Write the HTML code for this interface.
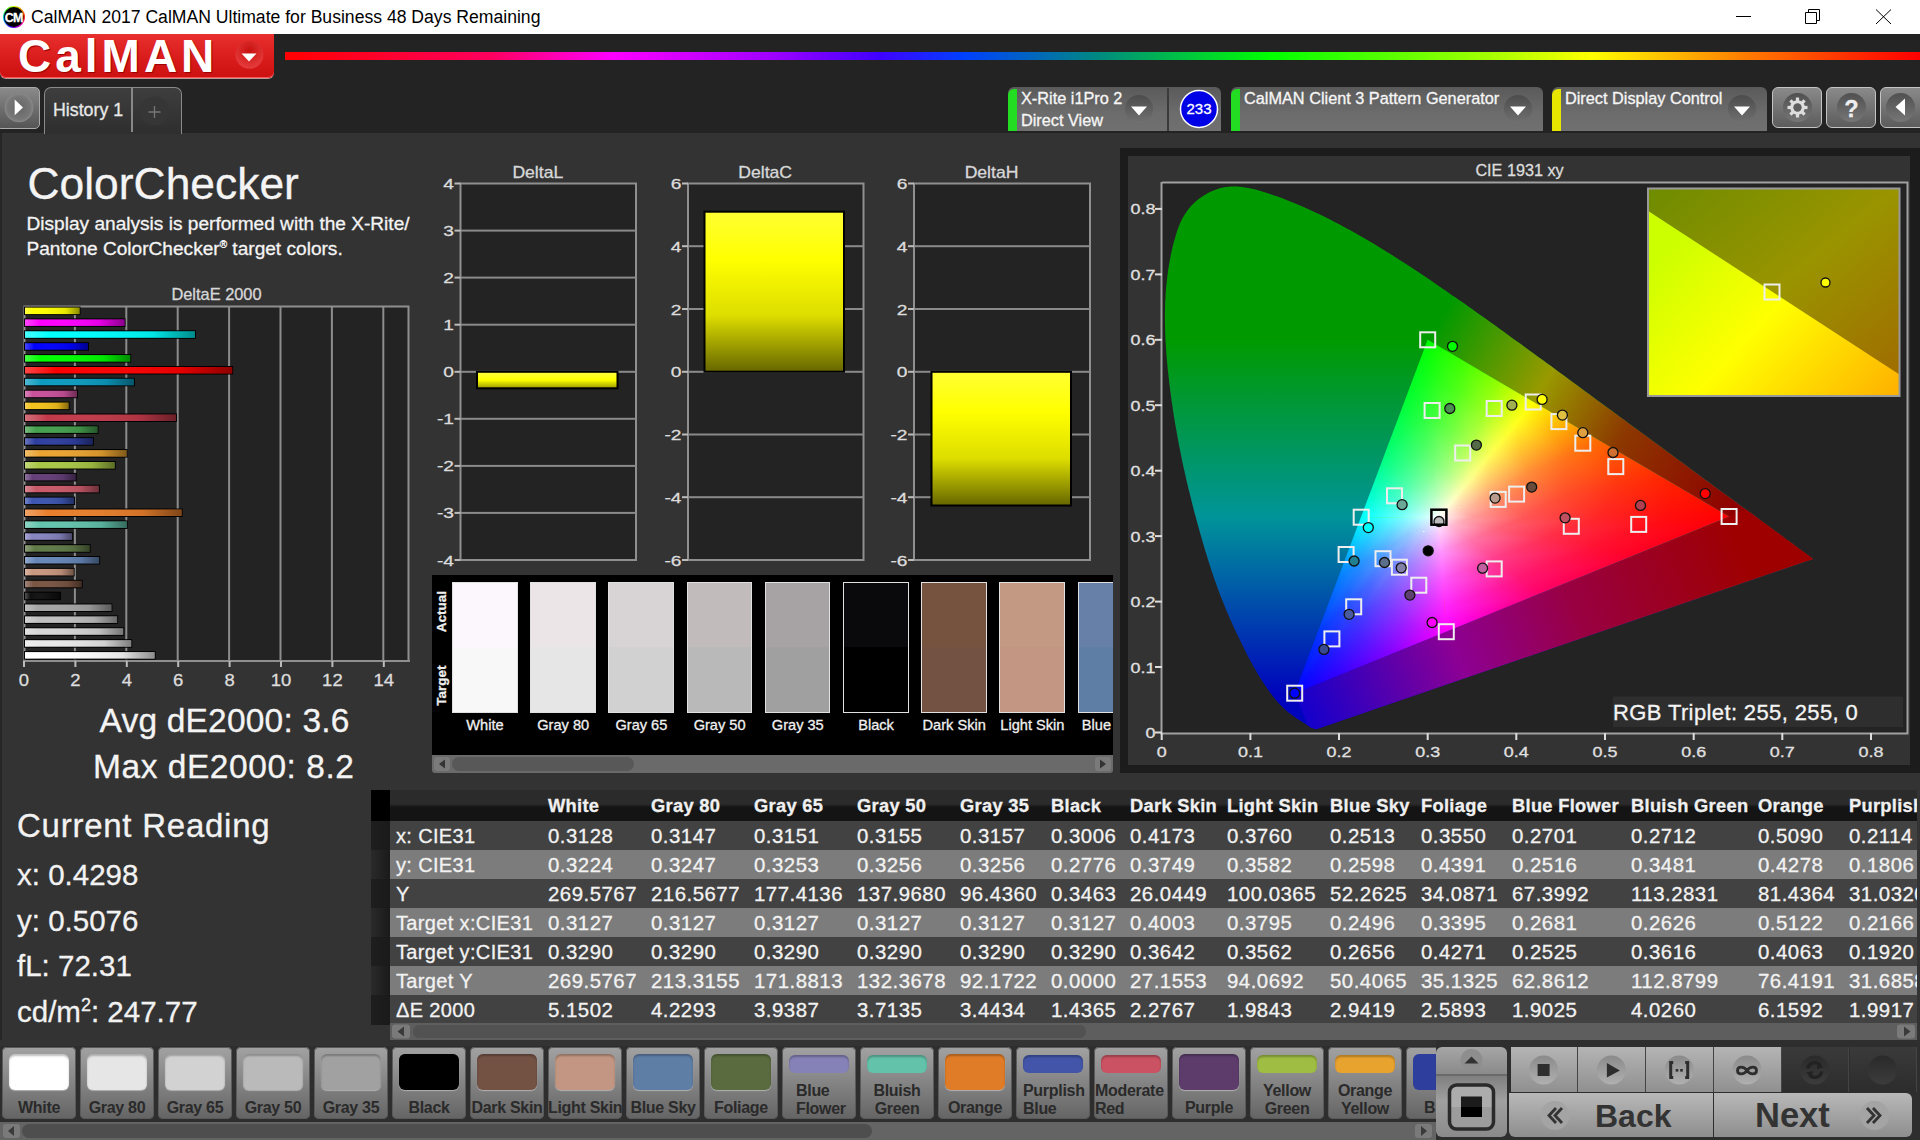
<!DOCTYPE html>
<html><head><meta charset="utf-8"><style>
html,body{margin:0;padding:0}
body{width:1920px;height:1140px;overflow:hidden;position:relative;background:#333;font-family:"Liberation Sans",sans-serif}
.t{position:absolute;white-space:nowrap;font-family:"Liberation Sans",sans-serif;-webkit-text-stroke:0.3px currentColor}
svg{overflow:visible}
svg text{font-family:"Liberation Sans",sans-serif}
</style></head><body>
<div style="position:absolute;left:0;top:0;width:1920px;height:34px;background:#fff"></div><div style="position:absolute;left:2.8px;top:6px;width:22px;height:22px;border-radius:50%;background:conic-gradient(#ccff00,#ff3300 80deg,#ff00aa 130deg,#3300ff 200deg,#00ccff 260deg,#33ff33 310deg,#ccff00)"></div><svg style="position:absolute;left:0;top:0" width="40" height="34">
<circle cx="13.8" cy="17" r="10" fill="#000"/>
<text x="13.6" y="21.5" font-family="Liberation Sans" font-weight="bold" font-size="12.5" fill="#fff" text-anchor="middle" letter-spacing="-0.8" stroke="#fff" stroke-width="0.3">CM</text></svg><div class="t" style="left:31px;top:6px;font-size:17.6px;color:#000;line-height:22px;-webkit-text-stroke:0">CalMAN 2017 CalMAN Ultimate for Business 48 Days Remaining</div><svg style="position:absolute;left:1720px;top:0" width="200" height="34" fill="none" stroke="#000" stroke-width="1">
<path d="M16 16.5h15"/>
<path d="M85.5 12.5h11v11h-11z"/><path d="M88.5 12.5v-3h11v11h-3"/>
<path d="M156 9.5l15 14.5M171 9.5l-15 14.5"/></svg><div style="position:absolute;left:0;top:34px;width:1920px;height:99px;background:#232323"></div><div style="position:absolute;left:0;top:34px;width:274px;height:44px;border-radius:0 0 6px 6px;background:linear-gradient(#e8302f,#d81a1a 60%,#cc1111);box-shadow:inset 0 -1px 0 #f55, 0 1px 0 #b99"></div><div class="t" style="left:18px;top:31px;font-size:46px;font-weight:bold;color:#fff;letter-spacing:4px;line-height:50px;text-shadow:1px 1px 1px #900;-webkit-text-stroke:0">CalMAN</div><svg style="position:absolute;left:230px;top:38px" width="40" height="36"><defs><radialGradient id="rdg" cx="0.5" cy="0.35" r="0.6"><stop offset="0" stop-color="#c81010"/><stop offset="1" stop-color="#e53a3a"/></radialGradient></defs>
<circle cx="19.4" cy="16.8" r="14" fill="url(#rdg)"/><path d="M11.5 15.5h15l-7.5 8z" fill="#fff"/></svg><div style="position:absolute;left:285px;top:52px;width:1635px;height:8px;background:linear-gradient(90deg,#ff0000 0%,#ff0060 12.7%,#ff00ff 20%,#a000ff 29.7%,#4000ff 36.3%,#0040ff 41.5%,#008a80 49.8%,#00ff00 60.3%,#a0ff00 73.3%,#ffff00 79.9%,#ff8000 89%,#ff2000 96.9%,#ff0000 100%)"></div><div style="position:absolute;left:-4px;top:87px;width:42px;height:40px;border:1.5px solid #aaa;border-radius:5px;background:linear-gradient(#8a8a8a,#555)"></div>
<svg style="position:absolute;left:0;top:87px" width="40" height="42"><defs><radialGradient id="btc" cx="0.5" cy="0.5" r="0.5"><stop offset="0" stop-color="#666"/><stop offset="0.8" stop-color="#777"/><stop offset="1" stop-color="#888"/></radialGradient></defs>
<circle cx="19" cy="20.8" r="14.4" fill="url(#btc)"/><path d="M14.7 12.5L23 20.5L14.7 28.2Z" fill="#fff"/></svg><div style="position:absolute;left:43.5px;top:87px;width:136px;height:46px;border:1.5px solid #8a8a8a;border-bottom:none;border-radius:7px 7px 0 0;background:linear-gradient(#3e3e3e,#2e2e2e)"></div>
<div style="position:absolute;left:131px;top:88px;width:1.5px;height:44px;background:#888"></div>
<div class="t" style="left:53px;top:99px;font-size:17.8px;color:#e8e8e8;line-height:22px">History 1</div>
<svg style="position:absolute;left:133px;top:88px" width="46" height="44"><circle cx="21.5" cy="23" r="14.5" fill="#363636"/><path d="M15.5 24h12M21.5 18v12" stroke="#777" stroke-width="1.3"/></svg><div style="position:absolute;left:1008px;top:87px;width:213px;height:44px;border-radius:6px 6px 0 0;background:linear-gradient(#5a5a5a,#6c6c6c 60%,#707070);overflow:hidden"><div style="position:absolute;left:0;top:2px;width:9px;height:44px;border-radius:6px 0 0 0;background:#22dd22"></div></div><div class="t" style="left:1021px;top:88.0px;font-size:16.3px;color:#f6f6f6;line-height:20px">X-Rite i1Pro 2</div><div class="t" style="left:1021px;top:109.5px;font-size:16.3px;color:#f6f6f6;line-height:20px">Direct View</div><svg style="position:absolute;left:1119px;top:87px" width="40" height="44"><defs><linearGradient id="ddg1008" x1="0" y1="0" x2="0" y2="1"><stop offset="0" stop-color="#4c4c4c"/><stop offset="1" stop-color="#707070"/></linearGradient></defs><circle cx="20" cy="22" r="14" fill="url(#ddg1008)"/><path d="M12 19.5h16l-8 9z" fill="#fff"/></svg><div style="position:absolute;left:1167px;top:88px;width:2px;height:43px;background:#3a3a3a"></div><svg style="position:absolute;left:1178px;top:88px" width="42" height="42"><circle cx="21" cy="21" r="18.5" fill="#0000e6" stroke="#fff" stroke-width="1.5"/><text x="21" y="26.3" font-family="Liberation Sans" font-size="15" fill="#fff" text-anchor="middle" stroke="#fff" stroke-width="0.3">233</text></svg><div style="position:absolute;left:1231px;top:87px;width:312px;height:44px;border-radius:6px 6px 0 0;background:linear-gradient(#5a5a5a,#6c6c6c 60%,#707070);overflow:hidden"><div style="position:absolute;left:0;top:2px;width:9px;height:44px;border-radius:6px 0 0 0;background:#22dd22"></div></div><div class="t" style="left:1244px;top:88.0px;font-size:16.3px;color:#f6f6f6;line-height:20px">CalMAN Client 3 Pattern Generator</div><svg style="position:absolute;left:1498px;top:87px" width="40" height="44"><defs><linearGradient id="ddg1231" x1="0" y1="0" x2="0" y2="1"><stop offset="0" stop-color="#4c4c4c"/><stop offset="1" stop-color="#707070"/></linearGradient></defs><circle cx="20" cy="22" r="14" fill="url(#ddg1231)"/><path d="M12 19.5h16l-8 9z" fill="#fff"/></svg><div style="position:absolute;left:1552px;top:87px;width:215px;height:44px;border-radius:6px 6px 0 0;background:linear-gradient(#5a5a5a,#6c6c6c 60%,#707070);overflow:hidden"><div style="position:absolute;left:0;top:2px;width:9px;height:44px;border-radius:6px 0 0 0;background:#e6e600"></div></div><div class="t" style="left:1565px;top:88.0px;font-size:16.3px;color:#f6f6f6;line-height:20px">Direct Display Control</div><svg style="position:absolute;left:1722px;top:87px" width="40" height="44"><defs><linearGradient id="ddg1552" x1="0" y1="0" x2="0" y2="1"><stop offset="0" stop-color="#4c4c4c"/><stop offset="1" stop-color="#707070"/></linearGradient></defs><circle cx="20" cy="22" r="14" fill="url(#ddg1552)"/><path d="M12 19.5h16l-8 9z" fill="#fff"/></svg><div style="position:absolute;left:1772px;top:86.5px;width:48px;height:39px;border:1.5px solid #c4c4c4;border-radius:6px;background:linear-gradient(#8a8a8a,#5c5c5c)"></div><svg style="position:absolute;left:1772px;top:86px" width="51" height="42"><defs><linearGradient id="ibg1772" x1="0" y1="0" x2="0" y2="1"><stop offset="0" stop-color="#505050"/><stop offset="1" stop-color="#767676"/></linearGradient></defs><circle cx="25.5" cy="21.5" r="14.5" fill="url(#ibg1772)"/><g transform="translate(25.5,21.5)" fill="#dedede"><circle r="7.3"/><rect x="-1.6" y="-10" width="3.2" height="4" transform="rotate(0)"/><rect x="-1.6" y="-10" width="3.2" height="4" transform="rotate(45)"/><rect x="-1.6" y="-10" width="3.2" height="4" transform="rotate(90)"/><rect x="-1.6" y="-10" width="3.2" height="4" transform="rotate(135)"/><rect x="-1.6" y="-10" width="3.2" height="4" transform="rotate(180)"/><rect x="-1.6" y="-10" width="3.2" height="4" transform="rotate(225)"/><rect x="-1.6" y="-10" width="3.2" height="4" transform="rotate(270)"/><rect x="-1.6" y="-10" width="3.2" height="4" transform="rotate(315)"/><circle r="4.2" fill="#5e5e5e"/></g></svg><div style="position:absolute;left:1826px;top:86.5px;width:48px;height:39px;border:1.5px solid #c4c4c4;border-radius:6px;background:linear-gradient(#8a8a8a,#5c5c5c)"></div><svg style="position:absolute;left:1826px;top:86px" width="51" height="42"><defs><linearGradient id="ibg1826" x1="0" y1="0" x2="0" y2="1"><stop offset="0" stop-color="#505050"/><stop offset="1" stop-color="#767676"/></linearGradient></defs><circle cx="25.5" cy="21.5" r="14.5" fill="url(#ibg1826)"/><text x="25.5" y="30.5" font-family="Liberation Sans" font-weight="bold" font-size="23.5" fill="#eee" text-anchor="middle" stroke="#eee" stroke-width="0.3">?</text></svg><div style="position:absolute;left:1880px;top:86.5px;width:48px;height:39px;border:1.5px solid #c4c4c4;border-radius:6px;background:linear-gradient(#8a8a8a,#5c5c5c)"></div><svg style="position:absolute;left:1880px;top:86px" width="51" height="42"><defs><linearGradient id="ibg1880" x1="0" y1="0" x2="0" y2="1"><stop offset="0" stop-color="#505050"/><stop offset="1" stop-color="#767676"/></linearGradient></defs><circle cx="20.5" cy="21.5" r="14.5" fill="url(#ibg1880)"/><path d="M25 12.5l-9.5 8.5l9.5 8.5z" fill="#fff"/></svg>
<div style="position:absolute;left:0;top:133px;width:2px;height:907px;background:#262626"></div><div class="t" style="left:27.5px;top:156.5px;font-size:44.4px;color:#f4f4f4;line-height:54px">ColorChecker</div><div class="t" style="left:26.5px;top:211px;font-size:19.1px;color:#f4f4f4;line-height:25px">Display analysis is performed with the X-Rite/<br>Pantone ColorChecker<sup style="font-size:10px;vertical-align:7px;line-height:0">&reg;</sup> target colors.</div><svg style="position:absolute;left:0;top:0" width="440" height="700"><defs><linearGradient id="bsh" x1="0" y1="0" x2="1" y2="0"><stop offset="0" stop-color="#fff" stop-opacity="0.28"/><stop offset="0.15" stop-color="#fff" stop-opacity="0"/><stop offset="0.75" stop-color="#000" stop-opacity="0.1"/><stop offset="1" stop-color="#000" stop-opacity="0.45"/></linearGradient></defs><rect x="24.5" y="306" width="384" height="354.5" fill="#232323"/><rect x="73.9" y="306" width="2" height="355" fill="#8c8c8c"/><rect x="125.3" y="306" width="2" height="355" fill="#8c8c8c"/><rect x="176.7" y="306" width="2" height="355" fill="#8c8c8c"/><rect x="228.1" y="306" width="2" height="355" fill="#8c8c8c"/><rect x="279.5" y="306" width="2" height="355" fill="#8c8c8c"/><rect x="330.9" y="306" width="2" height="355" fill="#8c8c8c"/><rect x="382.3" y="306" width="2" height="355" fill="#8c8c8c"/><path d="M24.5 661V306.5H408.5V661" fill="none" stroke="#8f8f8f" stroke-width="2"/><rect x="23" y="660" width="387" height="2" fill="#8f8f8f"/><rect x="23.0" y="661" width="2" height="6" fill="#bbb"/><text transform="translate(24.0,686) scale(1.12,0.95)" font-size="16.5" fill="#dcdcdc" text-anchor="middle" stroke="#dcdcdc" stroke-width="0.3">0</text><rect x="74.4" y="661" width="2" height="6" fill="#bbb"/><text transform="translate(75.4,686) scale(1.12,0.95)" font-size="16.5" fill="#dcdcdc" text-anchor="middle" stroke="#dcdcdc" stroke-width="0.3">2</text><rect x="125.8" y="661" width="2" height="6" fill="#bbb"/><text transform="translate(126.8,686) scale(1.12,0.95)" font-size="16.5" fill="#dcdcdc" text-anchor="middle" stroke="#dcdcdc" stroke-width="0.3">4</text><rect x="177.2" y="661" width="2" height="6" fill="#bbb"/><text transform="translate(178.2,686) scale(1.12,0.95)" font-size="16.5" fill="#dcdcdc" text-anchor="middle" stroke="#dcdcdc" stroke-width="0.3">6</text><rect x="228.6" y="661" width="2" height="6" fill="#bbb"/><text transform="translate(229.6,686) scale(1.12,0.95)" font-size="16.5" fill="#dcdcdc" text-anchor="middle" stroke="#dcdcdc" stroke-width="0.3">8</text><rect x="280.0" y="661" width="2" height="6" fill="#bbb"/><text transform="translate(281.0,686) scale(1.12,0.95)" font-size="16.5" fill="#dcdcdc" text-anchor="middle" stroke="#dcdcdc" stroke-width="0.3">10</text><rect x="331.4" y="661" width="2" height="6" fill="#bbb"/><text transform="translate(332.4,686) scale(1.12,0.95)" font-size="16.5" fill="#dcdcdc" text-anchor="middle" stroke="#dcdcdc" stroke-width="0.3">12</text><rect x="382.8" y="661" width="2" height="6" fill="#bbb"/><text transform="translate(383.8,686) scale(1.12,0.95)" font-size="16.5" fill="#dcdcdc" text-anchor="middle" stroke="#dcdcdc" stroke-width="0.3">14</text><rect x="24" y="306.6" width="56.5" height="8.5" fill="#000"/><rect x="25" y="307.6" width="54.5" height="6.5" fill="#ffff00"/><rect x="25" y="307.6" width="54.5" height="6.5" fill="url(#bsh)"/><rect x="24" y="318.4" width="101.5" height="8.5" fill="#000"/><rect x="25" y="319.4" width="99.5" height="6.5" fill="#ff00ff"/><rect x="25" y="319.4" width="99.5" height="6.5" fill="url(#bsh)"/><rect x="24" y="330.3" width="171.9" height="8.5" fill="#000"/><rect x="25" y="331.3" width="169.9" height="6.5" fill="#00ffff"/><rect x="25" y="331.3" width="169.9" height="6.5" fill="url(#bsh)"/><rect x="24" y="342.2" width="65.0" height="8.5" fill="#000"/><rect x="25" y="343.2" width="63.0" height="6.5" fill="#0000ff"/><rect x="25" y="343.2" width="63.0" height="6.5" fill="url(#bsh)"/><rect x="24" y="354.1" width="107.2" height="8.5" fill="#000"/><rect x="25" y="355.1" width="105.2" height="6.5" fill="#00ff00"/><rect x="25" y="355.1" width="105.2" height="6.5" fill="url(#bsh)"/><rect x="24" y="366.0" width="209.2" height="8.5" fill="#000"/><rect x="25" y="367.0" width="207.2" height="6.5" fill="#ff0000"/><rect x="25" y="367.0" width="207.2" height="6.5" fill="url(#bsh)"/><rect x="24" y="377.8" width="111.0" height="8.5" fill="#000"/><rect x="25" y="378.8" width="109.0" height="6.5" fill="#0c9cc0"/><rect x="25" y="378.8" width="109.0" height="6.5" fill="url(#bsh)"/><rect x="24" y="389.7" width="54.0" height="8.5" fill="#000"/><rect x="25" y="390.7" width="52.0" height="6.5" fill="#c8519b"/><rect x="25" y="390.7" width="52.0" height="6.5" fill="url(#bsh)"/><rect x="24" y="401.6" width="45.5" height="8.5" fill="#000"/><rect x="25" y="402.6" width="43.5" height="6.5" fill="#f4c21c"/><rect x="25" y="402.6" width="43.5" height="6.5" fill="url(#bsh)"/><rect x="24" y="413.5" width="152.9" height="8.5" fill="#000"/><rect x="25" y="414.5" width="150.9" height="6.5" fill="#c23a4a"/><rect x="25" y="414.5" width="150.9" height="6.5" fill="url(#bsh)"/><rect x="24" y="425.4" width="74.5" height="8.5" fill="#000"/><rect x="25" y="426.4" width="72.5" height="6.5" fill="#45a04e"/><rect x="25" y="426.4" width="72.5" height="6.5" fill="url(#bsh)"/><rect x="24" y="437.2" width="69.9" height="8.5" fill="#000"/><rect x="25" y="438.2" width="67.9" height="6.5" fill="#2f3fa0"/><rect x="25" y="438.2" width="67.9" height="6.5" fill="url(#bsh)"/><rect x="24" y="449.1" width="103.6" height="8.5" fill="#000"/><rect x="25" y="450.1" width="101.6" height="6.5" fill="#eba431"/><rect x="25" y="450.1" width="101.6" height="6.5" fill="url(#bsh)"/><rect x="24" y="461.0" width="91.7" height="8.5" fill="#000"/><rect x="25" y="462.0" width="89.7" height="6.5" fill="#a8c746"/><rect x="25" y="462.0" width="89.7" height="6.5" fill="url(#bsh)"/><rect x="24" y="472.9" width="52.7" height="8.5" fill="#000"/><rect x="25" y="473.9" width="50.7" height="6.5" fill="#643e78"/><rect x="25" y="473.9" width="50.7" height="6.5" fill="url(#bsh)"/><rect x="24" y="484.8" width="75.8" height="8.5" fill="#000"/><rect x="25" y="485.8" width="73.8" height="6.5" fill="#c85a6a"/><rect x="25" y="485.8" width="73.8" height="6.5" fill="url(#bsh)"/><rect x="24" y="496.6" width="51.1" height="8.5" fill="#000"/><rect x="25" y="497.6" width="49.1" height="6.5" fill="#3c55b0"/><rect x="25" y="497.6" width="49.1" height="6.5" fill="url(#bsh)"/><rect x="24" y="508.5" width="158.6" height="8.5" fill="#000"/><rect x="25" y="509.5" width="156.6" height="6.5" fill="#e87f2c"/><rect x="25" y="509.5" width="156.6" height="6.5" fill="url(#bsh)"/><rect x="24" y="520.4" width="103.8" height="8.5" fill="#000"/><rect x="25" y="521.4" width="101.8" height="6.5" fill="#63c4ad"/><rect x="25" y="521.4" width="101.8" height="6.5" fill="url(#bsh)"/><rect x="24" y="532.3" width="49.1" height="8.5" fill="#000"/><rect x="25" y="533.3" width="47.1" height="6.5" fill="#8784c0"/><rect x="25" y="533.3" width="47.1" height="6.5" fill="url(#bsh)"/><rect x="24" y="544.2" width="66.6" height="8.5" fill="#000"/><rect x="25" y="545.2" width="64.6" height="6.5" fill="#607a48"/><rect x="25" y="545.2" width="64.6" height="6.5" fill="url(#bsh)"/><rect x="24" y="556.0" width="76.1" height="8.5" fill="#000"/><rect x="25" y="557.0" width="74.1" height="6.5" fill="#6687b8"/><rect x="25" y="557.0" width="74.1" height="6.5" fill="url(#bsh)"/><rect x="24" y="567.9" width="50.6" height="8.5" fill="#000"/><rect x="25" y="568.9" width="48.6" height="6.5" fill="#c99880"/><rect x="25" y="568.9" width="48.6" height="6.5" fill="url(#bsh)"/><rect x="24" y="579.8" width="58.6" height="8.5" fill="#000"/><rect x="25" y="580.8" width="56.6" height="6.5" fill="#7a5543"/><rect x="25" y="580.8" width="56.6" height="6.5" fill="url(#bsh)"/><rect x="24" y="591.7" width="37.0" height="8.5" fill="#000"/><rect x="25" y="592.7" width="35.0" height="6.5" fill="#111111"/><rect x="25" y="592.7" width="35.0" height="6.5" fill="url(#bsh)"/><rect x="24" y="603.5" width="88.4" height="8.5" fill="#000"/><rect x="25" y="604.5" width="86.4" height="6.5" fill="#a5a5a5"/><rect x="25" y="604.5" width="86.4" height="6.5" fill="url(#bsh)"/><rect x="24" y="615.4" width="94.1" height="8.5" fill="#000"/><rect x="25" y="616.4" width="92.1" height="6.5" fill="#c0c0c0"/><rect x="25" y="616.4" width="92.1" height="6.5" fill="url(#bsh)"/><rect x="24" y="627.3" width="100.2" height="8.5" fill="#000"/><rect x="25" y="628.3" width="98.2" height="6.5" fill="#d6d6d6"/><rect x="25" y="628.3" width="98.2" height="6.5" fill="url(#bsh)"/><rect x="24" y="639.2" width="108.2" height="8.5" fill="#000"/><rect x="25" y="640.2" width="106.2" height="6.5" fill="#e8e8e8"/><rect x="25" y="640.2" width="106.2" height="6.5" fill="url(#bsh)"/><rect x="24" y="651.1" width="131.6" height="8.5" fill="#000"/><rect x="25" y="652.1" width="129.6" height="6.5" fill="#ffffff"/><rect x="25" y="652.1" width="129.6" height="6.5" fill="url(#bsh)"/><text x="216.5" y="300" font-size="16.4" fill="#d8d8d8" text-anchor="middle" stroke="#d8d8d8" stroke-width="0.3">DeltaE 2000</text></svg><div class="t" style="left:99.5px;top:701px;font-size:33.5px;letter-spacing:0.2px;color:#f4f4f4;line-height:40px">Avg dE2000: 3.6</div><div class="t" style="left:93px;top:747px;font-size:33.5px;letter-spacing:0.55px;color:#f4f4f4;line-height:40px">Max dE2000: 8.2</div><svg style="position:absolute;left:0;top:0" width="1120" height="600"><defs><linearGradient id="ylg" x1="0" y1="0" x2="0" y2="1"><stop offset="0" stop-color="#ffff33"/><stop offset="0.3" stop-color="#ffff00"/><stop offset="0.65" stop-color="#dddd00"/><stop offset="1" stop-color="#666600"/></linearGradient><linearGradient id="ylg2" x1="0" y1="0" x2="0" y2="1"><stop offset="0" stop-color="#ffff44"/><stop offset="0.5" stop-color="#ffff00"/><stop offset="1" stop-color="#999900"/></linearGradient></defs><rect x="460.5" y="183.5" width="175.5" height="376.5" fill="#232323" stroke="#8f8f8f" stroke-width="2"/><rect x="454.5" y="182.5" width="6" height="2" fill="#bbb"/><text transform="translate(454.0,189.0) scale(1.2,0.92)" font-size="16" fill="#dcdcdc" text-anchor="end" stroke="#dcdcdc" stroke-width="0.3">4</text><rect x="460.5" y="229.6" width="175.5" height="2" fill="#8a8a8a"/><rect x="454.5" y="229.6" width="6" height="2" fill="#bbb"/><text transform="translate(454.0,236.1) scale(1.2,0.92)" font-size="16" fill="#dcdcdc" text-anchor="end" stroke="#dcdcdc" stroke-width="0.3">3</text><rect x="460.5" y="276.6" width="175.5" height="2" fill="#8a8a8a"/><rect x="454.5" y="276.6" width="6" height="2" fill="#bbb"/><text transform="translate(454.0,283.1) scale(1.2,0.92)" font-size="16" fill="#dcdcdc" text-anchor="end" stroke="#dcdcdc" stroke-width="0.3">2</text><rect x="460.5" y="323.7" width="175.5" height="2" fill="#8a8a8a"/><rect x="454.5" y="323.7" width="6" height="2" fill="#bbb"/><text transform="translate(454.0,330.2) scale(1.2,0.92)" font-size="16" fill="#dcdcdc" text-anchor="end" stroke="#dcdcdc" stroke-width="0.3">1</text><rect x="460.5" y="370.8" width="175.5" height="2" fill="#8a8a8a"/><rect x="454.5" y="370.8" width="6" height="2" fill="#bbb"/><text transform="translate(454.0,377.2) scale(1.2,0.92)" font-size="16" fill="#dcdcdc" text-anchor="end" stroke="#dcdcdc" stroke-width="0.3">0</text><rect x="460.5" y="417.8" width="175.5" height="2" fill="#8a8a8a"/><rect x="454.5" y="417.8" width="6" height="2" fill="#bbb"/><text transform="translate(454.0,424.3) scale(1.2,0.92)" font-size="16" fill="#dcdcdc" text-anchor="end" stroke="#dcdcdc" stroke-width="0.3">-1</text><rect x="460.5" y="464.9" width="175.5" height="2" fill="#8a8a8a"/><rect x="454.5" y="464.9" width="6" height="2" fill="#bbb"/><text transform="translate(454.0,471.4) scale(1.2,0.92)" font-size="16" fill="#dcdcdc" text-anchor="end" stroke="#dcdcdc" stroke-width="0.3">-2</text><rect x="460.5" y="511.9" width="175.5" height="2" fill="#8a8a8a"/><rect x="454.5" y="511.9" width="6" height="2" fill="#bbb"/><text transform="translate(454.0,518.4) scale(1.2,0.92)" font-size="16" fill="#dcdcdc" text-anchor="end" stroke="#dcdcdc" stroke-width="0.3">-3</text><rect x="454.5" y="559.0" width="6" height="2" fill="#bbb"/><text transform="translate(454.0,565.5) scale(1.2,0.92)" font-size="16" fill="#dcdcdc" text-anchor="end" stroke="#dcdcdc" stroke-width="0.3">-4</text><text transform="translate(537.8,178.3) scale(1.1,1)" font-size="16" fill="#d8d8d8" text-anchor="middle" stroke="#d8d8d8" stroke-width="0.3">DeltaL</text><rect x="477.0" y="371.8" width="140.5" height="16.5" fill="url(#ylg2)" stroke="#000" stroke-width="2"/><rect x="688.0" y="183.5" width="175.5" height="376.5" fill="#232323" stroke="#8f8f8f" stroke-width="2"/><rect x="682.0" y="182.5" width="6" height="2" fill="#bbb"/><text transform="translate(681.5,189.0) scale(1.2,0.92)" font-size="16" fill="#dcdcdc" text-anchor="end" stroke="#dcdcdc" stroke-width="0.3">6</text><rect x="688.0" y="245.2" width="175.5" height="2" fill="#8a8a8a"/><rect x="682.0" y="245.2" width="6" height="2" fill="#bbb"/><text transform="translate(681.5,251.8) scale(1.2,0.92)" font-size="16" fill="#dcdcdc" text-anchor="end" stroke="#dcdcdc" stroke-width="0.3">4</text><rect x="688.0" y="308.0" width="175.5" height="2" fill="#8a8a8a"/><rect x="682.0" y="308.0" width="6" height="2" fill="#bbb"/><text transform="translate(681.5,314.5) scale(1.2,0.92)" font-size="16" fill="#dcdcdc" text-anchor="end" stroke="#dcdcdc" stroke-width="0.3">2</text><rect x="688.0" y="370.8" width="175.5" height="2" fill="#8a8a8a"/><rect x="682.0" y="370.8" width="6" height="2" fill="#bbb"/><text transform="translate(681.5,377.2) scale(1.2,0.92)" font-size="16" fill="#dcdcdc" text-anchor="end" stroke="#dcdcdc" stroke-width="0.3">0</text><rect x="688.0" y="433.5" width="175.5" height="2" fill="#8a8a8a"/><rect x="682.0" y="433.5" width="6" height="2" fill="#bbb"/><text transform="translate(681.5,440.0) scale(1.2,0.92)" font-size="16" fill="#dcdcdc" text-anchor="end" stroke="#dcdcdc" stroke-width="0.3">-2</text><rect x="688.0" y="496.2" width="175.5" height="2" fill="#8a8a8a"/><rect x="682.0" y="496.2" width="6" height="2" fill="#bbb"/><text transform="translate(681.5,502.8) scale(1.2,0.92)" font-size="16" fill="#dcdcdc" text-anchor="end" stroke="#dcdcdc" stroke-width="0.3">-4</text><rect x="682.0" y="559.0" width="6" height="2" fill="#bbb"/><text transform="translate(681.5,565.5) scale(1.2,0.92)" font-size="16" fill="#dcdcdc" text-anchor="end" stroke="#dcdcdc" stroke-width="0.3">-6</text><text transform="translate(765.2,178.3) scale(1.1,1)" font-size="16" fill="#d8d8d8" text-anchor="middle" stroke="#d8d8d8" stroke-width="0.3">DeltaC</text><rect x="704.5" y="211.7" width="139.5" height="160.0" fill="url(#ylg)" stroke="#000" stroke-width="2"/><rect x="914.0" y="183.5" width="176.0" height="376.5" fill="#232323" stroke="#8f8f8f" stroke-width="2"/><rect x="908.0" y="182.5" width="6" height="2" fill="#bbb"/><text transform="translate(907.5,189.0) scale(1.2,0.92)" font-size="16" fill="#dcdcdc" text-anchor="end" stroke="#dcdcdc" stroke-width="0.3">6</text><rect x="914.0" y="245.2" width="176.0" height="2" fill="#8a8a8a"/><rect x="908.0" y="245.2" width="6" height="2" fill="#bbb"/><text transform="translate(907.5,251.8) scale(1.2,0.92)" font-size="16" fill="#dcdcdc" text-anchor="end" stroke="#dcdcdc" stroke-width="0.3">4</text><rect x="914.0" y="308.0" width="176.0" height="2" fill="#8a8a8a"/><rect x="908.0" y="308.0" width="6" height="2" fill="#bbb"/><text transform="translate(907.5,314.5) scale(1.2,0.92)" font-size="16" fill="#dcdcdc" text-anchor="end" stroke="#dcdcdc" stroke-width="0.3">2</text><rect x="914.0" y="370.8" width="176.0" height="2" fill="#8a8a8a"/><rect x="908.0" y="370.8" width="6" height="2" fill="#bbb"/><text transform="translate(907.5,377.2) scale(1.2,0.92)" font-size="16" fill="#dcdcdc" text-anchor="end" stroke="#dcdcdc" stroke-width="0.3">0</text><rect x="914.0" y="433.5" width="176.0" height="2" fill="#8a8a8a"/><rect x="908.0" y="433.5" width="6" height="2" fill="#bbb"/><text transform="translate(907.5,440.0) scale(1.2,0.92)" font-size="16" fill="#dcdcdc" text-anchor="end" stroke="#dcdcdc" stroke-width="0.3">-2</text><rect x="914.0" y="496.2" width="176.0" height="2" fill="#8a8a8a"/><rect x="908.0" y="496.2" width="6" height="2" fill="#bbb"/><text transform="translate(907.5,502.8) scale(1.2,0.92)" font-size="16" fill="#dcdcdc" text-anchor="end" stroke="#dcdcdc" stroke-width="0.3">-4</text><rect x="908.0" y="559.0" width="6" height="2" fill="#bbb"/><text transform="translate(907.5,565.5) scale(1.2,0.92)" font-size="16" fill="#dcdcdc" text-anchor="end" stroke="#dcdcdc" stroke-width="0.3">-6</text><text transform="translate(991.5,178.3) scale(1.1,1)" font-size="16" fill="#d8d8d8" text-anchor="middle" stroke="#d8d8d8" stroke-width="0.3">DeltaH</text><rect x="931.5" y="371.8" width="139.5" height="133.7" fill="url(#ylg)" stroke="#000" stroke-width="2"/></svg><div style="position:absolute;left:432px;top:575px;width:681px;height:180px;background:#000;overflow:hidden"><div style="position:absolute;left:20.0px;top:7px;width:63.5px;height:128.5px;border:1.5px solid #e0e0e0;background:linear-gradient(#fcf7fc 50%,#f8f8f8 50%)"></div><div class="t" style="left:20.0px;top:141px;width:66px;text-align:center;font-size:14.6px;color:#f0f0f0;line-height:18px">White</div><div style="position:absolute;left:98.2px;top:7px;width:63.5px;height:128.5px;border:1.5px solid #e0e0e0;background:linear-gradient(#ebe5e7 50%,#e6e6e6 50%)"></div><div class="t" style="left:98.2px;top:141px;width:66px;text-align:center;font-size:14.6px;color:#f0f0f0;line-height:18px">Gray 80</div><div style="position:absolute;left:176.4px;top:7px;width:63.5px;height:128.5px;border:1.5px solid #e0e0e0;background:linear-gradient(#d8d3d5 50%,#d1d1d1 50%)"></div><div class="t" style="left:176.4px;top:141px;width:66px;text-align:center;font-size:14.6px;color:#f0f0f0;line-height:18px">Gray 65</div><div style="position:absolute;left:254.6px;top:7px;width:63.5px;height:128.5px;border:1.5px solid #e0e0e0;background:linear-gradient(#c1bbbc 50%,#b9b9b9 50%)"></div><div class="t" style="left:254.6px;top:141px;width:66px;text-align:center;font-size:14.6px;color:#f0f0f0;line-height:18px">Gray 50</div><div style="position:absolute;left:332.8px;top:7px;width:63.5px;height:128.5px;border:1.5px solid #e0e0e0;background:linear-gradient(#a7a2a3 50%,#a0a0a0 50%)"></div><div class="t" style="left:332.8px;top:141px;width:66px;text-align:center;font-size:14.6px;color:#f0f0f0;line-height:18px">Gray 35</div><div style="position:absolute;left:411.0px;top:7px;width:63.5px;height:128.5px;border:1.5px solid #e0e0e0;background:linear-gradient(#0a0a0c 50%,#000000 50%)"></div><div class="t" style="left:411.0px;top:141px;width:66px;text-align:center;font-size:14.6px;color:#f0f0f0;line-height:18px">Black</div><div style="position:absolute;left:489.2px;top:7px;width:63.5px;height:128.5px;border:1.5px solid #e0e0e0;background:linear-gradient(#76533f 50%,#735244 50%)"></div><div class="t" style="left:489.2px;top:141px;width:66px;text-align:center;font-size:14.6px;color:#f0f0f0;line-height:18px">Dark Skin</div><div style="position:absolute;left:567.4px;top:7px;width:63.5px;height:128.5px;border:1.5px solid #e0e0e0;background:linear-gradient(#c39984 50%,#c29682 50%)"></div><div class="t" style="left:567.4px;top:141px;width:66px;text-align:center;font-size:14.6px;color:#f0f0f0;line-height:18px">Light Skin</div><div style="position:absolute;left:645.6px;top:7px;width:63.5px;height:128.5px;border:1.5px solid #e0e0e0;background:linear-gradient(#6680a8 50%,#5f7ea6 50%)"></div><div class="t" style="left:645.6px;top:141px;width:66px;text-align:center;font-size:14.6px;color:#f0f0f0;line-height:18px">Blue Sky</div><div class="t" style="left:-16px;top:29px;font-size:13.5px;color:#eee;transform:rotate(-90deg);transform-origin:50% 50%;width:50px;text-align:center;font-weight:bold">Actual</div><div class="t" style="left:-16px;top:102.5px;font-size:13.5px;color:#eee;transform:rotate(-90deg);transform-origin:50% 50%;width:50px;text-align:center;font-weight:bold">Target</div></div><div style="position:absolute;left:432px;top:755px;width:681px;height:18px;background:#6a6a6a;border-radius:0 0 3px 3px"></div><div style="position:absolute;left:452px;top:757px;width:182px;height:14px;background:#585858;border-radius:7px"></div><svg style="position:absolute;left:432px;top:755px" width="681" height="18"><rect x="2" y="2" width="16" height="14" rx="3" fill="#7a7a7a"/><path d="M13 4.5v9l-6-4.5z" fill="#333"/><rect x="663" y="2" width="16" height="14" rx="3" fill="#7a7a7a"/><path d="M668 4.5v9l6-4.5z" fill="#333"/></svg>
<div style="position:absolute;left:1120px;top:148px;width:800px;height:625px;background:#1c1c1c"></div><div style="position:absolute;left:1128px;top:156px;width:782px;height:609px;background:#333"></div><svg style="position:absolute;left:0;top:0" width="1920" height="800"><defs><clipPath id="clL"><path d="M1316.1,729.2 L1310.8,727.5 L1306.2,724.6 L1301.7,721.6 L1297.1,718.7 L1292.7,715.6 L1288.5,712.4 L1284.5,709.0 L1280.9,705.4 L1277.4,701.7 L1274.3,697.9 L1271.2,694.0 L1268.3,690.1 L1265.5,686.1 L1262.9,682.1 L1260.3,678.0 L1257.8,673.9 L1255.4,669.8 L1253.1,665.7 L1250.8,661.5 L1248.6,657.4 L1246.4,653.2 L1244.3,649.0 L1242.2,644.8 L1240.2,640.6 L1238.1,636.3 L1236.1,632.1 L1234.1,627.9 L1232.2,623.6 L1230.3,619.4 L1228.4,615.1 L1226.6,610.9 L1224.8,606.6 L1223.1,602.3 L1221.4,598.0 L1219.7,593.7 L1218.1,589.4 L1216.5,585.0 L1215.0,580.7 L1213.5,576.4 L1212.0,572.0 L1210.6,567.7 L1209.2,563.3 L1207.8,559.0 L1206.5,554.6 L1205.1,550.2 L1203.8,545.8 L1202.5,541.5 L1201.3,537.1 L1200.0,532.7 L1198.8,528.3 L1197.6,523.9 L1196.4,519.5 L1195.2,515.1 L1194.0,510.7 L1192.9,506.3 L1191.8,501.9 L1190.7,497.5 L1189.6,493.1 L1188.5,488.7 L1187.4,484.3 L1186.4,479.9 L1185.4,475.5 L1184.4,471.1 L1183.4,466.7 L1182.5,462.2 L1181.6,457.8 L1180.7,453.4 L1179.8,449.0 L1178.9,444.5 L1178.1,440.1 L1177.3,435.7 L1176.5,431.2 L1175.7,426.8 L1174.9,422.3 L1174.2,417.9 L1173.5,413.4 L1172.8,409.0 L1172.2,404.5 L1171.5,400.1 L1170.9,395.6 L1170.3,391.2 L1169.8,386.7 L1169.2,382.2 L1168.7,377.8 L1168.2,373.3 L1167.7,368.8 L1167.3,364.3 L1166.9,359.9 L1166.5,355.4 L1166.2,350.9 L1165.9,346.4 L1165.6,341.9 L1165.4,337.5 L1165.2,333.0 L1165.1,328.5 L1165.0,324.0 L1164.9,319.6 L1164.9,315.1 L1165.0,310.6 L1165.1,306.2 L1165.2,301.7 L1165.5,297.2 L1165.7,292.8 L1166.1,288.3 L1166.5,283.9 L1167.0,279.4 L1167.5,275.0 L1168.1,270.5 L1168.8,266.1 L1169.6,261.6 L1170.4,257.2 L1171.3,252.7 L1172.3,248.3 L1173.4,243.8 L1174.6,239.4 L1175.9,234.9 L1177.3,230.5 L1178.9,226.1 L1180.8,221.8 L1182.9,217.5 L1185.4,213.4 L1188.2,209.4 L1191.5,205.6 L1195.1,202.0 L1199.3,198.5 L1203.9,195.4 L1208.9,192.5 L1214.2,190.2 L1219.8,188.3 L1225.6,187.1 L1231.5,186.5 L1237.5,186.6 L1243.5,187.2 L1249.5,188.2 L1255.5,189.6 L1261.3,191.3 L1267.1,193.0 L1272.7,194.9 L1278.2,196.8 L1283.6,198.8 L1288.9,200.9 L1294.1,203.0 L1299.4,205.3 L1304.6,207.5 L1309.7,209.8 L1314.9,212.2 L1320.0,214.6 L1325.1,217.1 L1330.1,219.6 L1335.1,222.2 L1340.1,224.8 L1345.0,227.4 L1349.9,230.1 L1354.7,232.8 L1359.5,235.5 L1364.3,238.2 L1369.0,241.0 L1373.8,243.8 L1378.5,246.7 L1383.1,249.5 L1387.8,252.4 L1392.4,255.3 L1397.0,258.2 L1401.6,261.2 L1406.1,264.1 L1410.7,267.1 L1415.2,270.1 L1419.7,273.1 L1424.2,276.1 L1428.7,279.1 L1433.1,282.1 L1437.6,285.2 L1442.0,288.2 L1446.5,291.3 L1450.9,294.4 L1455.3,297.4 L1459.7,300.5 L1464.1,303.6 L1468.5,306.7 L1472.9,309.8 L1477.2,312.9 L1481.6,316.0 L1486.0,319.1 L1490.3,322.2 L1494.7,325.3 L1499.0,328.5 L1503.3,331.6 L1507.7,334.7 L1512.0,337.9 L1516.3,341.0 L1520.7,344.1 L1525.0,347.3 L1529.3,350.4 L1533.6,353.6 L1537.9,356.7 L1542.3,359.8 L1546.6,363.0 L1550.9,366.1 L1555.2,369.3 L1559.5,372.4 L1563.8,375.6 L1568.1,378.7 L1572.4,381.9 L1576.7,385.1 L1581.0,388.2 L1585.3,391.4 L1589.6,394.5 L1593.9,397.7 L1598.2,400.9 L1602.5,404.0 L1606.8,407.2 L1611.1,410.3 L1615.4,413.5 L1619.7,416.7 L1624.0,419.8 L1628.3,423.0 L1632.6,426.2 L1636.9,429.3 L1641.2,432.5 L1645.5,435.6 L1649.8,438.8 L1654.1,441.9 L1658.4,445.1 L1662.7,448.3 L1667.0,451.4 L1671.3,454.6 L1675.6,457.7 L1679.9,460.9 L1684.2,464.1 L1688.4,467.2 L1692.7,470.4 L1697.0,473.6 L1701.3,476.7 L1705.6,479.9 L1709.9,483.0 L1714.2,486.2 L1718.5,489.4 L1722.8,492.5 L1727.1,495.7 L1731.4,498.8 L1735.7,502.0 L1740.0,505.2 L1744.3,508.3 L1748.6,511.4 L1753.0,514.6 L1757.2,517.8 L1761.5,520.9 L1765.8,524.1 L1770.1,527.3 L1774.4,530.4 L1778.7,533.6 L1783.0,536.7 L1787.3,539.9 L1791.6,543.1 L1795.9,546.2 L1800.2,549.4 L1804.5,552.5 L1808.8,555.7 L1813.1,558.9Z"/></clipPath><linearGradient id="gL" gradientUnits="userSpaceOnUse" x1="0" y1="339.80" x2="0" y2="693.23"><stop offset="0" stop-color="#009a00"/><stop offset="0.5024" stop-color="#009499"/><stop offset="1" stop-color="#0005bd"/></linearGradient><linearGradient id="gT" gradientUnits="userSpaceOnUse" x1="1427.68" y1="339.80" x2="1729.12" y2="516.51"><stop offset="0.0000" stop-color="#009900"/><stop offset="0.3508" stop-color="#999900"/><stop offset="0.6200" stop-color="#8c3800"/><stop offset="1.0000" stop-color="#8f0000"/></linearGradient><linearGradient id="gB" gradientUnits="userSpaceOnUse" x1="1294.69" y1="693.23" x2="1729.12" y2="516.51"><stop offset="0.0000" stop-color="#1400cc"/><stop offset="0.3488" stop-color="#8c0094"/><stop offset="0.6200" stop-color="#990042"/><stop offset="1.0000" stop-color="#9e0000"/></linearGradient><clipPath id="clT"><path d="M1729.12,516.51 L1427.68,339.80 L1294.69,693.23 Z"/></clipPath><linearGradient id="q1" gradientUnits="userSpaceOnUse" x1="1517.9" y1="545.2" x2="1438.9" y2="517.2"><stop offset="0" stop-color="#000"/><stop offset="1" stop-color="#00ff00"/></linearGradient><linearGradient id="q2" gradientUnits="userSpaceOnUse" x1="1503.8" y1="477.5" x2="1438.9" y2="517.2"><stop offset="0" stop-color="#000"/><stop offset="1" stop-color="#0000ff"/></linearGradient><linearGradient id="q3" gradientUnits="userSpaceOnUse" x1="1498.5" y1="555.5" x2="1438.9" y2="517.2"><stop offset="0" stop-color="#000"/><stop offset="1" stop-color="#00ff00"/></linearGradient><linearGradient id="q4" gradientUnits="userSpaceOnUse" x1="1512.1" y1="485.9" x2="1438.9" y2="517.2"><stop offset="0" stop-color="#000"/><stop offset="1" stop-color="#0000ff"/></linearGradient><linearGradient id="q5" gradientUnits="userSpaceOnUse" x1="1483.2" y1="553.4" x2="1438.9" y2="517.2"><stop offset="0" stop-color="#000"/><stop offset="1" stop-color="#00ff00"/></linearGradient><linearGradient id="q6" gradientUnits="userSpaceOnUse" x1="1514.6" y1="498.2" x2="1438.9" y2="517.2"><stop offset="0" stop-color="#000"/><stop offset="1" stop-color="#0000ff"/></linearGradient><linearGradient id="q7" gradientUnits="userSpaceOnUse" x1="1549.8" y1="571.1" x2="1424.9" y2="482.4"><stop offset="0" stop-color="#000"/><stop offset="1" stop-color="#00ff00"/></linearGradient><linearGradient id="q8" gradientUnits="userSpaceOnUse" x1="1544.7" y1="461.4" x2="1428.1" y2="552.9"><stop offset="0" stop-color="#000"/><stop offset="1" stop-color="#0000ff"/></linearGradient><linearGradient id="q9" gradientUnits="userSpaceOnUse" x1="1502.3" y1="555.4" x2="1455.4" y2="492.4"><stop offset="0" stop-color="#000"/><stop offset="1" stop-color="#00ff00"/></linearGradient><linearGradient id="q10" gradientUnits="userSpaceOnUse" x1="1561.1" y1="522.6" x2="1417.6" y2="513.6"><stop offset="0" stop-color="#000"/><stop offset="1" stop-color="#0000ff"/></linearGradient><linearGradient id="q11" gradientUnits="userSpaceOnUse" x1="1522.5" y1="563.9" x2="1443.4" y2="492.0"><stop offset="0" stop-color="#000"/><stop offset="1" stop-color="#00ff00"/></linearGradient><linearGradient id="q12" gradientUnits="userSpaceOnUse" x1="1544.5" y1="465.3" x2="1426.3" y2="536.3"><stop offset="0" stop-color="#000"/><stop offset="1" stop-color="#0000ff"/></linearGradient><linearGradient id="q13" gradientUnits="userSpaceOnUse" x1="1501.0" y1="546.9" x2="1452.0" y2="498.8"><stop offset="0" stop-color="#000"/><stop offset="1" stop-color="#00ff00"/></linearGradient><linearGradient id="q14" gradientUnits="userSpaceOnUse" x1="1539.5" y1="507.8" x2="1428.9" y2="514.9"><stop offset="0" stop-color="#000"/><stop offset="1" stop-color="#0000ff"/></linearGradient><linearGradient id="q15" gradientUnits="userSpaceOnUse" x1="1500.7" y1="549.1" x2="1450.2" y2="500.3"><stop offset="0" stop-color="#000"/><stop offset="1" stop-color="#00ff00"/></linearGradient><linearGradient id="q16" gradientUnits="userSpaceOnUse" x1="1539.7" y1="476.7" x2="1428.4" y2="519.3"><stop offset="0" stop-color="#000"/><stop offset="1" stop-color="#0000ff"/></linearGradient><linearGradient id="q17" gradientUnits="userSpaceOnUse" x1="1495.4" y1="538.4" x2="1451.2" y2="502.2"><stop offset="0" stop-color="#000"/><stop offset="1" stop-color="#00ff00"/></linearGradient><linearGradient id="q18" gradientUnits="userSpaceOnUse" x1="1520.2" y1="499.1" x2="1435.5" y2="511.1"><stop offset="0" stop-color="#000"/><stop offset="1" stop-color="#0000ff"/></linearGradient><linearGradient id="q19" gradientUnits="userSpaceOnUse" x1="1578.7" y1="581.1" x2="1419.6" y2="387.4"><stop offset="0" stop-color="#000"/><stop offset="1" stop-color="#00ff00"/></linearGradient><linearGradient id="q20" gradientUnits="userSpaceOnUse" x1="1587.0" y1="451.4" x2="1402.8" y2="649.4"><stop offset="0" stop-color="#000"/><stop offset="1" stop-color="#0000ff"/></linearGradient><linearGradient id="q21" gradientUnits="userSpaceOnUse" x1="1552.7" y1="554.8" x2="1471.9" y2="440.5"><stop offset="0" stop-color="#000"/><stop offset="1" stop-color="#00ff00"/></linearGradient><linearGradient id="q22" gradientUnits="userSpaceOnUse" x1="1613.3" y1="490.7" x2="1349.7" y2="570.1"><stop offset="0" stop-color="#000"/><stop offset="1" stop-color="#0000ff"/></linearGradient><linearGradient id="q23" gradientUnits="userSpaceOnUse" x1="1553.6" y1="564.3" x2="1455.1" y2="441.4"><stop offset="0" stop-color="#000"/><stop offset="1" stop-color="#00ff00"/></linearGradient><linearGradient id="q24" gradientUnits="userSpaceOnUse" x1="1573.4" y1="444.6" x2="1400.3" y2="602.0"><stop offset="0" stop-color="#000"/><stop offset="1" stop-color="#0000ff"/></linearGradient><linearGradient id="q25" gradientUnits="userSpaceOnUse" x1="1541.9" y1="541.4" x2="1467.7" y2="466.4"><stop offset="0" stop-color="#000"/><stop offset="1" stop-color="#00ff00"/></linearGradient><linearGradient id="q26" gradientUnits="userSpaceOnUse" x1="1576.2" y1="482.4" x2="1396.0" y2="542.1"><stop offset="0" stop-color="#000"/><stop offset="1" stop-color="#0000ff"/></linearGradient><linearGradient id="q27" gradientUnits="userSpaceOnUse" x1="1526.7" y1="539.2" x2="1468.6" y2="473.4"><stop offset="0" stop-color="#000"/><stop offset="1" stop-color="#00ff00"/></linearGradient><linearGradient id="q28" gradientUnits="userSpaceOnUse" x1="1560.5" y1="445.2" x2="1402.4" y2="549.9"><stop offset="0" stop-color="#000"/><stop offset="1" stop-color="#0000ff"/></linearGradient><linearGradient id="q29" gradientUnits="userSpaceOnUse" x1="1524.8" y1="525.1" x2="1469.5" y2="479.8"><stop offset="0" stop-color="#000"/><stop offset="1" stop-color="#00ff00"/></linearGradient><linearGradient id="q30" gradientUnits="userSpaceOnUse" x1="1541.8" y1="475.3" x2="1423.9" y2="515.5"><stop offset="0" stop-color="#000"/><stop offset="1" stop-color="#0000ff"/></linearGradient><linearGradient id="q31" gradientUnits="userSpaceOnUse" x1="1620.5" y1="560.7" x2="1471.9" y2="264.0"><stop offset="0" stop-color="#000"/><stop offset="1" stop-color="#00ff00"/></linearGradient><linearGradient id="q32" gradientUnits="userSpaceOnUse" x1="1636.3" y1="464.5" x2="1381.2" y2="818.5"><stop offset="0" stop-color="#000"/><stop offset="1" stop-color="#0000ff"/></linearGradient><linearGradient id="q33" gradientUnits="userSpaceOnUse" x1="1619.2" y1="546.2" x2="1479.5" y2="347.4"><stop offset="0" stop-color="#000"/><stop offset="1" stop-color="#00ff00"/></linearGradient><linearGradient id="q34" gradientUnits="userSpaceOnUse" x1="1646.0" y1="477.1" x2="1325.1" y2="745.9"><stop offset="0" stop-color="#000"/><stop offset="1" stop-color="#0000ff"/></linearGradient><linearGradient id="q35" gradientUnits="userSpaceOnUse" x1="1594.5" y1="549.0" x2="1489.7" y2="373.6"><stop offset="0" stop-color="#000"/><stop offset="1" stop-color="#00ff00"/></linearGradient><linearGradient id="q36" gradientUnits="userSpaceOnUse" x1="1602.5" y1="444.6" x2="1382.6" y2="727.1"><stop offset="0" stop-color="#000"/><stop offset="1" stop-color="#0000ff"/></linearGradient><linearGradient id="q37" gradientUnits="userSpaceOnUse" x1="1597.3" y1="531.0" x2="1483.2" y2="414.9"><stop offset="0" stop-color="#000"/><stop offset="1" stop-color="#00ff00"/></linearGradient><linearGradient id="q38" gradientUnits="userSpaceOnUse" x1="1604.4" y1="463.4" x2="1374.1" y2="642.2"><stop offset="0" stop-color="#000"/><stop offset="1" stop-color="#0000ff"/></linearGradient><linearGradient id="q39" gradientUnits="userSpaceOnUse" x1="1561.9" y1="520.2" x2="1498.1" y2="437.6"><stop offset="0" stop-color="#000"/><stop offset="1" stop-color="#00ff00"/></linearGradient><linearGradient id="q40" gradientUnits="userSpaceOnUse" x1="1570.6" y1="426.9" x2="1383.7" y2="631.2"><stop offset="0" stop-color="#000"/><stop offset="1" stop-color="#0000ff"/></linearGradient><linearGradient id="q41" gradientUnits="userSpaceOnUse" x1="1565.7" y1="506.6" x2="1495.0" y2="448.7"><stop offset="0" stop-color="#000"/><stop offset="1" stop-color="#00ff00"/></linearGradient><linearGradient id="q42" gradientUnits="userSpaceOnUse" x1="1561.3" y1="450.6" x2="1413.9" y2="553.6"><stop offset="0" stop-color="#000"/><stop offset="1" stop-color="#0000ff"/></linearGradient><linearGradient id="q43" gradientUnits="userSpaceOnUse" x1="1677.8" y1="535.1" x2="1545.4" y2="168.9"><stop offset="0" stop-color="#000"/><stop offset="1" stop-color="#00ff00"/></linearGradient><linearGradient id="q44" gradientUnits="userSpaceOnUse" x1="1686.0" y1="491.2" x2="1390.0" y2="996.2"><stop offset="0" stop-color="#000"/><stop offset="1" stop-color="#0000ff"/></linearGradient><linearGradient id="q45" gradientUnits="userSpaceOnUse" x1="1681.5" y1="531.5" x2="1475.7" y2="236.7"><stop offset="0" stop-color="#000"/><stop offset="1" stop-color="#00ff00"/></linearGradient><linearGradient id="q46" gradientUnits="userSpaceOnUse" x1="1686.9" y1="495.5" x2="1372.5" y2="914.9"><stop offset="0" stop-color="#000"/><stop offset="1" stop-color="#0000ff"/></linearGradient><linearGradient id="q47" gradientUnits="userSpaceOnUse" x1="1640.5" y1="529.8" x2="1534.3" y2="314.6"><stop offset="0" stop-color="#000"/><stop offset="1" stop-color="#00ff00"/></linearGradient><linearGradient id="q48" gradientUnits="userSpaceOnUse" x1="1633.8" y1="460.6" x2="1398.6" y2="861.8"><stop offset="0" stop-color="#000"/><stop offset="1" stop-color="#0000ff"/></linearGradient><linearGradient id="q49" gradientUnits="userSpaceOnUse" x1="1650.9" y1="518.7" x2="1493.7" y2="357.9"><stop offset="0" stop-color="#000"/><stop offset="1" stop-color="#00ff00"/></linearGradient><linearGradient id="q50" gradientUnits="userSpaceOnUse" x1="1633.5" y1="467.5" x2="1402.7" y2="760.6"><stop offset="0" stop-color="#000"/><stop offset="1" stop-color="#0000ff"/></linearGradient><linearGradient id="q51" gradientUnits="userSpaceOnUse" x1="1598.1" y1="499.8" x2="1530.3" y2="404.0"><stop offset="0" stop-color="#000"/><stop offset="1" stop-color="#00ff00"/></linearGradient><linearGradient id="q52" gradientUnits="userSpaceOnUse" x1="1581.6" y1="430.0" x2="1407.2" y2="727.5"><stop offset="0" stop-color="#000"/><stop offset="1" stop-color="#0000ff"/></linearGradient><linearGradient id="q53" gradientUnits="userSpaceOnUse" x1="1606.6" y1="488.1" x2="1520.5" y2="417.6"><stop offset="0" stop-color="#000"/><stop offset="1" stop-color="#00ff00"/></linearGradient><linearGradient id="q54" gradientUnits="userSpaceOnUse" x1="1579.3" y1="440.6" x2="1432.3" y2="614.1"><stop offset="0" stop-color="#000"/><stop offset="1" stop-color="#0000ff"/></linearGradient><linearGradient id="q55" gradientUnits="userSpaceOnUse" x1="1398.0" y1="483.6" x2="1439.0" y2="517.2"><stop offset="0" stop-color="#000"/><stop offset="1" stop-color="#ff0000"/></linearGradient><linearGradient id="q56" gradientUnits="userSpaceOnUse" x1="1445.9" y1="437.2" x2="1438.9" y2="517.2"><stop offset="0" stop-color="#000"/><stop offset="1" stop-color="#0000ff"/></linearGradient><linearGradient id="q57" gradientUnits="userSpaceOnUse" x1="1396.1" y1="480.7" x2="1439.0" y2="517.2"><stop offset="0" stop-color="#000"/><stop offset="1" stop-color="#ff0000"/></linearGradient><linearGradient id="q58" gradientUnits="userSpaceOnUse" x1="1448.1" y1="436.8" x2="1438.9" y2="517.2"><stop offset="0" stop-color="#000"/><stop offset="1" stop-color="#0000ff"/></linearGradient><linearGradient id="q59" gradientUnits="userSpaceOnUse" x1="1395.0" y1="477.1" x2="1439.0" y2="517.2"><stop offset="0" stop-color="#000"/><stop offset="1" stop-color="#ff0000"/></linearGradient><linearGradient id="q60" gradientUnits="userSpaceOnUse" x1="1450.2" y1="437.0" x2="1438.9" y2="517.2"><stop offset="0" stop-color="#000"/><stop offset="1" stop-color="#0000ff"/></linearGradient><linearGradient id="q61" gradientUnits="userSpaceOnUse" x1="1403.0" y1="464.6" x2="1450.3" y2="503.3"><stop offset="0" stop-color="#000"/><stop offset="1" stop-color="#ff0000"/></linearGradient><linearGradient id="q62" gradientUnits="userSpaceOnUse" x1="1465.6" y1="421.5" x2="1446.8" y2="521.8"><stop offset="0" stop-color="#000"/><stop offset="1" stop-color="#0000ff"/></linearGradient><linearGradient id="q63" gradientUnits="userSpaceOnUse" x1="1407.0" y1="472.1" x2="1450.3" y2="503.3"><stop offset="0" stop-color="#000"/><stop offset="1" stop-color="#ff0000"/></linearGradient><linearGradient id="q64" gradientUnits="userSpaceOnUse" x1="1448.3" y1="422.8" x2="1450.7" y2="521.5"><stop offset="0" stop-color="#000"/><stop offset="1" stop-color="#0000ff"/></linearGradient><linearGradient id="q65" gradientUnits="userSpaceOnUse" x1="1397.1" y1="460.1" x2="1451.0" y2="505.0"><stop offset="0" stop-color="#000"/><stop offset="1" stop-color="#ff0000"/></linearGradient><linearGradient id="q66" gradientUnits="userSpaceOnUse" x1="1464.2" y1="418.5" x2="1441.2" y2="522.8"><stop offset="0" stop-color="#000"/><stop offset="1" stop-color="#0000ff"/></linearGradient><linearGradient id="q67" gradientUnits="userSpaceOnUse" x1="1401.8" y1="473.7" x2="1450.5" y2="503.6"><stop offset="0" stop-color="#000"/><stop offset="1" stop-color="#ff0000"/></linearGradient><linearGradient id="q68" gradientUnits="userSpaceOnUse" x1="1441.9" y1="414.7" x2="1447.2" y2="523.8"><stop offset="0" stop-color="#000"/><stop offset="1" stop-color="#0000ff"/></linearGradient><linearGradient id="q69" gradientUnits="userSpaceOnUse" x1="1392.7" y1="455.2" x2="1452.4" y2="507.7"><stop offset="0" stop-color="#000"/><stop offset="1" stop-color="#ff0000"/></linearGradient><linearGradient id="q70" gradientUnits="userSpaceOnUse" x1="1462.4" y1="416.0" x2="1435.5" y2="523.6"><stop offset="0" stop-color="#000"/><stop offset="1" stop-color="#0000ff"/></linearGradient><linearGradient id="q71" gradientUnits="userSpaceOnUse" x1="1397.1" y1="476.1" x2="1451.5" y2="503.2"><stop offset="0" stop-color="#000"/><stop offset="1" stop-color="#ff0000"/></linearGradient><linearGradient id="q72" gradientUnits="userSpaceOnUse" x1="1434.8" y1="406.0" x2="1444.0" y2="526.7"><stop offset="0" stop-color="#000"/><stop offset="1" stop-color="#0000ff"/></linearGradient><linearGradient id="q73" gradientUnits="userSpaceOnUse" x1="1411.3" y1="436.7" x2="1467.3" y2="482.6"><stop offset="0" stop-color="#000"/><stop offset="1" stop-color="#ff0000"/></linearGradient><linearGradient id="q74" gradientUnits="userSpaceOnUse" x1="1491.8" y1="406.5" x2="1449.9" y2="536.5"><stop offset="0" stop-color="#000"/><stop offset="1" stop-color="#0000ff"/></linearGradient><linearGradient id="q75" gradientUnits="userSpaceOnUse" x1="1416.1" y1="448.1" x2="1467.3" y2="482.6"><stop offset="0" stop-color="#000"/><stop offset="1" stop-color="#ff0000"/></linearGradient><linearGradient id="q76" gradientUnits="userSpaceOnUse" x1="1471.3" y1="401.2" x2="1464.4" y2="540.3"><stop offset="0" stop-color="#000"/><stop offset="1" stop-color="#0000ff"/></linearGradient><linearGradient id="q77" gradientUnits="userSpaceOnUse" x1="1400.5" y1="431.2" x2="1470.6" y2="487.5"><stop offset="0" stop-color="#000"/><stop offset="1" stop-color="#ff0000"/></linearGradient><linearGradient id="q78" gradientUnits="userSpaceOnUse" x1="1483.6" y1="400.1" x2="1434.2" y2="540.2"><stop offset="0" stop-color="#000"/><stop offset="1" stop-color="#0000ff"/></linearGradient><linearGradient id="q79" gradientUnits="userSpaceOnUse" x1="1406.4" y1="449.8" x2="1469.2" y2="482.9"><stop offset="0" stop-color="#000"/><stop offset="1" stop-color="#ff0000"/></linearGradient><linearGradient id="q80" gradientUnits="userSpaceOnUse" x1="1460.4" y1="388.0" x2="1453.6" y2="550.4"><stop offset="0" stop-color="#000"/><stop offset="1" stop-color="#0000ff"/></linearGradient><linearGradient id="q81" gradientUnits="userSpaceOnUse" x1="1392.7" y1="426.9" x2="1477.6" y2="495.7"><stop offset="0" stop-color="#000"/><stop offset="1" stop-color="#ff0000"/></linearGradient><linearGradient id="q82" gradientUnits="userSpaceOnUse" x1="1474.9" y1="394.0" x2="1418.4" y2="543.6"><stop offset="0" stop-color="#000"/><stop offset="1" stop-color="#0000ff"/></linearGradient><linearGradient id="q83" gradientUnits="userSpaceOnUse" x1="1399.3" y1="451.8" x2="1473.8" y2="481.0"><stop offset="0" stop-color="#000"/><stop offset="1" stop-color="#ff0000"/></linearGradient><linearGradient id="q84" gradientUnits="userSpaceOnUse" x1="1449.3" y1="374.4" x2="1443.1" y2="562.6"><stop offset="0" stop-color="#000"/><stop offset="1" stop-color="#0000ff"/></linearGradient><linearGradient id="q85" gradientUnits="userSpaceOnUse" x1="1426.2" y1="400.6" x2="1490.9" y2="453.7"><stop offset="0" stop-color="#000"/><stop offset="1" stop-color="#ff0000"/></linearGradient><linearGradient id="q86" gradientUnits="userSpaceOnUse" x1="1516.0" y1="399.4" x2="1440.3" y2="563.6"><stop offset="0" stop-color="#000"/><stop offset="1" stop-color="#0000ff"/></linearGradient><linearGradient id="q87" gradientUnits="userSpaceOnUse" x1="1429.2" y1="414.3" x2="1490.9" y2="453.7"><stop offset="0" stop-color="#000"/><stop offset="1" stop-color="#ff0000"/></linearGradient><linearGradient id="q88" gradientUnits="userSpaceOnUse" x1="1504.6" y1="389.0" x2="1463.3" y2="584.6"><stop offset="0" stop-color="#000"/><stop offset="1" stop-color="#0000ff"/></linearGradient><linearGradient id="q89" gradientUnits="userSpaceOnUse" x1="1410.5" y1="396.1" x2="1498.6" y2="462.8"><stop offset="0" stop-color="#000"/><stop offset="1" stop-color="#ff0000"/></linearGradient><linearGradient id="q90" gradientUnits="userSpaceOnUse" x1="1497.5" y1="388.0" x2="1409.5" y2="572.1"><stop offset="0" stop-color="#000"/><stop offset="1" stop-color="#0000ff"/></linearGradient><linearGradient id="q91" gradientUnits="userSpaceOnUse" x1="1414.8" y1="415.4" x2="1496.7" y2="454.3"><stop offset="0" stop-color="#000"/><stop offset="1" stop-color="#ff0000"/></linearGradient><linearGradient id="q92" gradientUnits="userSpaceOnUse" x1="1487.0" y1="374.0" x2="1434.6" y2="605.5"><stop offset="0" stop-color="#000"/><stop offset="1" stop-color="#0000ff"/></linearGradient><linearGradient id="q93" gradientUnits="userSpaceOnUse" x1="1400.8" y1="394.7" x2="1515.9" y2="476.1"><stop offset="0" stop-color="#000"/><stop offset="1" stop-color="#ff0000"/></linearGradient><linearGradient id="q94" gradientUnits="userSpaceOnUse" x1="1478.8" y1="376.7" x2="1378.8" y2="580.4"><stop offset="0" stop-color="#000"/><stop offset="1" stop-color="#0000ff"/></linearGradient><linearGradient id="q95" gradientUnits="userSpaceOnUse" x1="1406.3" y1="415.8" x2="1509.0" y2="449.8"><stop offset="0" stop-color="#000"/><stop offset="1" stop-color="#ff0000"/></linearGradient><linearGradient id="q96" gradientUnits="userSpaceOnUse" x1="1469.4" y1="359.4" x2="1404.8" y2="628.1"><stop offset="0" stop-color="#000"/><stop offset="1" stop-color="#0000ff"/></linearGradient><linearGradient id="q97" gradientUnits="userSpaceOnUse" x1="1442.8" y1="366.1" x2="1514.6" y2="424.9"><stop offset="0" stop-color="#000"/><stop offset="1" stop-color="#ff0000"/></linearGradient><linearGradient id="q98" gradientUnits="userSpaceOnUse" x1="1529.4" y1="399.4" x2="1415.9" y2="593.3"><stop offset="0" stop-color="#000"/><stop offset="1" stop-color="#0000ff"/></linearGradient><linearGradient id="q99" gradientUnits="userSpaceOnUse" x1="1442.4" y1="380.4" x2="1514.6" y2="424.9"><stop offset="0" stop-color="#000"/><stop offset="1" stop-color="#ff0000"/></linearGradient><linearGradient id="q100" gradientUnits="userSpaceOnUse" x1="1527.5" y1="393.1" x2="1428.6" y2="635.3"><stop offset="0" stop-color="#000"/><stop offset="1" stop-color="#0000ff"/></linearGradient><linearGradient id="q101" gradientUnits="userSpaceOnUse" x1="1422.9" y1="362.7" x2="1526.2" y2="437.0"><stop offset="0" stop-color="#000"/><stop offset="1" stop-color="#ff0000"/></linearGradient><linearGradient id="q102" gradientUnits="userSpaceOnUse" x1="1501.2" y1="382.9" x2="1369.9" y2="607.1"><stop offset="0" stop-color="#000"/><stop offset="1" stop-color="#0000ff"/></linearGradient><linearGradient id="q103" gradientUnits="userSpaceOnUse" x1="1424.3" y1="380.7" x2="1525.4" y2="425.7"><stop offset="0" stop-color="#000"/><stop offset="1" stop-color="#ff0000"/></linearGradient><linearGradient id="q104" gradientUnits="userSpaceOnUse" x1="1500.0" y1="376.3" x2="1379.5" y2="659.0"><stop offset="0" stop-color="#000"/><stop offset="1" stop-color="#0000ff"/></linearGradient><linearGradient id="q105" gradientUnits="userSpaceOnUse" x1="1412.9" y1="363.4" x2="1554.2" y2="452.0"><stop offset="0" stop-color="#000"/><stop offset="1" stop-color="#ff0000"/></linearGradient><linearGradient id="q106" gradientUnits="userSpaceOnUse" x1="1473.0" y1="366.4" x2="1323.9" y2="620.8"><stop offset="0" stop-color="#000"/><stop offset="1" stop-color="#0000ff"/></linearGradient><linearGradient id="q107" gradientUnits="userSpaceOnUse" x1="1416.0" y1="379.3" x2="1547.6" y2="418.4"><stop offset="0" stop-color="#000"/><stop offset="1" stop-color="#ff0000"/></linearGradient><linearGradient id="q108" gradientUnits="userSpaceOnUse" x1="1472.4" y1="359.5" x2="1329.9" y2="682.9"><stop offset="0" stop-color="#000"/><stop offset="1" stop-color="#0000ff"/></linearGradient><linearGradient id="q109" gradientUnits="userSpaceOnUse" x1="1397.4" y1="489.9" x2="1439.0" y2="517.2"><stop offset="0" stop-color="#000"/><stop offset="1" stop-color="#ff0000"/></linearGradient><linearGradient id="q110" gradientUnits="userSpaceOnUse" x1="1422.1" y1="437.1" x2="1438.9" y2="517.2"><stop offset="0" stop-color="#000"/><stop offset="1" stop-color="#0000ff"/></linearGradient><linearGradient id="q111" gradientUnits="userSpaceOnUse" x1="1397.2" y1="488.2" x2="1439.0" y2="517.2"><stop offset="0" stop-color="#000"/><stop offset="1" stop-color="#ff0000"/></linearGradient><linearGradient id="q112" gradientUnits="userSpaceOnUse" x1="1432.9" y1="437.0" x2="1438.9" y2="517.2"><stop offset="0" stop-color="#000"/><stop offset="1" stop-color="#0000ff"/></linearGradient><linearGradient id="q113" gradientUnits="userSpaceOnUse" x1="1397.8" y1="486.9" x2="1439.0" y2="517.2"><stop offset="0" stop-color="#000"/><stop offset="1" stop-color="#ff0000"/></linearGradient><linearGradient id="q114" gradientUnits="userSpaceOnUse" x1="1438.8" y1="441.8" x2="1438.9" y2="517.2"><stop offset="0" stop-color="#000"/><stop offset="1" stop-color="#0000ff"/></linearGradient><linearGradient id="q115" gradientUnits="userSpaceOnUse" x1="1394.5" y1="471.1" x2="1452.6" y2="504.5"><stop offset="0" stop-color="#000"/><stop offset="1" stop-color="#ff0000"/></linearGradient><linearGradient id="q116" gradientUnits="userSpaceOnUse" x1="1429.0" y1="406.5" x2="1440.6" y2="527.0"><stop offset="0" stop-color="#000"/><stop offset="1" stop-color="#0000ff"/></linearGradient><linearGradient id="q117" gradientUnits="userSpaceOnUse" x1="1396.2" y1="462.2" x2="1452.0" y2="507.6"><stop offset="0" stop-color="#000"/><stop offset="1" stop-color="#ff0000"/></linearGradient><linearGradient id="q118" gradientUnits="userSpaceOnUse" x1="1453.5" y1="426.4" x2="1432.0" y2="520.1"><stop offset="0" stop-color="#000"/><stop offset="1" stop-color="#0000ff"/></linearGradient><linearGradient id="q119" gradientUnits="userSpaceOnUse" x1="1392.2" y1="476.8" x2="1447.3" y2="510.6"><stop offset="0" stop-color="#000"/><stop offset="1" stop-color="#ff0000"/></linearGradient><linearGradient id="q120" gradientUnits="userSpaceOnUse" x1="1436.6" y1="417.0" x2="1434.5" y2="521.8"><stop offset="0" stop-color="#000"/><stop offset="1" stop-color="#0000ff"/></linearGradient><linearGradient id="q121" gradientUnits="userSpaceOnUse" x1="1397.0" y1="473.3" x2="1445.9" y2="511.6"><stop offset="0" stop-color="#000"/><stop offset="1" stop-color="#ff0000"/></linearGradient><linearGradient id="q122" gradientUnits="userSpaceOnUse" x1="1439.7" y1="433.5" x2="1433.9" y2="518.2"><stop offset="0" stop-color="#000"/><stop offset="1" stop-color="#0000ff"/></linearGradient><linearGradient id="q123" gradientUnits="userSpaceOnUse" x1="1390.8" y1="482.8" x2="1441.8" y2="516.4"><stop offset="0" stop-color="#000"/><stop offset="1" stop-color="#ff0000"/></linearGradient><linearGradient id="q124" gradientUnits="userSpaceOnUse" x1="1436.7" y1="432.4" x2="1431.8" y2="518.2"><stop offset="0" stop-color="#000"/><stop offset="1" stop-color="#0000ff"/></linearGradient><linearGradient id="q125" gradientUnits="userSpaceOnUse" x1="1397.1" y1="483.2" x2="1440.4" y2="516.3"><stop offset="0" stop-color="#000"/><stop offset="1" stop-color="#ff0000"/></linearGradient><linearGradient id="q126" gradientUnits="userSpaceOnUse" x1="1432.1" y1="441.8" x2="1432.3" y2="517.2"><stop offset="0" stop-color="#000"/><stop offset="1" stop-color="#0000ff"/></linearGradient><linearGradient id="q127" gradientUnits="userSpaceOnUse" x1="1395.3" y1="444.3" x2="1479.5" y2="485.5"><stop offset="0" stop-color="#000"/><stop offset="1" stop-color="#ff0000"/></linearGradient><linearGradient id="q128" gradientUnits="userSpaceOnUse" x1="1443.3" y1="374.9" x2="1427.1" y2="561.2"><stop offset="0" stop-color="#000"/><stop offset="1" stop-color="#0000ff"/></linearGradient><linearGradient id="q129" gradientUnits="userSpaceOnUse" x1="1397.7" y1="438.5" x2="1477.0" y2="491.8"><stop offset="0" stop-color="#000"/><stop offset="1" stop-color="#ff0000"/></linearGradient><linearGradient id="q130" gradientUnits="userSpaceOnUse" x1="1452.2" y1="402.0" x2="1417.4" y2="531.6"><stop offset="0" stop-color="#000"/><stop offset="1" stop-color="#0000ff"/></linearGradient><linearGradient id="q131" gradientUnits="userSpaceOnUse" x1="1389.1" y1="461.2" x2="1465.1" y2="500.4"><stop offset="0" stop-color="#000"/><stop offset="1" stop-color="#ff0000"/></linearGradient><linearGradient id="q132" gradientUnits="userSpaceOnUse" x1="1442.5" y1="395.0" x2="1420.5" y2="535.2"><stop offset="0" stop-color="#000"/><stop offset="1" stop-color="#0000ff"/></linearGradient><linearGradient id="q133" gradientUnits="userSpaceOnUse" x1="1394.9" y1="459.0" x2="1459.8" y2="502.4"><stop offset="0" stop-color="#000"/><stop offset="1" stop-color="#ff0000"/></linearGradient><linearGradient id="q134" gradientUnits="userSpaceOnUse" x1="1434.2" y1="415.8" x2="1425.6" y2="522.4"><stop offset="0" stop-color="#000"/><stop offset="1" stop-color="#0000ff"/></linearGradient><linearGradient id="q135" gradientUnits="userSpaceOnUse" x1="1383.6" y1="478.0" x2="1450.3" y2="515.1"><stop offset="0" stop-color="#000"/><stop offset="1" stop-color="#ff0000"/></linearGradient><linearGradient id="q136" gradientUnits="userSpaceOnUse" x1="1432.8" y1="421.0" x2="1419.4" y2="520.4"><stop offset="0" stop-color="#000"/><stop offset="1" stop-color="#0000ff"/></linearGradient><linearGradient id="q137" gradientUnits="userSpaceOnUse" x1="1391.8" y1="479.1" x2="1444.3" y2="514.3"><stop offset="0" stop-color="#000"/><stop offset="1" stop-color="#ff0000"/></linearGradient><linearGradient id="q138" gradientUnits="userSpaceOnUse" x1="1422.0" y1="433.1" x2="1422.2" y2="517.2"><stop offset="0" stop-color="#000"/><stop offset="1" stop-color="#0000ff"/></linearGradient><linearGradient id="q139" gradientUnits="userSpaceOnUse" x1="1403.8" y1="407.3" x2="1523.1" y2="457.9"><stop offset="0" stop-color="#000"/><stop offset="1" stop-color="#ff0000"/></linearGradient><linearGradient id="q140" gradientUnits="userSpaceOnUse" x1="1456.7" y1="361.1" x2="1358.2" y2="601.9"><stop offset="0" stop-color="#000"/><stop offset="1" stop-color="#0000ff"/></linearGradient><linearGradient id="q141" gradientUnits="userSpaceOnUse" x1="1406.4" y1="405.8" x2="1514.9" y2="462.8"><stop offset="0" stop-color="#000"/><stop offset="1" stop-color="#ff0000"/></linearGradient><linearGradient id="q142" gradientUnits="userSpaceOnUse" x1="1443.9" y1="374.1" x2="1397.9" y2="561.4"><stop offset="0" stop-color="#000"/><stop offset="1" stop-color="#0000ff"/></linearGradient><linearGradient id="q143" gradientUnits="userSpaceOnUse" x1="1391.7" y1="439.6" x2="1495.2" y2="484.8"><stop offset="0" stop-color="#000"/><stop offset="1" stop-color="#ff0000"/></linearGradient><linearGradient id="q144" gradientUnits="userSpaceOnUse" x1="1446.1" y1="380.2" x2="1385.5" y2="550.7"><stop offset="0" stop-color="#000"/><stop offset="1" stop-color="#0000ff"/></linearGradient><linearGradient id="q145" gradientUnits="userSpaceOnUse" x1="1396.5" y1="439.3" x2="1482.7" y2="485.6"><stop offset="0" stop-color="#000"/><stop offset="1" stop-color="#ff0000"/></linearGradient><linearGradient id="q146" gradientUnits="userSpaceOnUse" x1="1424.7" y1="393.7" x2="1414.8" y2="532.3"><stop offset="0" stop-color="#000"/><stop offset="1" stop-color="#0000ff"/></linearGradient><linearGradient id="q147" gradientUnits="userSpaceOnUse" x1="1380.0" y1="471.8" x2="1466.9" y2="511.5"><stop offset="0" stop-color="#000"/><stop offset="1" stop-color="#ff0000"/></linearGradient><linearGradient id="q148" gradientUnits="userSpaceOnUse" x1="1424.9" y1="410.6" x2="1399.7" y2="522.6"><stop offset="0" stop-color="#000"/><stop offset="1" stop-color="#0000ff"/></linearGradient><linearGradient id="q149" gradientUnits="userSpaceOnUse" x1="1386.9" y1="472.9" x2="1452.6" y2="509.2"><stop offset="0" stop-color="#000"/><stop offset="1" stop-color="#ff0000"/></linearGradient><linearGradient id="q150" gradientUnits="userSpaceOnUse" x1="1408.1" y1="421.0" x2="1408.3" y2="517.2"><stop offset="0" stop-color="#000"/><stop offset="1" stop-color="#0000ff"/></linearGradient><linearGradient id="q151" gradientUnits="userSpaceOnUse" x1="1416.3" y1="370.1" x2="1569.4" y2="427.8"><stop offset="0" stop-color="#000"/><stop offset="1" stop-color="#ff0000"/></linearGradient><linearGradient id="q152" gradientUnits="userSpaceOnUse" x1="1446.1" y1="353.2" x2="1265.5" y2="599.9"><stop offset="0" stop-color="#000"/><stop offset="1" stop-color="#0000ff"/></linearGradient><linearGradient id="q153" gradientUnits="userSpaceOnUse" x1="1417.9" y1="370.1" x2="1553.2" y2="428.4"><stop offset="0" stop-color="#000"/><stop offset="1" stop-color="#ff0000"/></linearGradient><linearGradient id="q154" gradientUnits="userSpaceOnUse" x1="1434.7" y1="352.8" x2="1381.0" y2="604.5"><stop offset="0" stop-color="#000"/><stop offset="1" stop-color="#0000ff"/></linearGradient><linearGradient id="q155" gradientUnits="userSpaceOnUse" x1="1398.4" y1="417.5" x2="1528.3" y2="466.4"><stop offset="0" stop-color="#000"/><stop offset="1" stop-color="#ff0000"/></linearGradient><linearGradient id="q156" gradientUnits="userSpaceOnUse" x1="1440.2" y1="370.3" x2="1341.2" y2="554.6"><stop offset="0" stop-color="#000"/><stop offset="1" stop-color="#0000ff"/></linearGradient><linearGradient id="q157" gradientUnits="userSpaceOnUse" x1="1400.9" y1="417.7" x2="1507.7" y2="464.5"><stop offset="0" stop-color="#000"/><stop offset="1" stop-color="#ff0000"/></linearGradient><linearGradient id="q158" gradientUnits="userSpaceOnUse" x1="1415.0" y1="373.7" x2="1404.8" y2="546.2"><stop offset="0" stop-color="#000"/><stop offset="1" stop-color="#0000ff"/></linearGradient><linearGradient id="q159" gradientUnits="userSpaceOnUse" x1="1380.6" y1="464.8" x2="1487.2" y2="504.9"><stop offset="0" stop-color="#000"/><stop offset="1" stop-color="#ff0000"/></linearGradient><linearGradient id="q160" gradientUnits="userSpaceOnUse" x1="1414.6" y1="402.0" x2="1378.5" y2="522.7"><stop offset="0" stop-color="#000"/><stop offset="1" stop-color="#0000ff"/></linearGradient><linearGradient id="q161" gradientUnits="userSpaceOnUse" x1="1384.1" y1="465.4" x2="1463.2" y2="500.9"><stop offset="0" stop-color="#000"/><stop offset="1" stop-color="#ff0000"/></linearGradient><linearGradient id="q162" gradientUnits="userSpaceOnUse" x1="1394.1" y1="408.9" x2="1394.4" y2="517.3"><stop offset="0" stop-color="#000"/><stop offset="1" stop-color="#0000ff"/></linearGradient><linearGradient id="q163" gradientUnits="userSpaceOnUse" x1="1375.5" y1="516.0" x2="1439.0" y2="517.2"><stop offset="0" stop-color="#000"/><stop offset="1" stop-color="#ff0000"/></linearGradient><linearGradient id="q164" gradientUnits="userSpaceOnUse" x1="1439.1" y1="592.5" x2="1438.9" y2="517.2"><stop offset="0" stop-color="#000"/><stop offset="1" stop-color="#00ff00"/></linearGradient><linearGradient id="q165" gradientUnits="userSpaceOnUse" x1="1377.1" y1="513.6" x2="1439.0" y2="517.2"><stop offset="0" stop-color="#000"/><stop offset="1" stop-color="#ff0000"/></linearGradient><linearGradient id="q166" gradientUnits="userSpaceOnUse" x1="1432.8" y1="601.7" x2="1438.9" y2="517.2"><stop offset="0" stop-color="#000"/><stop offset="1" stop-color="#00ff00"/></linearGradient><linearGradient id="q167" gradientUnits="userSpaceOnUse" x1="1379.9" y1="511.5" x2="1439.0" y2="517.2"><stop offset="0" stop-color="#000"/><stop offset="1" stop-color="#ff0000"/></linearGradient><linearGradient id="q168" gradientUnits="userSpaceOnUse" x1="1416.9" y1="610.4" x2="1438.9" y2="517.2"><stop offset="0" stop-color="#000"/><stop offset="1" stop-color="#00ff00"/></linearGradient><linearGradient id="q169" gradientUnits="userSpaceOnUse" x1="1371.8" y1="510.7" x2="1439.6" y2="518.3"><stop offset="0" stop-color="#000"/><stop offset="1" stop-color="#ff0000"/></linearGradient><linearGradient id="q170" gradientUnits="userSpaceOnUse" x1="1429.7" y1="601.1" x2="1429.6" y2="517.2"><stop offset="0" stop-color="#000"/><stop offset="1" stop-color="#00ff00"/></linearGradient><linearGradient id="q171" gradientUnits="userSpaceOnUse" x1="1360.9" y1="522.7" x2="1441.5" y2="516.2"><stop offset="0" stop-color="#000"/><stop offset="1" stop-color="#ff0000"/></linearGradient><linearGradient id="q172" gradientUnits="userSpaceOnUse" x1="1438.4" y1="587.9" x2="1429.6" y2="517.2"><stop offset="0" stop-color="#000"/><stop offset="1" stop-color="#00ff00"/></linearGradient><linearGradient id="q173" gradientUnits="userSpaceOnUse" x1="1371.2" y1="515.5" x2="1439.8" y2="526.3"><stop offset="0" stop-color="#000"/><stop offset="1" stop-color="#ff0000"/></linearGradient><linearGradient id="q174" gradientUnits="userSpaceOnUse" x1="1416.7" y1="620.8" x2="1428.0" y2="514.3"><stop offset="0" stop-color="#000"/><stop offset="1" stop-color="#00ff00"/></linearGradient><linearGradient id="q175" gradientUnits="userSpaceOnUse" x1="1348.4" y1="534.2" x2="1445.0" y2="521.9"><stop offset="0" stop-color="#000"/><stop offset="1" stop-color="#ff0000"/></linearGradient><linearGradient id="q176" gradientUnits="userSpaceOnUse" x1="1444.7" y1="586.0" x2="1425.1" y2="517.9"><stop offset="0" stop-color="#000"/><stop offset="1" stop-color="#00ff00"/></linearGradient><linearGradient id="q177" gradientUnits="userSpaceOnUse" x1="1370.9" y1="521.0" x2="1439.6" y2="534.2"><stop offset="0" stop-color="#000"/><stop offset="1" stop-color="#ff0000"/></linearGradient><linearGradient id="q178" gradientUnits="userSpaceOnUse" x1="1391.0" y1="635.8" x2="1431.5" y2="508.6"><stop offset="0" stop-color="#000"/><stop offset="1" stop-color="#00ff00"/></linearGradient><linearGradient id="q179" gradientUnits="userSpaceOnUse" x1="1332.9" y1="549.2" x2="1450.6" y2="526.1"><stop offset="0" stop-color="#000"/><stop offset="1" stop-color="#ff0000"/></linearGradient><linearGradient id="q180" gradientUnits="userSpaceOnUse" x1="1447.6" y1="581.8" x2="1419.2" y2="520.3"><stop offset="0" stop-color="#000"/><stop offset="1" stop-color="#00ff00"/></linearGradient><linearGradient id="q181" gradientUnits="userSpaceOnUse" x1="1368.4" y1="506.8" x2="1441.2" y2="522.9"><stop offset="0" stop-color="#000"/><stop offset="1" stop-color="#ff0000"/></linearGradient><linearGradient id="q182" gradientUnits="userSpaceOnUse" x1="1415.7" y1="613.1" x2="1415.5" y2="517.2"><stop offset="0" stop-color="#000"/><stop offset="1" stop-color="#00ff00"/></linearGradient><linearGradient id="q183" gradientUnits="userSpaceOnUse" x1="1351.5" y1="517.4" x2="1450.4" y2="517.1"><stop offset="0" stop-color="#000"/><stop offset="1" stop-color="#ff0000"/></linearGradient><linearGradient id="q184" gradientUnits="userSpaceOnUse" x1="1430.0" y1="592.3" x2="1415.5" y2="517.2"><stop offset="0" stop-color="#000"/><stop offset="1" stop-color="#00ff00"/></linearGradient><linearGradient id="q185" gradientUnits="userSpaceOnUse" x1="1363.2" y1="523.2" x2="1442.0" y2="543.2"><stop offset="0" stop-color="#000"/><stop offset="1" stop-color="#ff0000"/></linearGradient><linearGradient id="q186" gradientUnits="userSpaceOnUse" x1="1395.2" y1="644.5" x2="1412.5" y2="505.8"><stop offset="0" stop-color="#000"/><stop offset="1" stop-color="#00ff00"/></linearGradient><linearGradient id="q187" gradientUnits="userSpaceOnUse" x1="1335.7" y1="536.0" x2="1461.9" y2="533.9"><stop offset="0" stop-color="#000"/><stop offset="1" stop-color="#ff0000"/></linearGradient><linearGradient id="q188" gradientUnits="userSpaceOnUse" x1="1432.7" y1="595.2" x2="1402.6" y2="518.8"><stop offset="0" stop-color="#000"/><stop offset="1" stop-color="#00ff00"/></linearGradient><linearGradient id="q189" gradientUnits="userSpaceOnUse" x1="1357.8" y1="540.1" x2="1442.5" y2="563.5"><stop offset="0" stop-color="#000"/><stop offset="1" stop-color="#ff0000"/></linearGradient><linearGradient id="q190" gradientUnits="userSpaceOnUse" x1="1363.8" y1="665.0" x2="1425.8" y2="483.6"><stop offset="0" stop-color="#000"/><stop offset="1" stop-color="#00ff00"/></linearGradient><linearGradient id="q191" gradientUnits="userSpaceOnUse" x1="1318.5" y1="555.3" x2="1478.0" y2="549.8"><stop offset="0" stop-color="#000"/><stop offset="1" stop-color="#ff0000"/></linearGradient><linearGradient id="q192" gradientUnits="userSpaceOnUse" x1="1428.7" y1="597.7" x2="1386.2" y2="524.7"><stop offset="0" stop-color="#000"/><stop offset="1" stop-color="#00ff00"/></linearGradient><linearGradient id="q193" gradientUnits="userSpaceOnUse" x1="1365.3" y1="507.7" x2="1443.6" y2="532.1"><stop offset="0" stop-color="#000"/><stop offset="1" stop-color="#ff0000"/></linearGradient><linearGradient id="q194" gradientUnits="userSpaceOnUse" x1="1396.2" y1="625.1" x2="1396.0" y2="517.3"><stop offset="0" stop-color="#000"/><stop offset="1" stop-color="#00ff00"/></linearGradient><linearGradient id="q195" gradientUnits="userSpaceOnUse" x1="1351.3" y1="511.0" x2="1465.4" y2="527.0"><stop offset="0" stop-color="#000"/><stop offset="1" stop-color="#ff0000"/></linearGradient><linearGradient id="q196" gradientUnits="userSpaceOnUse" x1="1416.1" y1="599.5" x2="1396.0" y2="517.3"><stop offset="0" stop-color="#000"/><stop offset="1" stop-color="#00ff00"/></linearGradient><linearGradient id="q197" gradientUnits="userSpaceOnUse" x1="1353.6" y1="539.7" x2="1446.3" y2="569.9"><stop offset="0" stop-color="#000"/><stop offset="1" stop-color="#ff0000"/></linearGradient><linearGradient id="q198" gradientUnits="userSpaceOnUse" x1="1372.9" y1="663.7" x2="1389.4" y2="491.7"><stop offset="0" stop-color="#000"/><stop offset="1" stop-color="#00ff00"/></linearGradient><linearGradient id="q199" gradientUnits="userSpaceOnUse" x1="1336.5" y1="541.9" x2="1481.6" y2="565.2"><stop offset="0" stop-color="#000"/><stop offset="1" stop-color="#ff0000"/></linearGradient><linearGradient id="q200" gradientUnits="userSpaceOnUse" x1="1411.7" y1="610.9" x2="1369.7" y2="518.5"><stop offset="0" stop-color="#000"/><stop offset="1" stop-color="#00ff00"/></linearGradient><linearGradient id="q201" gradientUnits="userSpaceOnUse" x1="1341.8" y1="571.7" x2="1448.9" y2="607.7"><stop offset="0" stop-color="#000"/><stop offset="1" stop-color="#ff0000"/></linearGradient><linearGradient id="q202" gradientUnits="userSpaceOnUse" x1="1348.7" y1="686.9" x2="1402.9" y2="439.1"><stop offset="0" stop-color="#000"/><stop offset="1" stop-color="#00ff00"/></linearGradient><linearGradient id="q203" gradientUnits="userSpaceOnUse" x1="1322.2" y1="573.0" x2="1499.3" y2="604.5"><stop offset="0" stop-color="#000"/><stop offset="1" stop-color="#ff0000"/></linearGradient><linearGradient id="q204" gradientUnits="userSpaceOnUse" x1="1398.0" y1="623.1" x2="1336.1" y2="525.7"><stop offset="0" stop-color="#000"/><stop offset="1" stop-color="#00ff00"/></linearGradient><linearGradient id="q205" gradientUnits="userSpaceOnUse" x1="1362.8" y1="512.2" x2="1446.1" y2="543.5"><stop offset="0" stop-color="#000"/><stop offset="1" stop-color="#ff0000"/></linearGradient><linearGradient id="q206" gradientUnits="userSpaceOnUse" x1="1376.7" y1="634.8" x2="1376.5" y2="517.3"><stop offset="0" stop-color="#000"/><stop offset="1" stop-color="#00ff00"/></linearGradient><linearGradient id="q207" gradientUnits="userSpaceOnUse" x1="1356.6" y1="511.8" x2="1477.5" y2="545.4"><stop offset="0" stop-color="#000"/><stop offset="1" stop-color="#ff0000"/></linearGradient><linearGradient id="q208" gradientUnits="userSpaceOnUse" x1="1401.3" y1="607.2" x2="1376.4" y2="517.3"><stop offset="0" stop-color="#000"/><stop offset="1" stop-color="#00ff00"/></linearGradient><linearGradient id="q209" gradientUnits="userSpaceOnUse" x1="1345.1" y1="559.1" x2="1451.3" y2="599.0"><stop offset="0" stop-color="#000"/><stop offset="1" stop-color="#ff0000"/></linearGradient><linearGradient id="q210" gradientUnits="userSpaceOnUse" x1="1353.0" y1="676.4" x2="1363.3" y2="478.0"><stop offset="0" stop-color="#000"/><stop offset="1" stop-color="#00ff00"/></linearGradient><linearGradient id="q211" gradientUnits="userSpaceOnUse" x1="1339.3" y1="558.4" x2="1491.1" y2="603.3"><stop offset="0" stop-color="#000"/><stop offset="1" stop-color="#ff0000"/></linearGradient><linearGradient id="q212" gradientUnits="userSpaceOnUse" x1="1389.3" y1="626.8" x2="1335.4" y2="516.1"><stop offset="0" stop-color="#000"/><stop offset="1" stop-color="#00ff00"/></linearGradient><linearGradient id="q213" gradientUnits="userSpaceOnUse" x1="1327.5" y1="606.0" x2="1456.6" y2="654.5"><stop offset="0" stop-color="#000"/><stop offset="1" stop-color="#ff0000"/></linearGradient><linearGradient id="q214" gradientUnits="userSpaceOnUse" x1="1334.0" y1="696.5" x2="1359.1" y2="397.4"><stop offset="0" stop-color="#000"/><stop offset="1" stop-color="#00ff00"/></linearGradient><linearGradient id="q215" gradientUnits="userSpaceOnUse" x1="1321.8" y1="605.2" x2="1504.5" y2="661.4"><stop offset="0" stop-color="#000"/><stop offset="1" stop-color="#ff0000"/></linearGradient><linearGradient id="q216" gradientUnits="userSpaceOnUse" x1="1364.8" y1="647.2" x2="1281.9" y2="520.9"><stop offset="0" stop-color="#000"/><stop offset="1" stop-color="#00ff00"/></linearGradient><linearGradient id="q217" gradientUnits="userSpaceOnUse" x1="1360.5" y1="529.4" x2="1439.0" y2="517.2"><stop offset="0" stop-color="#000"/><stop offset="1" stop-color="#ff0000"/></linearGradient><linearGradient id="q218" gradientUnits="userSpaceOnUse" x1="1448.3" y1="589.7" x2="1438.9" y2="517.2"><stop offset="0" stop-color="#000"/><stop offset="1" stop-color="#00ff00"/></linearGradient><linearGradient id="q219" gradientUnits="userSpaceOnUse" x1="1365.8" y1="524.0" x2="1439.0" y2="517.2"><stop offset="0" stop-color="#000"/><stop offset="1" stop-color="#ff0000"/></linearGradient><linearGradient id="q220" gradientUnits="userSpaceOnUse" x1="1446.9" y1="591.1" x2="1438.9" y2="517.2"><stop offset="0" stop-color="#000"/><stop offset="1" stop-color="#00ff00"/></linearGradient><linearGradient id="q221" gradientUnits="userSpaceOnUse" x1="1370.8" y1="521.5" x2="1439.0" y2="517.2"><stop offset="0" stop-color="#000"/><stop offset="1" stop-color="#ff0000"/></linearGradient><linearGradient id="q222" gradientUnits="userSpaceOnUse" x1="1445.3" y1="592.0" x2="1438.9" y2="517.2"><stop offset="0" stop-color="#000"/><stop offset="1" stop-color="#00ff00"/></linearGradient><linearGradient id="q223" gradientUnits="userSpaceOnUse" x1="1346.3" y1="540.1" x2="1447.6" y2="537.7"><stop offset="0" stop-color="#000"/><stop offset="1" stop-color="#ff0000"/></linearGradient><linearGradient id="q224" gradientUnits="userSpaceOnUse" x1="1436.1" y1="610.0" x2="1416.6" y2="513.6"><stop offset="0" stop-color="#000"/><stop offset="1" stop-color="#00ff00"/></linearGradient><linearGradient id="q225" gradientUnits="userSpaceOnUse" x1="1368.4" y1="532.7" x2="1440.0" y2="540.2"><stop offset="0" stop-color="#000"/><stop offset="1" stop-color="#ff0000"/></linearGradient><linearGradient id="q226" gradientUnits="userSpaceOnUse" x1="1421.0" y1="620.2" x2="1421.9" y2="510.1"><stop offset="0" stop-color="#000"/><stop offset="1" stop-color="#00ff00"/></linearGradient><linearGradient id="q227" gradientUnits="userSpaceOnUse" x1="1354.8" y1="536.3" x2="1443.3" y2="535.7"><stop offset="0" stop-color="#000"/><stop offset="1" stop-color="#ff0000"/></linearGradient><linearGradient id="q228" gradientUnits="userSpaceOnUse" x1="1440.8" y1="608.3" x2="1423.7" y2="513.8"><stop offset="0" stop-color="#000"/><stop offset="1" stop-color="#00ff00"/></linearGradient><linearGradient id="q229" gradientUnits="userSpaceOnUse" x1="1369.4" y1="535.2" x2="1440.2" y2="536.0"><stop offset="0" stop-color="#000"/><stop offset="1" stop-color="#ff0000"/></linearGradient><linearGradient id="q230" gradientUnits="userSpaceOnUse" x1="1428.5" y1="611.7" x2="1427.5" y2="512.7"><stop offset="0" stop-color="#000"/><stop offset="1" stop-color="#00ff00"/></linearGradient><linearGradient id="q231" gradientUnits="userSpaceOnUse" x1="1363.4" y1="534.7" x2="1440.8" y2="533.2"><stop offset="0" stop-color="#000"/><stop offset="1" stop-color="#ff0000"/></linearGradient><linearGradient id="q232" gradientUnits="userSpaceOnUse" x1="1445.1" y1="606.2" x2="1430.8" y2="514.1"><stop offset="0" stop-color="#000"/><stop offset="1" stop-color="#00ff00"/></linearGradient><linearGradient id="q233" gradientUnits="userSpaceOnUse" x1="1371.8" y1="537.3" x2="1440.0" y2="533.0"><stop offset="0" stop-color="#000"/><stop offset="1" stop-color="#ff0000"/></linearGradient><linearGradient id="q234" gradientUnits="userSpaceOnUse" x1="1435.5" y1="604.2" x2="1433.3" y2="514.6"><stop offset="0" stop-color="#000"/><stop offset="1" stop-color="#00ff00"/></linearGradient><linearGradient id="q235" gradientUnits="userSpaceOnUse" x1="1334.4" y1="562.3" x2="1462.0" y2="578.3"><stop offset="0" stop-color="#000"/><stop offset="1" stop-color="#ff0000"/></linearGradient><linearGradient id="q236" gradientUnits="userSpaceOnUse" x1="1413.8" y1="633.6" x2="1376.0" y2="501.1"><stop offset="0" stop-color="#000"/><stop offset="1" stop-color="#00ff00"/></linearGradient><linearGradient id="q237" gradientUnits="userSpaceOnUse" x1="1351.8" y1="562.9" x2="1443.2" y2="577.6"><stop offset="0" stop-color="#000"/><stop offset="1" stop-color="#ff0000"/></linearGradient><linearGradient id="q238" gradientUnits="userSpaceOnUse" x1="1402.8" y1="641.5" x2="1387.9" y2="492.6"><stop offset="0" stop-color="#000"/><stop offset="1" stop-color="#00ff00"/></linearGradient><linearGradient id="q239" gradientUnits="userSpaceOnUse" x1="1343.0" y1="557.6" x2="1450.5" y2="567.5"><stop offset="0" stop-color="#000"/><stop offset="1" stop-color="#ff0000"/></linearGradient><linearGradient id="q240" gradientUnits="userSpaceOnUse" x1="1428.0" y1="627.8" x2="1394.4" y2="502.6"><stop offset="0" stop-color="#000"/><stop offset="1" stop-color="#00ff00"/></linearGradient><linearGradient id="q241" gradientUnits="userSpaceOnUse" x1="1356.2" y1="561.5" x2="1442.8" y2="565.2"><stop offset="0" stop-color="#000"/><stop offset="1" stop-color="#ff0000"/></linearGradient><linearGradient id="q242" gradientUnits="userSpaceOnUse" x1="1417.7" y1="630.0" x2="1404.3" y2="500.5"><stop offset="0" stop-color="#000"/><stop offset="1" stop-color="#00ff00"/></linearGradient><linearGradient id="q243" gradientUnits="userSpaceOnUse" x1="1354.0" y1="555.3" x2="1443.7" y2="558.2"><stop offset="0" stop-color="#000"/><stop offset="1" stop-color="#ff0000"/></linearGradient><linearGradient id="q244" gradientUnits="userSpaceOnUse" x1="1441.9" y1="621.7" x2="1412.8" y2="504.4"><stop offset="0" stop-color="#000"/><stop offset="1" stop-color="#00ff00"/></linearGradient><linearGradient id="q245" gradientUnits="userSpaceOnUse" x1="1362.9" y1="561.7" x2="1441.5" y2="556.7"><stop offset="0" stop-color="#000"/><stop offset="1" stop-color="#ff0000"/></linearGradient><linearGradient id="q246" gradientUnits="userSpaceOnUse" x1="1432.4" y1="618.8" x2="1420.6" y2="506.8"><stop offset="0" stop-color="#000"/><stop offset="1" stop-color="#00ff00"/></linearGradient><linearGradient id="q247" gradientUnits="userSpaceOnUse" x1="1324.4" y1="604.3" x2="1468.5" y2="643.9"><stop offset="0" stop-color="#000"/><stop offset="1" stop-color="#ff0000"/></linearGradient><linearGradient id="q248" gradientUnits="userSpaceOnUse" x1="1375.1" y1="658.0" x2="1311.6" y2="478.2"><stop offset="0" stop-color="#000"/><stop offset="1" stop-color="#00ff00"/></linearGradient><linearGradient id="q249" gradientUnits="userSpaceOnUse" x1="1329.9" y1="608.3" x2="1451.3" y2="631.8"><stop offset="0" stop-color="#000"/><stop offset="1" stop-color="#ff0000"/></linearGradient><linearGradient id="q250" gradientUnits="userSpaceOnUse" x1="1370.6" y1="660.0" x2="1325.8" y2="471.9"><stop offset="0" stop-color="#000"/><stop offset="1" stop-color="#00ff00"/></linearGradient><linearGradient id="q251" gradientUnits="userSpaceOnUse" x1="1332.5" y1="592.3" x2="1455.0" y2="615.6"><stop offset="0" stop-color="#000"/><stop offset="1" stop-color="#ff0000"/></linearGradient><linearGradient id="q252" gradientUnits="userSpaceOnUse" x1="1402.6" y1="646.8" x2="1345.9" y2="482.5"><stop offset="0" stop-color="#000"/><stop offset="1" stop-color="#00ff00"/></linearGradient><linearGradient id="q253" gradientUnits="userSpaceOnUse" x1="1338.4" y1="599.6" x2="1447.8" y2="606.5"><stop offset="0" stop-color="#000"/><stop offset="1" stop-color="#ff0000"/></linearGradient><linearGradient id="q254" gradientUnits="userSpaceOnUse" x1="1397.4" y1="646.3" x2="1360.0" y2="483.8"><stop offset="0" stop-color="#000"/><stop offset="1" stop-color="#00ff00"/></linearGradient><linearGradient id="q255" gradientUnits="userSpaceOnUse" x1="1345.1" y1="585.7" x2="1446.0" y2="593.9"><stop offset="0" stop-color="#000"/><stop offset="1" stop-color="#ff0000"/></linearGradient><linearGradient id="q256" gradientUnits="userSpaceOnUse" x1="1429.9" y1="635.5" x2="1380.3" y2="487.0"><stop offset="0" stop-color="#000"/><stop offset="1" stop-color="#00ff00"/></linearGradient><linearGradient id="q257" gradientUnits="userSpaceOnUse" x1="1350.6" y1="595.5" x2="1443.6" y2="589.6"><stop offset="0" stop-color="#000"/><stop offset="1" stop-color="#ff0000"/></linearGradient><linearGradient id="q258" gradientUnits="userSpaceOnUse" x1="1424.3" y1="632.4" x2="1393.6" y2="494.3"><stop offset="0" stop-color="#000"/><stop offset="1" stop-color="#00ff00"/></linearGradient><linearGradient id="q259" gradientUnits="userSpaceOnUse" x1="1309.8" y1="652.9" x2="1462.8" y2="710.0"><stop offset="0" stop-color="#000"/><stop offset="1" stop-color="#ff0000"/></linearGradient><linearGradient id="q260" gradientUnits="userSpaceOnUse" x1="1331.7" y1="678.2" x2="1240.8" y2="454.4"><stop offset="0" stop-color="#000"/><stop offset="1" stop-color="#00ff00"/></linearGradient><linearGradient id="q261" gradientUnits="userSpaceOnUse" x1="1309.8" y1="655.1" x2="1462.2" y2="687.6"><stop offset="0" stop-color="#000"/><stop offset="1" stop-color="#ff0000"/></linearGradient><linearGradient id="q262" gradientUnits="userSpaceOnUse" x1="1330.3" y1="677.8" x2="1255.2" y2="458.3"><stop offset="0" stop-color="#000"/><stop offset="1" stop-color="#00ff00"/></linearGradient><linearGradient id="q263" gradientUnits="userSpaceOnUse" x1="1321.4" y1="630.6" x2="1453.8" y2="664.7"><stop offset="0" stop-color="#000"/><stop offset="1" stop-color="#ff0000"/></linearGradient><linearGradient id="q264" gradientUnits="userSpaceOnUse" x1="1372.1" y1="661.7" x2="1290.8" y2="461.7"><stop offset="0" stop-color="#000"/><stop offset="1" stop-color="#00ff00"/></linearGradient><linearGradient id="q265" gradientUnits="userSpaceOnUse" x1="1321.3" y1="638.4" x2="1453.9" y2="648.4"><stop offset="0" stop-color="#000"/><stop offset="1" stop-color="#ff0000"/></linearGradient><linearGradient id="q266" gradientUnits="userSpaceOnUse" x1="1370.4" y1="660.7" x2="1306.7" y2="471.2"><stop offset="0" stop-color="#000"/><stop offset="1" stop-color="#00ff00"/></linearGradient><linearGradient id="q267" gradientUnits="userSpaceOnUse" x1="1337.1" y1="617.3" x2="1446.4" y2="630.0"><stop offset="0" stop-color="#000"/><stop offset="1" stop-color="#ff0000"/></linearGradient><linearGradient id="q268" gradientUnits="userSpaceOnUse" x1="1412.5" y1="645.3" x2="1340.8" y2="468.9"><stop offset="0" stop-color="#000"/><stop offset="1" stop-color="#00ff00"/></linearGradient><linearGradient id="q269" gradientUnits="userSpaceOnUse" x1="1338.3" y1="629.3" x2="1445.7" y2="622.5"><stop offset="0" stop-color="#000"/><stop offset="1" stop-color="#ff0000"/></linearGradient><linearGradient id="q270" gradientUnits="userSpaceOnUse" x1="1410.4" y1="643.4" x2="1357.8" y2="483.6"><stop offset="0" stop-color="#000"/><stop offset="1" stop-color="#00ff00"/></linearGradient><linearGradient id="q271" gradientUnits="userSpaceOnUse" x1="1478.8" y1="557.2" x2="1438.9" y2="517.2"><stop offset="0" stop-color="#000"/><stop offset="1" stop-color="#00ff00"/></linearGradient><linearGradient id="q272" gradientUnits="userSpaceOnUse" x1="1512.6" y1="512.5" x2="1438.9" y2="517.2"><stop offset="0" stop-color="#000"/><stop offset="1" stop-color="#0000ff"/></linearGradient><linearGradient id="q273" gradientUnits="userSpaceOnUse" x1="1474.9" y1="559.7" x2="1438.9" y2="517.2"><stop offset="0" stop-color="#000"/><stop offset="1" stop-color="#00ff00"/></linearGradient><linearGradient id="q274" gradientUnits="userSpaceOnUse" x1="1522.1" y1="526.7" x2="1438.9" y2="517.2"><stop offset="0" stop-color="#000"/><stop offset="1" stop-color="#0000ff"/></linearGradient><linearGradient id="q275" gradientUnits="userSpaceOnUse" x1="1469.8" y1="559.4" x2="1438.9" y2="517.2"><stop offset="0" stop-color="#000"/><stop offset="1" stop-color="#00ff00"/></linearGradient><linearGradient id="q276" gradientUnits="userSpaceOnUse" x1="1515.3" y1="548.2" x2="1438.9" y2="517.2"><stop offset="0" stop-color="#000"/><stop offset="1" stop-color="#0000ff"/></linearGradient><linearGradient id="q277" gradientUnits="userSpaceOnUse" x1="1477.3" y1="577.5" x2="1431.4" y2="520.5"><stop offset="0" stop-color="#000"/><stop offset="1" stop-color="#00ff00"/></linearGradient><linearGradient id="q278" gradientUnits="userSpaceOnUse" x1="1531.8" y1="525.1" x2="1439.8" y2="530.9"><stop offset="0" stop-color="#000"/><stop offset="1" stop-color="#0000ff"/></linearGradient><linearGradient id="q279" gradientUnits="userSpaceOnUse" x1="1498.8" y1="568.0" x2="1426.6" y2="522.6"><stop offset="0" stop-color="#000"/><stop offset="1" stop-color="#00ff00"/></linearGradient><linearGradient id="q280" gradientUnits="userSpaceOnUse" x1="1512.5" y1="503.3" x2="1439.8" y2="530.9"><stop offset="0" stop-color="#000"/><stop offset="1" stop-color="#0000ff"/></linearGradient><linearGradient id="q281" gradientUnits="userSpaceOnUse" x1="1484.6" y1="575.4" x2="1439.0" y2="508.4"><stop offset="0" stop-color="#000"/><stop offset="1" stop-color="#00ff00"/></linearGradient><linearGradient id="q282" gradientUnits="userSpaceOnUse" x1="1557.4" y1="541.2" x2="1431.3" y2="523.5"><stop offset="0" stop-color="#000"/><stop offset="1" stop-color="#0000ff"/></linearGradient><linearGradient id="q283" gradientUnits="userSpaceOnUse" x1="1536.3" y1="562.7" x2="1420.2" y2="513.1"><stop offset="0" stop-color="#000"/><stop offset="1" stop-color="#00ff00"/></linearGradient><linearGradient id="q284" gradientUnits="userSpaceOnUse" x1="1505.9" y1="474.9" x2="1440.9" y2="535.9"><stop offset="0" stop-color="#000"/><stop offset="1" stop-color="#0000ff"/></linearGradient><linearGradient id="q285" gradientUnits="userSpaceOnUse" x1="1492.5" y1="571.0" x2="1447.3" y2="496.9"><stop offset="0" stop-color="#000"/><stop offset="1" stop-color="#00ff00"/></linearGradient><linearGradient id="q286" gradientUnits="userSpaceOnUse" x1="1561.1" y1="561.6" x2="1423.1" y2="505.8"><stop offset="0" stop-color="#000"/><stop offset="1" stop-color="#0000ff"/></linearGradient><linearGradient id="q287" gradientUnits="userSpaceOnUse" x1="1584.8" y1="539.9" x2="1400.9" y2="512.5"><stop offset="0" stop-color="#000"/><stop offset="1" stop-color="#00ff00"/></linearGradient><linearGradient id="q288" gradientUnits="userSpaceOnUse" x1="1491.7" y1="466.1" x2="1450.8" y2="543.9"><stop offset="0" stop-color="#000"/><stop offset="1" stop-color="#0000ff"/></linearGradient><linearGradient id="q289" gradientUnits="userSpaceOnUse" x1="1472.0" y1="600.8" x2="1419.4" y2="516.8"><stop offset="0" stop-color="#000"/><stop offset="1" stop-color="#00ff00"/></linearGradient><linearGradient id="q290" gradientUnits="userSpaceOnUse" x1="1558.7" y1="544.0" x2="1441.1" y2="551.5"><stop offset="0" stop-color="#000"/><stop offset="1" stop-color="#0000ff"/></linearGradient><linearGradient id="q291" gradientUnits="userSpaceOnUse" x1="1506.6" y1="597.9" x2="1395.0" y2="518.8"><stop offset="0" stop-color="#000"/><stop offset="1" stop-color="#00ff00"/></linearGradient><linearGradient id="q292" gradientUnits="userSpaceOnUse" x1="1525.9" y1="505.3" x2="1441.1" y2="551.5"><stop offset="0" stop-color="#000"/><stop offset="1" stop-color="#0000ff"/></linearGradient><linearGradient id="q293" gradientUnits="userSpaceOnUse" x1="1497.6" y1="590.9" x2="1437.2" y2="481.7"><stop offset="0" stop-color="#000"/><stop offset="1" stop-color="#00ff00"/></linearGradient><linearGradient id="q294" gradientUnits="userSpaceOnUse" x1="1605.8" y1="555.0" x2="1407.0" y2="533.1"><stop offset="0" stop-color="#000"/><stop offset="1" stop-color="#0000ff"/></linearGradient><linearGradient id="q295" gradientUnits="userSpaceOnUse" x1="1559.0" y1="595.8" x2="1367.0" y2="476.2"><stop offset="0" stop-color="#000"/><stop offset="1" stop-color="#00ff00"/></linearGradient><linearGradient id="q296" gradientUnits="userSpaceOnUse" x1="1522.2" y1="470.9" x2="1445.2" y2="571.6"><stop offset="0" stop-color="#000"/><stop offset="1" stop-color="#0000ff"/></linearGradient><linearGradient id="q297" gradientUnits="userSpaceOnUse" x1="1524.3" y1="580.0" x2="1455.7" y2="446.9"><stop offset="0" stop-color="#000"/><stop offset="1" stop-color="#00ff00"/></linearGradient><linearGradient id="q298" gradientUnits="userSpaceOnUse" x1="1627.8" y1="566.2" x2="1355.8" y2="487.3"><stop offset="0" stop-color="#000"/><stop offset="1" stop-color="#0000ff"/></linearGradient><linearGradient id="q299" gradientUnits="userSpaceOnUse" x1="1617.9" y1="591.5" x2="1307.7" y2="428.8"><stop offset="0" stop-color="#000"/><stop offset="1" stop-color="#00ff00"/></linearGradient><linearGradient id="q300" gradientUnits="userSpaceOnUse" x1="1521.6" y1="465.4" x2="1471.6" y2="597.3"><stop offset="0" stop-color="#000"/><stop offset="1" stop-color="#0000ff"/></linearGradient><linearGradient id="q301" gradientUnits="userSpaceOnUse" x1="1462.5" y1="619.4" x2="1403.7" y2="501.2"><stop offset="0" stop-color="#000"/><stop offset="1" stop-color="#00ff00"/></linearGradient><linearGradient id="q302" gradientUnits="userSpaceOnUse" x1="1586.1" y1="571.0" x2="1442.9" y2="580.1"><stop offset="0" stop-color="#000"/><stop offset="1" stop-color="#0000ff"/></linearGradient><linearGradient id="q303" gradientUnits="userSpaceOnUse" x1="1491.0" y1="630.6" x2="1346.3" y2="478.5"><stop offset="0" stop-color="#000"/><stop offset="1" stop-color="#00ff00"/></linearGradient><linearGradient id="q304" gradientUnits="userSpaceOnUse" x1="1544.5" y1="512.9" x2="1442.9" y2="580.1"><stop offset="0" stop-color="#000"/><stop offset="1" stop-color="#0000ff"/></linearGradient><linearGradient id="q305" gradientUnits="userSpaceOnUse" x1="1513.5" y1="598.9" x2="1433.9" y2="428.8"><stop offset="0" stop-color="#000"/><stop offset="1" stop-color="#00ff00"/></linearGradient><linearGradient id="q306" gradientUnits="userSpaceOnUse" x1="1654.4" y1="560.0" x2="1363.8" y2="558.2"><stop offset="0" stop-color="#000"/><stop offset="1" stop-color="#0000ff"/></linearGradient><linearGradient id="q307" gradientUnits="userSpaceOnUse" x1="1545.1" y1="618.0" x2="1331.0" y2="366.8"><stop offset="0" stop-color="#000"/><stop offset="1" stop-color="#00ff00"/></linearGradient><linearGradient id="q308" gradientUnits="userSpaceOnUse" x1="1550.5" y1="473.1" x2="1449.1" y2="629.5"><stop offset="0" stop-color="#000"/><stop offset="1" stop-color="#0000ff"/></linearGradient><linearGradient id="q309" gradientUnits="userSpaceOnUse" x1="1565.0" y1="578.3" x2="1464.2" y2="355.9"><stop offset="0" stop-color="#000"/><stop offset="1" stop-color="#00ff00"/></linearGradient><linearGradient id="q310" gradientUnits="userSpaceOnUse" x1="1695.0" y1="542.1" x2="1205.3" y2="528.2"><stop offset="0" stop-color="#000"/><stop offset="1" stop-color="#0000ff"/></linearGradient><linearGradient id="q311" gradientUnits="userSpaceOnUse" x1="1597.8" y1="603.3" x2="1316.1" y2="243.2"><stop offset="0" stop-color="#000"/><stop offset="1" stop-color="#00ff00"/></linearGradient><linearGradient id="q312" gradientUnits="userSpaceOnUse" x1="1568.7" y1="470.7" x2="1496.0" y2="692.5"><stop offset="0" stop-color="#000"/><stop offset="1" stop-color="#0000ff"/></linearGradient><linearGradient id="q313" gradientUnits="userSpaceOnUse" x1="1453.0" y1="628.9" x2="1390.8" y2="476.2"><stop offset="0" stop-color="#000"/><stop offset="1" stop-color="#00ff00"/></linearGradient><linearGradient id="q314" gradientUnits="userSpaceOnUse" x1="1608.3" y1="598.3" x2="1444.8" y2="608.7"><stop offset="0" stop-color="#000"/><stop offset="1" stop-color="#0000ff"/></linearGradient><linearGradient id="q315" gradientUnits="userSpaceOnUse" x1="1463.5" y1="639.8" x2="1321.6" y2="404.7"><stop offset="0" stop-color="#000"/><stop offset="1" stop-color="#00ff00"/></linearGradient><linearGradient id="q316" gradientUnits="userSpaceOnUse" x1="1563.1" y1="522.0" x2="1444.8" y2="608.7"><stop offset="0" stop-color="#000"/><stop offset="1" stop-color="#0000ff"/></linearGradient><linearGradient id="q317" gradientUnits="userSpaceOnUse" x1="1528.4" y1="598.2" x2="1432.7" y2="363.0"><stop offset="0" stop-color="#000"/><stop offset="1" stop-color="#00ff00"/></linearGradient><linearGradient id="q318" gradientUnits="userSpaceOnUse" x1="1690.9" y1="561.5" x2="1320.9" y2="597.3"><stop offset="0" stop-color="#000"/><stop offset="1" stop-color="#0000ff"/></linearGradient><linearGradient id="q319" gradientUnits="userSpaceOnUse" x1="1536.4" y1="608.1" x2="1347.1" y2="257.6"><stop offset="0" stop-color="#000"/><stop offset="1" stop-color="#00ff00"/></linearGradient><linearGradient id="q320" gradientUnits="userSpaceOnUse" x1="1579.3" y1="478.5" x2="1451.2" y2="694.1"><stop offset="0" stop-color="#000"/><stop offset="1" stop-color="#0000ff"/></linearGradient><linearGradient id="q321" gradientUnits="userSpaceOnUse" x1="1603.9" y1="567.5" x2="1474.6" y2="249.8"><stop offset="0" stop-color="#000"/><stop offset="1" stop-color="#00ff00"/></linearGradient><linearGradient id="q322" gradientUnits="userSpaceOnUse" x1="1729.2" y1="517.0" x2="1069.6" y2="666.9"><stop offset="0" stop-color="#000"/><stop offset="1" stop-color="#0000ff"/></linearGradient><linearGradient id="q323" gradientUnits="userSpaceOnUse" x1="1610.6" y1="576.8" x2="1375.3" y2="113.4"><stop offset="0" stop-color="#000"/><stop offset="1" stop-color="#00ff00"/></linearGradient><linearGradient id="q324" gradientUnits="userSpaceOnUse" x1="1615.4" y1="482.1" x2="1517.8" y2="804.3"><stop offset="0" stop-color="#000"/><stop offset="1" stop-color="#0000ff"/></linearGradient></defs><rect x="1162" y="182" width="745" height="551" fill="#232323"/><g clip-path="url(#clL)"><rect x="1150" y="170" width="700" height="580" fill="url(#gL)"/><path d="M1427.7,339.8 L2160.5,769.4 L2615.6,-7.0 L1882.8,-436.6 Z" fill="url(#gT)"/><path d="M1294.7,693.2 L2192.3,328.1 L2531.4,1161.8 L1633.8,1526.9 Z" fill="url(#gB)"/><g clip-path="url(#clT)"><g style="isolation:isolate"><rect x="1280" y="330" width="460" height="375" fill="#000"/><path d="M1438.9 517.2L1746.5 516.5L1539.1 394.9Z" fill="#ff0000" style="mix-blend-mode:screen;mix-blend-mode:plus-lighter"/><path d="M1438.9 517.2L1473.8 517.1L1465.9 512.5Z" fill="url(#q1)" style="mix-blend-mode:screen;mix-blend-mode:plus-lighter"/><path d="M1438.9 517.2L1473.8 517.1L1465.9 512.5Z" fill="url(#q2)" style="mix-blend-mode:screen;mix-blend-mode:plus-lighter"/><path d="M1438.9 517.2L1465.9 512.5L1458.1 507.9Z" fill="url(#q3)" style="mix-blend-mode:screen;mix-blend-mode:plus-lighter"/><path d="M1438.9 517.2L1465.9 512.5L1458.1 507.9Z" fill="url(#q4)" style="mix-blend-mode:screen;mix-blend-mode:plus-lighter"/><path d="M1438.9 517.2L1458.1 507.9L1450.3 503.3Z" fill="url(#q5)" style="mix-blend-mode:screen;mix-blend-mode:plus-lighter"/><path d="M1438.9 517.2L1458.1 507.9L1450.3 503.3Z" fill="url(#q6)" style="mix-blend-mode:screen;mix-blend-mode:plus-lighter"/><path d="M1473.8 517.1L1526.0 517.0L1506.4 505.5Z" fill="url(#q7)" style="mix-blend-mode:screen;mix-blend-mode:plus-lighter"/><path d="M1473.8 517.1L1526.0 517.0L1506.4 505.5Z" fill="url(#q8)" style="mix-blend-mode:screen;mix-blend-mode:plus-lighter"/><path d="M1473.8 517.1L1506.4 505.5L1465.9 512.5Z" fill="url(#q9)" style="mix-blend-mode:screen;mix-blend-mode:plus-lighter"/><path d="M1473.8 517.1L1506.4 505.5L1465.9 512.5Z" fill="url(#q10)" style="mix-blend-mode:screen;mix-blend-mode:plus-lighter"/><path d="M1465.9 512.5L1506.4 505.5L1486.9 494.0Z" fill="url(#q11)" style="mix-blend-mode:screen;mix-blend-mode:plus-lighter"/><path d="M1465.9 512.5L1506.4 505.5L1486.9 494.0Z" fill="url(#q12)" style="mix-blend-mode:screen;mix-blend-mode:plus-lighter"/><path d="M1465.9 512.5L1486.9 494.0L1458.1 507.9Z" fill="url(#q13)" style="mix-blend-mode:screen;mix-blend-mode:plus-lighter"/><path d="M1465.9 512.5L1486.9 494.0L1458.1 507.9Z" fill="url(#q14)" style="mix-blend-mode:screen;mix-blend-mode:plus-lighter"/><path d="M1458.1 507.9L1486.9 494.0L1467.3 482.6Z" fill="url(#q15)" style="mix-blend-mode:screen;mix-blend-mode:plus-lighter"/><path d="M1458.1 507.9L1486.9 494.0L1467.3 482.6Z" fill="url(#q16)" style="mix-blend-mode:screen;mix-blend-mode:plus-lighter"/><path d="M1458.1 507.9L1467.3 482.6L1450.3 503.3Z" fill="url(#q17)" style="mix-blend-mode:screen;mix-blend-mode:plus-lighter"/><path d="M1458.1 507.9L1467.3 482.6L1450.3 503.3Z" fill="url(#q18)" style="mix-blend-mode:screen;mix-blend-mode:plus-lighter"/><path d="M1526.0 517.0L1598.5 516.8L1562.7 495.8Z" fill="url(#q19)" style="mix-blend-mode:screen;mix-blend-mode:plus-lighter"/><path d="M1526.0 517.0L1598.5 516.8L1562.7 495.8Z" fill="url(#q20)" style="mix-blend-mode:screen;mix-blend-mode:plus-lighter"/><path d="M1526.0 517.0L1562.7 495.8L1506.4 505.5Z" fill="url(#q21)" style="mix-blend-mode:screen;mix-blend-mode:plus-lighter"/><path d="M1526.0 517.0L1562.7 495.8L1506.4 505.5Z" fill="url(#q22)" style="mix-blend-mode:screen;mix-blend-mode:plus-lighter"/><path d="M1506.4 505.5L1562.7 495.8L1526.8 474.7Z" fill="url(#q23)" style="mix-blend-mode:screen;mix-blend-mode:plus-lighter"/><path d="M1506.4 505.5L1562.7 495.8L1526.8 474.7Z" fill="url(#q24)" style="mix-blend-mode:screen;mix-blend-mode:plus-lighter"/><path d="M1506.4 505.5L1526.8 474.7L1486.9 494.0Z" fill="url(#q25)" style="mix-blend-mode:screen;mix-blend-mode:plus-lighter"/><path d="M1506.4 505.5L1526.8 474.7L1486.9 494.0Z" fill="url(#q26)" style="mix-blend-mode:screen;mix-blend-mode:plus-lighter"/><path d="M1486.9 494.0L1526.8 474.7L1490.9 453.7Z" fill="url(#q27)" style="mix-blend-mode:screen;mix-blend-mode:plus-lighter"/><path d="M1486.9 494.0L1526.8 474.7L1490.9 453.7Z" fill="url(#q28)" style="mix-blend-mode:screen;mix-blend-mode:plus-lighter"/><path d="M1486.9 494.0L1490.9 453.7L1467.3 482.6Z" fill="url(#q29)" style="mix-blend-mode:screen;mix-blend-mode:plus-lighter"/><path d="M1486.9 494.0L1490.9 453.7L1467.3 482.6Z" fill="url(#q30)" style="mix-blend-mode:screen;mix-blend-mode:plus-lighter"/><path d="M1598.5 516.8L1671.1 516.6L1618.9 486.1Z" fill="url(#q31)" style="mix-blend-mode:screen;mix-blend-mode:plus-lighter"/><path d="M1598.5 516.8L1671.1 516.6L1618.9 486.1Z" fill="url(#q32)" style="mix-blend-mode:screen;mix-blend-mode:plus-lighter"/><path d="M1598.5 516.8L1618.9 486.1L1562.7 495.8Z" fill="url(#q33)" style="mix-blend-mode:screen;mix-blend-mode:plus-lighter"/><path d="M1598.5 516.8L1618.9 486.1L1562.7 495.8Z" fill="url(#q34)" style="mix-blend-mode:screen;mix-blend-mode:plus-lighter"/><path d="M1562.7 495.8L1618.9 486.1L1566.7 455.5Z" fill="url(#q35)" style="mix-blend-mode:screen;mix-blend-mode:plus-lighter"/><path d="M1562.7 495.8L1618.9 486.1L1566.7 455.5Z" fill="url(#q36)" style="mix-blend-mode:screen;mix-blend-mode:plus-lighter"/><path d="M1562.7 495.8L1566.7 455.5L1526.8 474.7Z" fill="url(#q37)" style="mix-blend-mode:screen;mix-blend-mode:plus-lighter"/><path d="M1562.7 495.8L1566.7 455.5L1526.8 474.7Z" fill="url(#q38)" style="mix-blend-mode:screen;mix-blend-mode:plus-lighter"/><path d="M1526.8 474.7L1566.7 455.5L1514.5 424.9Z" fill="url(#q39)" style="mix-blend-mode:screen;mix-blend-mode:plus-lighter"/><path d="M1526.8 474.7L1566.7 455.5L1514.5 424.9Z" fill="url(#q40)" style="mix-blend-mode:screen;mix-blend-mode:plus-lighter"/><path d="M1526.8 474.7L1514.5 424.9L1490.9 453.7Z" fill="url(#q41)" style="mix-blend-mode:screen;mix-blend-mode:plus-lighter"/><path d="M1526.8 474.7L1514.5 424.9L1490.9 453.7Z" fill="url(#q42)" style="mix-blend-mode:screen;mix-blend-mode:plus-lighter"/><path d="M1671.1 516.6L1746.5 516.5L1677.4 475.9Z" fill="url(#q43)" style="mix-blend-mode:screen;mix-blend-mode:plus-lighter"/><path d="M1671.1 516.6L1746.5 516.5L1677.4 475.9Z" fill="url(#q44)" style="mix-blend-mode:screen;mix-blend-mode:plus-lighter"/><path d="M1671.1 516.6L1677.4 475.9L1618.9 486.1Z" fill="url(#q45)" style="mix-blend-mode:screen;mix-blend-mode:plus-lighter"/><path d="M1671.1 516.6L1677.4 475.9L1618.9 486.1Z" fill="url(#q46)" style="mix-blend-mode:screen;mix-blend-mode:plus-lighter"/><path d="M1618.9 486.1L1677.4 475.9L1608.3 435.4Z" fill="url(#q47)" style="mix-blend-mode:screen;mix-blend-mode:plus-lighter"/><path d="M1618.9 486.1L1677.4 475.9L1608.3 435.4Z" fill="url(#q48)" style="mix-blend-mode:screen;mix-blend-mode:plus-lighter"/><path d="M1618.9 486.1L1608.3 435.4L1566.7 455.5Z" fill="url(#q49)" style="mix-blend-mode:screen;mix-blend-mode:plus-lighter"/><path d="M1618.9 486.1L1608.3 435.4L1566.7 455.5Z" fill="url(#q50)" style="mix-blend-mode:screen;mix-blend-mode:plus-lighter"/><path d="M1566.7 455.5L1608.3 435.4L1539.1 394.9Z" fill="url(#q51)" style="mix-blend-mode:screen;mix-blend-mode:plus-lighter"/><path d="M1566.7 455.5L1608.3 435.4L1539.1 394.9Z" fill="url(#q52)" style="mix-blend-mode:screen;mix-blend-mode:plus-lighter"/><path d="M1566.7 455.5L1539.1 394.9L1514.5 424.9Z" fill="url(#q53)" style="mix-blend-mode:screen;mix-blend-mode:plus-lighter"/><path d="M1566.7 455.5L1539.1 394.9L1514.5 424.9Z" fill="url(#q54)" style="mix-blend-mode:screen;mix-blend-mode:plus-lighter"/><path d="M1438.9 517.2L1539.1 394.9L1427.0 329.2Z" fill="#00ff00" style="mix-blend-mode:screen;mix-blend-mode:plus-lighter"/><path d="M1438.9 517.2L1450.3 503.3L1446.1 500.8Z" fill="url(#q55)" style="mix-blend-mode:screen;mix-blend-mode:plus-lighter"/><path d="M1438.9 517.2L1450.3 503.3L1446.1 500.8Z" fill="url(#q56)" style="mix-blend-mode:screen;mix-blend-mode:plus-lighter"/><path d="M1438.9 517.2L1446.1 500.8L1441.8 498.4Z" fill="url(#q57)" style="mix-blend-mode:screen;mix-blend-mode:plus-lighter"/><path d="M1438.9 517.2L1446.1 500.8L1441.8 498.4Z" fill="url(#q58)" style="mix-blend-mode:screen;mix-blend-mode:plus-lighter"/><path d="M1438.9 517.2L1441.8 498.4L1437.6 495.9Z" fill="url(#q59)" style="mix-blend-mode:screen;mix-blend-mode:plus-lighter"/><path d="M1438.9 517.2L1441.8 498.4L1437.6 495.9Z" fill="url(#q60)" style="mix-blend-mode:screen;mix-blend-mode:plus-lighter"/><path d="M1450.3 503.3L1467.3 482.6L1456.7 476.4Z" fill="url(#q61)" style="mix-blend-mode:screen;mix-blend-mode:plus-lighter"/><path d="M1450.3 503.3L1467.3 482.6L1456.7 476.4Z" fill="url(#q62)" style="mix-blend-mode:screen;mix-blend-mode:plus-lighter"/><path d="M1450.3 503.3L1456.7 476.4L1446.1 500.8Z" fill="url(#q63)" style="mix-blend-mode:screen;mix-blend-mode:plus-lighter"/><path d="M1450.3 503.3L1456.7 476.4L1446.1 500.8Z" fill="url(#q64)" style="mix-blend-mode:screen;mix-blend-mode:plus-lighter"/><path d="M1446.1 500.8L1456.7 476.4L1446.1 470.2Z" fill="url(#q65)" style="mix-blend-mode:screen;mix-blend-mode:plus-lighter"/><path d="M1446.1 500.8L1456.7 476.4L1446.1 470.2Z" fill="url(#q66)" style="mix-blend-mode:screen;mix-blend-mode:plus-lighter"/><path d="M1446.1 500.8L1446.1 470.2L1441.8 498.4Z" fill="url(#q67)" style="mix-blend-mode:screen;mix-blend-mode:plus-lighter"/><path d="M1446.1 500.8L1446.1 470.2L1441.8 498.4Z" fill="url(#q68)" style="mix-blend-mode:screen;mix-blend-mode:plus-lighter"/><path d="M1441.8 498.4L1446.1 470.2L1435.6 464.0Z" fill="url(#q69)" style="mix-blend-mode:screen;mix-blend-mode:plus-lighter"/><path d="M1441.8 498.4L1446.1 470.2L1435.6 464.0Z" fill="url(#q70)" style="mix-blend-mode:screen;mix-blend-mode:plus-lighter"/><path d="M1441.8 498.4L1435.6 464.0L1437.6 495.9Z" fill="url(#q71)" style="mix-blend-mode:screen;mix-blend-mode:plus-lighter"/><path d="M1441.8 498.4L1435.6 464.0L1437.6 495.9Z" fill="url(#q72)" style="mix-blend-mode:screen;mix-blend-mode:plus-lighter"/><path d="M1467.3 482.6L1490.9 453.7L1471.5 442.3Z" fill="url(#q73)" style="mix-blend-mode:screen;mix-blend-mode:plus-lighter"/><path d="M1467.3 482.6L1490.9 453.7L1471.5 442.3Z" fill="url(#q74)" style="mix-blend-mode:screen;mix-blend-mode:plus-lighter"/><path d="M1467.3 482.6L1471.5 442.3L1456.7 476.4Z" fill="url(#q75)" style="mix-blend-mode:screen;mix-blend-mode:plus-lighter"/><path d="M1467.3 482.6L1471.5 442.3L1456.7 476.4Z" fill="url(#q76)" style="mix-blend-mode:screen;mix-blend-mode:plus-lighter"/><path d="M1456.7 476.4L1471.5 442.3L1452.1 431.0Z" fill="url(#q77)" style="mix-blend-mode:screen;mix-blend-mode:plus-lighter"/><path d="M1456.7 476.4L1471.5 442.3L1452.1 431.0Z" fill="url(#q78)" style="mix-blend-mode:screen;mix-blend-mode:plus-lighter"/><path d="M1456.7 476.4L1452.1 431.0L1446.1 470.2Z" fill="url(#q79)" style="mix-blend-mode:screen;mix-blend-mode:plus-lighter"/><path d="M1456.7 476.4L1452.1 431.0L1446.1 470.2Z" fill="url(#q80)" style="mix-blend-mode:screen;mix-blend-mode:plus-lighter"/><path d="M1446.1 470.2L1452.1 431.0L1432.7 419.6Z" fill="url(#q81)" style="mix-blend-mode:screen;mix-blend-mode:plus-lighter"/><path d="M1446.1 470.2L1452.1 431.0L1432.7 419.6Z" fill="url(#q82)" style="mix-blend-mode:screen;mix-blend-mode:plus-lighter"/><path d="M1446.1 470.2L1432.7 419.6L1435.6 464.0Z" fill="url(#q83)" style="mix-blend-mode:screen;mix-blend-mode:plus-lighter"/><path d="M1446.1 470.2L1432.7 419.6L1435.6 464.0Z" fill="url(#q84)" style="mix-blend-mode:screen;mix-blend-mode:plus-lighter"/><path d="M1490.9 453.7L1514.5 424.9L1486.3 408.3Z" fill="url(#q85)" style="mix-blend-mode:screen;mix-blend-mode:plus-lighter"/><path d="M1490.9 453.7L1514.5 424.9L1486.3 408.3Z" fill="url(#q86)" style="mix-blend-mode:screen;mix-blend-mode:plus-lighter"/><path d="M1490.9 453.7L1486.3 408.3L1471.5 442.3Z" fill="url(#q87)" style="mix-blend-mode:screen;mix-blend-mode:plus-lighter"/><path d="M1490.9 453.7L1486.3 408.3L1471.5 442.3Z" fill="url(#q88)" style="mix-blend-mode:screen;mix-blend-mode:plus-lighter"/><path d="M1471.5 442.3L1486.3 408.3L1458.1 391.8Z" fill="url(#q89)" style="mix-blend-mode:screen;mix-blend-mode:plus-lighter"/><path d="M1471.5 442.3L1486.3 408.3L1458.1 391.8Z" fill="url(#q90)" style="mix-blend-mode:screen;mix-blend-mode:plus-lighter"/><path d="M1471.5 442.3L1458.1 391.8L1452.1 431.0Z" fill="url(#q91)" style="mix-blend-mode:screen;mix-blend-mode:plus-lighter"/><path d="M1471.5 442.3L1458.1 391.8L1452.1 431.0Z" fill="url(#q92)" style="mix-blend-mode:screen;mix-blend-mode:plus-lighter"/><path d="M1452.1 431.0L1458.1 391.8L1429.9 375.3Z" fill="url(#q93)" style="mix-blend-mode:screen;mix-blend-mode:plus-lighter"/><path d="M1452.1 431.0L1458.1 391.8L1429.9 375.3Z" fill="url(#q94)" style="mix-blend-mode:screen;mix-blend-mode:plus-lighter"/><path d="M1452.1 431.0L1429.9 375.3L1432.7 419.6Z" fill="url(#q95)" style="mix-blend-mode:screen;mix-blend-mode:plus-lighter"/><path d="M1452.1 431.0L1429.9 375.3L1432.7 419.6Z" fill="url(#q96)" style="mix-blend-mode:screen;mix-blend-mode:plus-lighter"/><path d="M1514.5 424.9L1539.1 394.9L1501.7 373.0Z" fill="url(#q97)" style="mix-blend-mode:screen;mix-blend-mode:plus-lighter"/><path d="M1514.5 424.9L1539.1 394.9L1501.7 373.0Z" fill="url(#q98)" style="mix-blend-mode:screen;mix-blend-mode:plus-lighter"/><path d="M1514.5 424.9L1501.7 373.0L1486.3 408.3Z" fill="url(#q99)" style="mix-blend-mode:screen;mix-blend-mode:plus-lighter"/><path d="M1514.5 424.9L1501.7 373.0L1486.3 408.3Z" fill="url(#q100)" style="mix-blend-mode:screen;mix-blend-mode:plus-lighter"/><path d="M1486.3 408.3L1501.7 373.0L1464.4 351.1Z" fill="url(#q101)" style="mix-blend-mode:screen;mix-blend-mode:plus-lighter"/><path d="M1486.3 408.3L1501.7 373.0L1464.4 351.1Z" fill="url(#q102)" style="mix-blend-mode:screen;mix-blend-mode:plus-lighter"/><path d="M1486.3 408.3L1464.4 351.1L1458.1 391.8Z" fill="url(#q103)" style="mix-blend-mode:screen;mix-blend-mode:plus-lighter"/><path d="M1486.3 408.3L1464.4 351.1L1458.1 391.8Z" fill="url(#q104)" style="mix-blend-mode:screen;mix-blend-mode:plus-lighter"/><path d="M1458.1 391.8L1464.4 351.1L1427.0 329.2Z" fill="url(#q105)" style="mix-blend-mode:screen;mix-blend-mode:plus-lighter"/><path d="M1458.1 391.8L1464.4 351.1L1427.0 329.2Z" fill="url(#q106)" style="mix-blend-mode:screen;mix-blend-mode:plus-lighter"/><path d="M1458.1 391.8L1427.0 329.2L1429.9 375.3Z" fill="url(#q107)" style="mix-blend-mode:screen;mix-blend-mode:plus-lighter"/><path d="M1458.1 391.8L1427.0 329.2L1429.9 375.3Z" fill="url(#q108)" style="mix-blend-mode:screen;mix-blend-mode:plus-lighter"/><path d="M1438.9 517.2L1427.0 329.2L1356.1 517.4Z" fill="#00ff00" style="mix-blend-mode:screen;mix-blend-mode:plus-lighter"/><path d="M1438.9 517.2L1437.6 495.9L1434.9 503.0Z" fill="url(#q109)" style="mix-blend-mode:screen;mix-blend-mode:plus-lighter"/><path d="M1438.9 517.2L1437.6 495.9L1434.9 503.0Z" fill="url(#q110)" style="mix-blend-mode:screen;mix-blend-mode:plus-lighter"/><path d="M1438.9 517.2L1434.9 503.0L1432.2 510.1Z" fill="url(#q111)" style="mix-blend-mode:screen;mix-blend-mode:plus-lighter"/><path d="M1438.9 517.2L1434.9 503.0L1432.2 510.1Z" fill="url(#q112)" style="mix-blend-mode:screen;mix-blend-mode:plus-lighter"/><path d="M1438.9 517.2L1432.2 510.1L1429.6 517.2Z" fill="url(#q113)" style="mix-blend-mode:screen;mix-blend-mode:plus-lighter"/><path d="M1438.9 517.2L1432.2 510.1L1429.6 517.2Z" fill="url(#q114)" style="mix-blend-mode:screen;mix-blend-mode:plus-lighter"/><path d="M1437.6 495.9L1435.6 464.0L1428.9 481.7Z" fill="url(#q115)" style="mix-blend-mode:screen;mix-blend-mode:plus-lighter"/><path d="M1437.6 495.9L1435.6 464.0L1428.9 481.7Z" fill="url(#q116)" style="mix-blend-mode:screen;mix-blend-mode:plus-lighter"/><path d="M1437.6 495.9L1428.9 481.7L1434.9 503.0Z" fill="url(#q117)" style="mix-blend-mode:screen;mix-blend-mode:plus-lighter"/><path d="M1437.6 495.9L1428.9 481.7L1434.9 503.0Z" fill="url(#q118)" style="mix-blend-mode:screen;mix-blend-mode:plus-lighter"/><path d="M1434.9 503.0L1428.9 481.7L1422.2 499.5Z" fill="url(#q119)" style="mix-blend-mode:screen;mix-blend-mode:plus-lighter"/><path d="M1434.9 503.0L1428.9 481.7L1422.2 499.5Z" fill="url(#q120)" style="mix-blend-mode:screen;mix-blend-mode:plus-lighter"/><path d="M1434.9 503.0L1422.2 499.5L1432.2 510.1Z" fill="url(#q121)" style="mix-blend-mode:screen;mix-blend-mode:plus-lighter"/><path d="M1434.9 503.0L1422.2 499.5L1432.2 510.1Z" fill="url(#q122)" style="mix-blend-mode:screen;mix-blend-mode:plus-lighter"/><path d="M1432.2 510.1L1422.2 499.5L1415.5 517.2Z" fill="url(#q123)" style="mix-blend-mode:screen;mix-blend-mode:plus-lighter"/><path d="M1432.2 510.1L1422.2 499.5L1415.5 517.2Z" fill="url(#q124)" style="mix-blend-mode:screen;mix-blend-mode:plus-lighter"/><path d="M1432.2 510.1L1415.5 517.2L1429.6 517.2Z" fill="url(#q125)" style="mix-blend-mode:screen;mix-blend-mode:plus-lighter"/><path d="M1432.2 510.1L1415.5 517.2L1429.6 517.2Z" fill="url(#q126)" style="mix-blend-mode:screen;mix-blend-mode:plus-lighter"/><path d="M1435.6 464.0L1432.7 419.6L1420.5 452.2Z" fill="url(#q127)" style="mix-blend-mode:screen;mix-blend-mode:plus-lighter"/><path d="M1435.6 464.0L1432.7 419.6L1420.5 452.2Z" fill="url(#q128)" style="mix-blend-mode:screen;mix-blend-mode:plus-lighter"/><path d="M1435.6 464.0L1420.5 452.2L1428.9 481.7Z" fill="url(#q129)" style="mix-blend-mode:screen;mix-blend-mode:plus-lighter"/><path d="M1435.6 464.0L1420.5 452.2L1428.9 481.7Z" fill="url(#q130)" style="mix-blend-mode:screen;mix-blend-mode:plus-lighter"/><path d="M1428.9 481.7L1420.5 452.2L1408.2 484.7Z" fill="url(#q131)" style="mix-blend-mode:screen;mix-blend-mode:plus-lighter"/><path d="M1428.9 481.7L1420.5 452.2L1408.2 484.7Z" fill="url(#q132)" style="mix-blend-mode:screen;mix-blend-mode:plus-lighter"/><path d="M1428.9 481.7L1408.2 484.7L1422.2 499.5Z" fill="url(#q133)" style="mix-blend-mode:screen;mix-blend-mode:plus-lighter"/><path d="M1428.9 481.7L1408.2 484.7L1422.2 499.5Z" fill="url(#q134)" style="mix-blend-mode:screen;mix-blend-mode:plus-lighter"/><path d="M1422.2 499.5L1408.2 484.7L1396.0 517.3Z" fill="url(#q135)" style="mix-blend-mode:screen;mix-blend-mode:plus-lighter"/><path d="M1422.2 499.5L1408.2 484.7L1396.0 517.3Z" fill="url(#q136)" style="mix-blend-mode:screen;mix-blend-mode:plus-lighter"/><path d="M1422.2 499.5L1396.0 517.3L1415.5 517.2Z" fill="url(#q137)" style="mix-blend-mode:screen;mix-blend-mode:plus-lighter"/><path d="M1422.2 499.5L1396.0 517.3L1415.5 517.2Z" fill="url(#q138)" style="mix-blend-mode:screen;mix-blend-mode:plus-lighter"/><path d="M1432.7 419.6L1429.9 375.3L1412.1 422.6Z" fill="url(#q139)" style="mix-blend-mode:screen;mix-blend-mode:plus-lighter"/><path d="M1432.7 419.6L1429.9 375.3L1412.1 422.6Z" fill="url(#q140)" style="mix-blend-mode:screen;mix-blend-mode:plus-lighter"/><path d="M1432.7 419.6L1412.1 422.6L1420.5 452.2Z" fill="url(#q141)" style="mix-blend-mode:screen;mix-blend-mode:plus-lighter"/><path d="M1432.7 419.6L1412.1 422.6L1420.5 452.2Z" fill="url(#q142)" style="mix-blend-mode:screen;mix-blend-mode:plus-lighter"/><path d="M1420.5 452.2L1412.1 422.6L1394.3 470.0Z" fill="url(#q143)" style="mix-blend-mode:screen;mix-blend-mode:plus-lighter"/><path d="M1420.5 452.2L1412.1 422.6L1394.3 470.0Z" fill="url(#q144)" style="mix-blend-mode:screen;mix-blend-mode:plus-lighter"/><path d="M1420.5 452.2L1394.3 470.0L1408.2 484.7Z" fill="url(#q145)" style="mix-blend-mode:screen;mix-blend-mode:plus-lighter"/><path d="M1420.5 452.2L1394.3 470.0L1408.2 484.7Z" fill="url(#q146)" style="mix-blend-mode:screen;mix-blend-mode:plus-lighter"/><path d="M1408.2 484.7L1394.3 470.0L1376.5 517.3Z" fill="url(#q147)" style="mix-blend-mode:screen;mix-blend-mode:plus-lighter"/><path d="M1408.2 484.7L1394.3 470.0L1376.5 517.3Z" fill="url(#q148)" style="mix-blend-mode:screen;mix-blend-mode:plus-lighter"/><path d="M1408.2 484.7L1376.5 517.3L1396.0 517.3Z" fill="url(#q149)" style="mix-blend-mode:screen;mix-blend-mode:plus-lighter"/><path d="M1408.2 484.7L1376.5 517.3L1396.0 517.3Z" fill="url(#q150)" style="mix-blend-mode:screen;mix-blend-mode:plus-lighter"/><path d="M1429.9 375.3L1427.0 329.2L1403.4 391.9Z" fill="url(#q151)" style="mix-blend-mode:screen;mix-blend-mode:plus-lighter"/><path d="M1429.9 375.3L1427.0 329.2L1403.4 391.9Z" fill="url(#q152)" style="mix-blend-mode:screen;mix-blend-mode:plus-lighter"/><path d="M1429.9 375.3L1403.4 391.9L1412.1 422.6Z" fill="url(#q153)" style="mix-blend-mode:screen;mix-blend-mode:plus-lighter"/><path d="M1429.9 375.3L1403.4 391.9L1412.1 422.6Z" fill="url(#q154)" style="mix-blend-mode:screen;mix-blend-mode:plus-lighter"/><path d="M1412.1 422.6L1403.4 391.9L1379.8 454.6Z" fill="url(#q155)" style="mix-blend-mode:screen;mix-blend-mode:plus-lighter"/><path d="M1412.1 422.6L1403.4 391.9L1379.8 454.6Z" fill="url(#q156)" style="mix-blend-mode:screen;mix-blend-mode:plus-lighter"/><path d="M1412.1 422.6L1379.8 454.6L1394.3 470.0Z" fill="url(#q157)" style="mix-blend-mode:screen;mix-blend-mode:plus-lighter"/><path d="M1412.1 422.6L1379.8 454.6L1394.3 470.0Z" fill="url(#q158)" style="mix-blend-mode:screen;mix-blend-mode:plus-lighter"/><path d="M1394.3 470.0L1379.8 454.6L1356.1 517.4Z" fill="url(#q159)" style="mix-blend-mode:screen;mix-blend-mode:plus-lighter"/><path d="M1394.3 470.0L1379.8 454.6L1356.1 517.4Z" fill="url(#q160)" style="mix-blend-mode:screen;mix-blend-mode:plus-lighter"/><path d="M1394.3 470.0L1356.1 517.4L1376.5 517.3Z" fill="url(#q161)" style="mix-blend-mode:screen;mix-blend-mode:plus-lighter"/><path d="M1394.3 470.0L1356.1 517.4L1376.5 517.3Z" fill="url(#q162)" style="mix-blend-mode:screen;mix-blend-mode:plus-lighter"/><path d="M1438.9 517.2L1356.1 517.4L1286.0 703.8Z" fill="#0000ff" style="mix-blend-mode:screen;mix-blend-mode:plus-lighter"/><path d="M1438.9 517.2L1429.6 517.2L1426.9 524.2Z" fill="url(#q163)" style="mix-blend-mode:screen;mix-blend-mode:plus-lighter"/><path d="M1438.9 517.2L1429.6 517.2L1426.9 524.2Z" fill="url(#q164)" style="mix-blend-mode:screen;mix-blend-mode:plus-lighter"/><path d="M1438.9 517.2L1426.9 524.2L1424.3 531.3Z" fill="url(#q165)" style="mix-blend-mode:screen;mix-blend-mode:plus-lighter"/><path d="M1438.9 517.2L1426.9 524.2L1424.3 531.3Z" fill="url(#q166)" style="mix-blend-mode:screen;mix-blend-mode:plus-lighter"/><path d="M1438.9 517.2L1424.3 531.3L1421.6 538.3Z" fill="url(#q167)" style="mix-blend-mode:screen;mix-blend-mode:plus-lighter"/><path d="M1438.9 517.2L1424.3 531.3L1421.6 538.3Z" fill="url(#q168)" style="mix-blend-mode:screen;mix-blend-mode:plus-lighter"/><path d="M1429.6 517.2L1415.5 517.2L1408.9 534.8Z" fill="url(#q169)" style="mix-blend-mode:screen;mix-blend-mode:plus-lighter"/><path d="M1429.6 517.2L1415.5 517.2L1408.9 534.8Z" fill="url(#q170)" style="mix-blend-mode:screen;mix-blend-mode:plus-lighter"/><path d="M1429.6 517.2L1408.9 534.8L1426.9 524.2Z" fill="url(#q171)" style="mix-blend-mode:screen;mix-blend-mode:plus-lighter"/><path d="M1429.6 517.2L1408.9 534.8L1426.9 524.2Z" fill="url(#q172)" style="mix-blend-mode:screen;mix-blend-mode:plus-lighter"/><path d="M1426.9 524.2L1408.9 534.8L1402.3 552.4Z" fill="url(#q173)" style="mix-blend-mode:screen;mix-blend-mode:plus-lighter"/><path d="M1426.9 524.2L1408.9 534.8L1402.3 552.4Z" fill="url(#q174)" style="mix-blend-mode:screen;mix-blend-mode:plus-lighter"/><path d="M1426.9 524.2L1402.3 552.4L1424.3 531.3Z" fill="url(#q175)" style="mix-blend-mode:screen;mix-blend-mode:plus-lighter"/><path d="M1426.9 524.2L1402.3 552.4L1424.3 531.3Z" fill="url(#q176)" style="mix-blend-mode:screen;mix-blend-mode:plus-lighter"/><path d="M1424.3 531.3L1402.3 552.4L1395.7 570.0Z" fill="url(#q177)" style="mix-blend-mode:screen;mix-blend-mode:plus-lighter"/><path d="M1424.3 531.3L1402.3 552.4L1395.7 570.0Z" fill="url(#q178)" style="mix-blend-mode:screen;mix-blend-mode:plus-lighter"/><path d="M1424.3 531.3L1395.7 570.0L1421.6 538.3Z" fill="url(#q179)" style="mix-blend-mode:screen;mix-blend-mode:plus-lighter"/><path d="M1424.3 531.3L1395.7 570.0L1421.6 538.3Z" fill="url(#q180)" style="mix-blend-mode:screen;mix-blend-mode:plus-lighter"/><path d="M1415.5 517.2L1396.0 517.3L1383.9 549.5Z" fill="url(#q181)" style="mix-blend-mode:screen;mix-blend-mode:plus-lighter"/><path d="M1415.5 517.2L1396.0 517.3L1383.9 549.5Z" fill="url(#q182)" style="mix-blend-mode:screen;mix-blend-mode:plus-lighter"/><path d="M1415.5 517.2L1383.9 549.5L1408.9 534.8Z" fill="url(#q183)" style="mix-blend-mode:screen;mix-blend-mode:plus-lighter"/><path d="M1415.5 517.2L1383.9 549.5L1408.9 534.8Z" fill="url(#q184)" style="mix-blend-mode:screen;mix-blend-mode:plus-lighter"/><path d="M1408.9 534.8L1383.9 549.5L1371.7 581.8Z" fill="url(#q185)" style="mix-blend-mode:screen;mix-blend-mode:plus-lighter"/><path d="M1408.9 534.8L1383.9 549.5L1371.7 581.8Z" fill="url(#q186)" style="mix-blend-mode:screen;mix-blend-mode:plus-lighter"/><path d="M1408.9 534.8L1371.7 581.8L1402.3 552.4Z" fill="url(#q187)" style="mix-blend-mode:screen;mix-blend-mode:plus-lighter"/><path d="M1408.9 534.8L1371.7 581.8L1402.3 552.4Z" fill="url(#q188)" style="mix-blend-mode:screen;mix-blend-mode:plus-lighter"/><path d="M1402.3 552.4L1371.7 581.8L1359.6 614.0Z" fill="url(#q189)" style="mix-blend-mode:screen;mix-blend-mode:plus-lighter"/><path d="M1402.3 552.4L1371.7 581.8L1359.6 614.0Z" fill="url(#q190)" style="mix-blend-mode:screen;mix-blend-mode:plus-lighter"/><path d="M1402.3 552.4L1359.6 614.0L1395.7 570.0Z" fill="url(#q191)" style="mix-blend-mode:screen;mix-blend-mode:plus-lighter"/><path d="M1402.3 552.4L1359.6 614.0L1395.7 570.0Z" fill="url(#q192)" style="mix-blend-mode:screen;mix-blend-mode:plus-lighter"/><path d="M1396.0 517.3L1376.5 517.3L1358.8 564.2Z" fill="url(#q193)" style="mix-blend-mode:screen;mix-blend-mode:plus-lighter"/><path d="M1396.0 517.3L1376.5 517.3L1358.8 564.2Z" fill="url(#q194)" style="mix-blend-mode:screen;mix-blend-mode:plus-lighter"/><path d="M1396.0 517.3L1358.8 564.2L1383.9 549.5Z" fill="url(#q195)" style="mix-blend-mode:screen;mix-blend-mode:plus-lighter"/><path d="M1396.0 517.3L1358.8 564.2L1383.9 549.5Z" fill="url(#q196)" style="mix-blend-mode:screen;mix-blend-mode:plus-lighter"/><path d="M1383.9 549.5L1358.8 564.2L1341.2 611.1Z" fill="url(#q197)" style="mix-blend-mode:screen;mix-blend-mode:plus-lighter"/><path d="M1383.9 549.5L1358.8 564.2L1341.2 611.1Z" fill="url(#q198)" style="mix-blend-mode:screen;mix-blend-mode:plus-lighter"/><path d="M1383.9 549.5L1341.2 611.1L1371.7 581.8Z" fill="url(#q199)" style="mix-blend-mode:screen;mix-blend-mode:plus-lighter"/><path d="M1383.9 549.5L1341.2 611.1L1371.7 581.8Z" fill="url(#q200)" style="mix-blend-mode:screen;mix-blend-mode:plus-lighter"/><path d="M1371.7 581.8L1341.2 611.1L1323.5 658.0Z" fill="url(#q201)" style="mix-blend-mode:screen;mix-blend-mode:plus-lighter"/><path d="M1371.7 581.8L1341.2 611.1L1323.5 658.0Z" fill="url(#q202)" style="mix-blend-mode:screen;mix-blend-mode:plus-lighter"/><path d="M1371.7 581.8L1323.5 658.0L1359.6 614.0Z" fill="url(#q203)" style="mix-blend-mode:screen;mix-blend-mode:plus-lighter"/><path d="M1371.7 581.8L1323.5 658.0L1359.6 614.0Z" fill="url(#q204)" style="mix-blend-mode:screen;mix-blend-mode:plus-lighter"/><path d="M1376.5 517.3L1356.1 517.4L1332.8 579.5Z" fill="url(#q205)" style="mix-blend-mode:screen;mix-blend-mode:plus-lighter"/><path d="M1376.5 517.3L1356.1 517.4L1332.8 579.5Z" fill="url(#q206)" style="mix-blend-mode:screen;mix-blend-mode:plus-lighter"/><path d="M1376.5 517.3L1332.8 579.5L1358.8 564.2Z" fill="url(#q207)" style="mix-blend-mode:screen;mix-blend-mode:plus-lighter"/><path d="M1376.5 517.3L1332.8 579.5L1358.8 564.2Z" fill="url(#q208)" style="mix-blend-mode:screen;mix-blend-mode:plus-lighter"/><path d="M1358.8 564.2L1332.8 579.5L1309.4 641.7Z" fill="url(#q209)" style="mix-blend-mode:screen;mix-blend-mode:plus-lighter"/><path d="M1358.8 564.2L1332.8 579.5L1309.4 641.7Z" fill="url(#q210)" style="mix-blend-mode:screen;mix-blend-mode:plus-lighter"/><path d="M1358.8 564.2L1309.4 641.7L1341.2 611.1Z" fill="url(#q211)" style="mix-blend-mode:screen;mix-blend-mode:plus-lighter"/><path d="M1358.8 564.2L1309.4 641.7L1341.2 611.1Z" fill="url(#q212)" style="mix-blend-mode:screen;mix-blend-mode:plus-lighter"/><path d="M1341.2 611.1L1309.4 641.7L1286.0 703.8Z" fill="url(#q213)" style="mix-blend-mode:screen;mix-blend-mode:plus-lighter"/><path d="M1341.2 611.1L1309.4 641.7L1286.0 703.8Z" fill="url(#q214)" style="mix-blend-mode:screen;mix-blend-mode:plus-lighter"/><path d="M1341.2 611.1L1286.0 703.8L1323.5 658.0Z" fill="url(#q215)" style="mix-blend-mode:screen;mix-blend-mode:plus-lighter"/><path d="M1341.2 611.1L1286.0 703.8L1323.5 658.0Z" fill="url(#q216)" style="mix-blend-mode:screen;mix-blend-mode:plus-lighter"/><path d="M1438.9 517.2L1286.0 703.8L1446.6 638.4Z" fill="#0000ff" style="mix-blend-mode:screen;mix-blend-mode:plus-lighter"/><path d="M1438.9 517.2L1421.6 538.3L1427.7 535.8Z" fill="url(#q217)" style="mix-blend-mode:screen;mix-blend-mode:plus-lighter"/><path d="M1438.9 517.2L1421.6 538.3L1427.7 535.8Z" fill="url(#q218)" style="mix-blend-mode:screen;mix-blend-mode:plus-lighter"/><path d="M1438.9 517.2L1427.7 535.8L1433.8 533.4Z" fill="url(#q219)" style="mix-blend-mode:screen;mix-blend-mode:plus-lighter"/><path d="M1438.9 517.2L1427.7 535.8L1433.8 533.4Z" fill="url(#q220)" style="mix-blend-mode:screen;mix-blend-mode:plus-lighter"/><path d="M1438.9 517.2L1433.8 533.4L1439.8 530.9Z" fill="url(#q221)" style="mix-blend-mode:screen;mix-blend-mode:plus-lighter"/><path d="M1438.9 517.2L1433.8 533.4L1439.8 530.9Z" fill="url(#q222)" style="mix-blend-mode:screen;mix-blend-mode:plus-lighter"/><path d="M1421.6 538.3L1395.7 570.0L1410.8 563.8Z" fill="url(#q223)" style="mix-blend-mode:screen;mix-blend-mode:plus-lighter"/><path d="M1421.6 538.3L1395.7 570.0L1410.8 563.8Z" fill="url(#q224)" style="mix-blend-mode:screen;mix-blend-mode:plus-lighter"/><path d="M1421.6 538.3L1410.8 563.8L1427.7 535.8Z" fill="url(#q225)" style="mix-blend-mode:screen;mix-blend-mode:plus-lighter"/><path d="M1421.6 538.3L1410.8 563.8L1427.7 535.8Z" fill="url(#q226)" style="mix-blend-mode:screen;mix-blend-mode:plus-lighter"/><path d="M1427.7 535.8L1410.8 563.8L1426.0 557.7Z" fill="url(#q227)" style="mix-blend-mode:screen;mix-blend-mode:plus-lighter"/><path d="M1427.7 535.8L1410.8 563.8L1426.0 557.7Z" fill="url(#q228)" style="mix-blend-mode:screen;mix-blend-mode:plus-lighter"/><path d="M1427.7 535.8L1426.0 557.7L1433.8 533.4Z" fill="url(#q229)" style="mix-blend-mode:screen;mix-blend-mode:plus-lighter"/><path d="M1427.7 535.8L1426.0 557.7L1433.8 533.4Z" fill="url(#q230)" style="mix-blend-mode:screen;mix-blend-mode:plus-lighter"/><path d="M1433.8 533.4L1426.0 557.7L1441.1 551.5Z" fill="url(#q231)" style="mix-blend-mode:screen;mix-blend-mode:plus-lighter"/><path d="M1433.8 533.4L1426.0 557.7L1441.1 551.5Z" fill="url(#q232)" style="mix-blend-mode:screen;mix-blend-mode:plus-lighter"/><path d="M1433.8 533.4L1441.1 551.5L1439.8 530.9Z" fill="url(#q233)" style="mix-blend-mode:screen;mix-blend-mode:plus-lighter"/><path d="M1433.8 533.4L1441.1 551.5L1439.8 530.9Z" fill="url(#q234)" style="mix-blend-mode:screen;mix-blend-mode:plus-lighter"/><path d="M1395.7 570.0L1359.6 614.0L1387.4 602.7Z" fill="url(#q235)" style="mix-blend-mode:screen;mix-blend-mode:plus-lighter"/><path d="M1395.7 570.0L1359.6 614.0L1387.4 602.7Z" fill="url(#q236)" style="mix-blend-mode:screen;mix-blend-mode:plus-lighter"/><path d="M1395.7 570.0L1387.4 602.7L1410.8 563.8Z" fill="url(#q237)" style="mix-blend-mode:screen;mix-blend-mode:plus-lighter"/><path d="M1395.7 570.0L1387.4 602.7L1410.8 563.8Z" fill="url(#q238)" style="mix-blend-mode:screen;mix-blend-mode:plus-lighter"/><path d="M1410.8 563.8L1387.4 602.7L1415.2 591.4Z" fill="url(#q239)" style="mix-blend-mode:screen;mix-blend-mode:plus-lighter"/><path d="M1410.8 563.8L1387.4 602.7L1415.2 591.4Z" fill="url(#q240)" style="mix-blend-mode:screen;mix-blend-mode:plus-lighter"/><path d="M1410.8 563.8L1415.2 591.4L1426.0 557.7Z" fill="url(#q241)" style="mix-blend-mode:screen;mix-blend-mode:plus-lighter"/><path d="M1410.8 563.8L1415.2 591.4L1426.0 557.7Z" fill="url(#q242)" style="mix-blend-mode:screen;mix-blend-mode:plus-lighter"/><path d="M1426.0 557.7L1415.2 591.4L1442.9 580.1Z" fill="url(#q243)" style="mix-blend-mode:screen;mix-blend-mode:plus-lighter"/><path d="M1426.0 557.7L1415.2 591.4L1442.9 580.1Z" fill="url(#q244)" style="mix-blend-mode:screen;mix-blend-mode:plus-lighter"/><path d="M1426.0 557.7L1442.9 580.1L1441.1 551.5Z" fill="url(#q245)" style="mix-blend-mode:screen;mix-blend-mode:plus-lighter"/><path d="M1426.0 557.7L1442.9 580.1L1441.1 551.5Z" fill="url(#q246)" style="mix-blend-mode:screen;mix-blend-mode:plus-lighter"/><path d="M1359.6 614.0L1323.5 658.0L1363.9 641.6Z" fill="url(#q247)" style="mix-blend-mode:screen;mix-blend-mode:plus-lighter"/><path d="M1359.6 614.0L1323.5 658.0L1363.9 641.6Z" fill="url(#q248)" style="mix-blend-mode:screen;mix-blend-mode:plus-lighter"/><path d="M1359.6 614.0L1363.9 641.6L1387.4 602.7Z" fill="url(#q249)" style="mix-blend-mode:screen;mix-blend-mode:plus-lighter"/><path d="M1359.6 614.0L1363.9 641.6L1387.4 602.7Z" fill="url(#q250)" style="mix-blend-mode:screen;mix-blend-mode:plus-lighter"/><path d="M1387.4 602.7L1363.9 641.6L1404.4 625.1Z" fill="url(#q251)" style="mix-blend-mode:screen;mix-blend-mode:plus-lighter"/><path d="M1387.4 602.7L1363.9 641.6L1404.4 625.1Z" fill="url(#q252)" style="mix-blend-mode:screen;mix-blend-mode:plus-lighter"/><path d="M1387.4 602.7L1404.4 625.1L1415.2 591.4Z" fill="url(#q253)" style="mix-blend-mode:screen;mix-blend-mode:plus-lighter"/><path d="M1387.4 602.7L1404.4 625.1L1415.2 591.4Z" fill="url(#q254)" style="mix-blend-mode:screen;mix-blend-mode:plus-lighter"/><path d="M1415.2 591.4L1404.4 625.1L1444.8 608.7Z" fill="url(#q255)" style="mix-blend-mode:screen;mix-blend-mode:plus-lighter"/><path d="M1415.2 591.4L1404.4 625.1L1444.8 608.7Z" fill="url(#q256)" style="mix-blend-mode:screen;mix-blend-mode:plus-lighter"/><path d="M1415.2 591.4L1444.8 608.7L1442.9 580.1Z" fill="url(#q257)" style="mix-blend-mode:screen;mix-blend-mode:plus-lighter"/><path d="M1415.2 591.4L1444.8 608.7L1442.9 580.1Z" fill="url(#q258)" style="mix-blend-mode:screen;mix-blend-mode:plus-lighter"/><path d="M1323.5 658.0L1286.0 703.8L1339.6 682.0Z" fill="url(#q259)" style="mix-blend-mode:screen;mix-blend-mode:plus-lighter"/><path d="M1323.5 658.0L1286.0 703.8L1339.6 682.0Z" fill="url(#q260)" style="mix-blend-mode:screen;mix-blend-mode:plus-lighter"/><path d="M1323.5 658.0L1339.6 682.0L1363.9 641.6Z" fill="url(#q261)" style="mix-blend-mode:screen;mix-blend-mode:plus-lighter"/><path d="M1323.5 658.0L1339.6 682.0L1363.9 641.6Z" fill="url(#q262)" style="mix-blend-mode:screen;mix-blend-mode:plus-lighter"/><path d="M1363.9 641.6L1339.6 682.0L1393.1 660.2Z" fill="url(#q263)" style="mix-blend-mode:screen;mix-blend-mode:plus-lighter"/><path d="M1363.9 641.6L1339.6 682.0L1393.1 660.2Z" fill="url(#q264)" style="mix-blend-mode:screen;mix-blend-mode:plus-lighter"/><path d="M1363.9 641.6L1393.1 660.2L1404.4 625.1Z" fill="url(#q265)" style="mix-blend-mode:screen;mix-blend-mode:plus-lighter"/><path d="M1363.9 641.6L1393.1 660.2L1404.4 625.1Z" fill="url(#q266)" style="mix-blend-mode:screen;mix-blend-mode:plus-lighter"/><path d="M1404.4 625.1L1393.1 660.2L1446.6 638.4Z" fill="url(#q267)" style="mix-blend-mode:screen;mix-blend-mode:plus-lighter"/><path d="M1404.4 625.1L1393.1 660.2L1446.6 638.4Z" fill="url(#q268)" style="mix-blend-mode:screen;mix-blend-mode:plus-lighter"/><path d="M1404.4 625.1L1446.6 638.4L1444.8 608.7Z" fill="url(#q269)" style="mix-blend-mode:screen;mix-blend-mode:plus-lighter"/><path d="M1404.4 625.1L1446.6 638.4L1444.8 608.7Z" fill="url(#q270)" style="mix-blend-mode:screen;mix-blend-mode:plus-lighter"/><path d="M1438.9 517.2L1446.6 638.4L1746.5 516.5Z" fill="#ff0000" style="mix-blend-mode:screen;mix-blend-mode:plus-lighter"/><path d="M1438.9 517.2L1439.8 530.9L1451.1 526.3Z" fill="url(#q271)" style="mix-blend-mode:screen;mix-blend-mode:plus-lighter"/><path d="M1438.9 517.2L1439.8 530.9L1451.1 526.3Z" fill="url(#q272)" style="mix-blend-mode:screen;mix-blend-mode:plus-lighter"/><path d="M1438.9 517.2L1451.1 526.3L1462.4 521.7Z" fill="url(#q273)" style="mix-blend-mode:screen;mix-blend-mode:plus-lighter"/><path d="M1438.9 517.2L1451.1 526.3L1462.4 521.7Z" fill="url(#q274)" style="mix-blend-mode:screen;mix-blend-mode:plus-lighter"/><path d="M1438.9 517.2L1462.4 521.7L1473.8 517.1Z" fill="url(#q275)" style="mix-blend-mode:screen;mix-blend-mode:plus-lighter"/><path d="M1438.9 517.2L1462.4 521.7L1473.8 517.1Z" fill="url(#q276)" style="mix-blend-mode:screen;mix-blend-mode:plus-lighter"/><path d="M1439.8 530.9L1441.1 551.5L1469.4 540.0Z" fill="url(#q277)" style="mix-blend-mode:screen;mix-blend-mode:plus-lighter"/><path d="M1439.8 530.9L1441.1 551.5L1469.4 540.0Z" fill="url(#q278)" style="mix-blend-mode:screen;mix-blend-mode:plus-lighter"/><path d="M1439.8 530.9L1469.4 540.0L1451.1 526.3Z" fill="url(#q279)" style="mix-blend-mode:screen;mix-blend-mode:plus-lighter"/><path d="M1439.8 530.9L1469.4 540.0L1451.1 526.3Z" fill="url(#q280)" style="mix-blend-mode:screen;mix-blend-mode:plus-lighter"/><path d="M1451.1 526.3L1469.4 540.0L1497.7 528.5Z" fill="url(#q281)" style="mix-blend-mode:screen;mix-blend-mode:plus-lighter"/><path d="M1451.1 526.3L1469.4 540.0L1497.7 528.5Z" fill="url(#q282)" style="mix-blend-mode:screen;mix-blend-mode:plus-lighter"/><path d="M1451.1 526.3L1497.7 528.5L1462.4 521.7Z" fill="url(#q283)" style="mix-blend-mode:screen;mix-blend-mode:plus-lighter"/><path d="M1451.1 526.3L1497.7 528.5L1462.4 521.7Z" fill="url(#q284)" style="mix-blend-mode:screen;mix-blend-mode:plus-lighter"/><path d="M1462.4 521.7L1497.7 528.5L1526.0 517.0Z" fill="url(#q285)" style="mix-blend-mode:screen;mix-blend-mode:plus-lighter"/><path d="M1462.4 521.7L1497.7 528.5L1526.0 517.0Z" fill="url(#q286)" style="mix-blend-mode:screen;mix-blend-mode:plus-lighter"/><path d="M1462.4 521.7L1526.0 517.0L1473.8 517.1Z" fill="url(#q287)" style="mix-blend-mode:screen;mix-blend-mode:plus-lighter"/><path d="M1462.4 521.7L1526.0 517.0L1473.8 517.1Z" fill="url(#q288)" style="mix-blend-mode:screen;mix-blend-mode:plus-lighter"/><path d="M1441.1 551.5L1442.9 580.1L1494.8 559.0Z" fill="url(#q289)" style="mix-blend-mode:screen;mix-blend-mode:plus-lighter"/><path d="M1441.1 551.5L1442.9 580.1L1494.8 559.0Z" fill="url(#q290)" style="mix-blend-mode:screen;mix-blend-mode:plus-lighter"/><path d="M1441.1 551.5L1494.8 559.0L1469.4 540.0Z" fill="url(#q291)" style="mix-blend-mode:screen;mix-blend-mode:plus-lighter"/><path d="M1441.1 551.5L1494.8 559.0L1469.4 540.0Z" fill="url(#q292)" style="mix-blend-mode:screen;mix-blend-mode:plus-lighter"/><path d="M1469.4 540.0L1494.8 559.0L1546.7 537.9Z" fill="url(#q293)" style="mix-blend-mode:screen;mix-blend-mode:plus-lighter"/><path d="M1469.4 540.0L1494.8 559.0L1546.7 537.9Z" fill="url(#q294)" style="mix-blend-mode:screen;mix-blend-mode:plus-lighter"/><path d="M1469.4 540.0L1546.7 537.9L1497.7 528.5Z" fill="url(#q295)" style="mix-blend-mode:screen;mix-blend-mode:plus-lighter"/><path d="M1469.4 540.0L1546.7 537.9L1497.7 528.5Z" fill="url(#q296)" style="mix-blend-mode:screen;mix-blend-mode:plus-lighter"/><path d="M1497.7 528.5L1546.7 537.9L1598.5 516.8Z" fill="url(#q297)" style="mix-blend-mode:screen;mix-blend-mode:plus-lighter"/><path d="M1497.7 528.5L1546.7 537.9L1598.5 516.8Z" fill="url(#q298)" style="mix-blend-mode:screen;mix-blend-mode:plus-lighter"/><path d="M1497.7 528.5L1598.5 516.8L1526.0 517.0Z" fill="url(#q299)" style="mix-blend-mode:screen;mix-blend-mode:plus-lighter"/><path d="M1497.7 528.5L1598.5 516.8L1526.0 517.0Z" fill="url(#q300)" style="mix-blend-mode:screen;mix-blend-mode:plus-lighter"/><path d="M1442.9 580.1L1444.8 608.7L1520.2 578.0Z" fill="url(#q301)" style="mix-blend-mode:screen;mix-blend-mode:plus-lighter"/><path d="M1442.9 580.1L1444.8 608.7L1520.2 578.0Z" fill="url(#q302)" style="mix-blend-mode:screen;mix-blend-mode:plus-lighter"/><path d="M1442.9 580.1L1520.2 578.0L1494.8 559.0Z" fill="url(#q303)" style="mix-blend-mode:screen;mix-blend-mode:plus-lighter"/><path d="M1442.9 580.1L1520.2 578.0L1494.8 559.0Z" fill="url(#q304)" style="mix-blend-mode:screen;mix-blend-mode:plus-lighter"/><path d="M1494.8 559.0L1520.2 578.0L1595.6 547.3Z" fill="url(#q305)" style="mix-blend-mode:screen;mix-blend-mode:plus-lighter"/><path d="M1494.8 559.0L1520.2 578.0L1595.6 547.3Z" fill="url(#q306)" style="mix-blend-mode:screen;mix-blend-mode:plus-lighter"/><path d="M1494.8 559.0L1595.6 547.3L1546.7 537.9Z" fill="url(#q307)" style="mix-blend-mode:screen;mix-blend-mode:plus-lighter"/><path d="M1494.8 559.0L1595.6 547.3L1546.7 537.9Z" fill="url(#q308)" style="mix-blend-mode:screen;mix-blend-mode:plus-lighter"/><path d="M1546.7 537.9L1595.6 547.3L1671.1 516.6Z" fill="url(#q309)" style="mix-blend-mode:screen;mix-blend-mode:plus-lighter"/><path d="M1546.7 537.9L1595.6 547.3L1671.1 516.6Z" fill="url(#q310)" style="mix-blend-mode:screen;mix-blend-mode:plus-lighter"/><path d="M1546.7 537.9L1671.1 516.6L1598.5 516.8Z" fill="url(#q311)" style="mix-blend-mode:screen;mix-blend-mode:plus-lighter"/><path d="M1546.7 537.9L1671.1 516.6L1598.5 516.8Z" fill="url(#q312)" style="mix-blend-mode:screen;mix-blend-mode:plus-lighter"/><path d="M1444.8 608.7L1446.6 638.4L1546.6 597.8Z" fill="url(#q313)" style="mix-blend-mode:screen;mix-blend-mode:plus-lighter"/><path d="M1444.8 608.7L1446.6 638.4L1546.6 597.8Z" fill="url(#q314)" style="mix-blend-mode:screen;mix-blend-mode:plus-lighter"/><path d="M1444.8 608.7L1546.6 597.8L1520.2 578.0Z" fill="url(#q315)" style="mix-blend-mode:screen;mix-blend-mode:plus-lighter"/><path d="M1444.8 608.7L1546.6 597.8L1520.2 578.0Z" fill="url(#q316)" style="mix-blend-mode:screen;mix-blend-mode:plus-lighter"/><path d="M1520.2 578.0L1546.6 597.8L1646.6 557.1Z" fill="url(#q317)" style="mix-blend-mode:screen;mix-blend-mode:plus-lighter"/><path d="M1520.2 578.0L1546.6 597.8L1646.6 557.1Z" fill="url(#q318)" style="mix-blend-mode:screen;mix-blend-mode:plus-lighter"/><path d="M1520.2 578.0L1646.6 557.1L1595.6 547.3Z" fill="url(#q319)" style="mix-blend-mode:screen;mix-blend-mode:plus-lighter"/><path d="M1520.2 578.0L1646.6 557.1L1595.6 547.3Z" fill="url(#q320)" style="mix-blend-mode:screen;mix-blend-mode:plus-lighter"/><path d="M1595.6 547.3L1646.6 557.1L1746.5 516.5Z" fill="url(#q321)" style="mix-blend-mode:screen;mix-blend-mode:plus-lighter"/><path d="M1595.6 547.3L1646.6 557.1L1746.5 516.5Z" fill="url(#q322)" style="mix-blend-mode:screen;mix-blend-mode:plus-lighter"/><path d="M1595.6 547.3L1746.5 516.5L1671.1 516.6Z" fill="url(#q323)" style="mix-blend-mode:screen;mix-blend-mode:plus-lighter"/><path d="M1595.6 547.3L1746.5 516.5L1671.1 516.6Z" fill="url(#q324)" style="mix-blend-mode:screen;mix-blend-mode:plus-lighter"/></g></g></g><path d="M1162 182.5H1907.5V733.5H1161.5V182" fill="none" stroke="#a0a0a0" stroke-width="2"/><rect x="1160.7" y="733" width="2" height="7" fill="#ddd"/><text transform="translate(1161.7,757) scale(1.12,0.93)" font-size="16" fill="#e0e0e0" text-anchor="middle" stroke="#e0e0e0" stroke-width="0.3">0</text><rect x="1155" y="731.5" width="7" height="2" fill="#ddd"/><text transform="translate(1155.5,738.0) scale(1.12,0.93)" font-size="16" fill="#e0e0e0" text-anchor="end" stroke="#e0e0e0" stroke-width="0.3">0</text><rect x="1249.4" y="733" width="2" height="7" fill="#ddd"/><text transform="translate(1250.4,757) scale(1.12,0.93)" font-size="16" fill="#e0e0e0" text-anchor="middle" stroke="#e0e0e0" stroke-width="0.3">0.1</text><rect x="1155" y="666.0" width="7" height="2" fill="#ddd"/><text transform="translate(1155.5,672.5) scale(1.12,0.93)" font-size="16" fill="#e0e0e0" text-anchor="end" stroke="#e0e0e0" stroke-width="0.3">0.1</text><rect x="1338.0" y="733" width="2" height="7" fill="#ddd"/><text transform="translate(1339.0,757) scale(1.12,0.93)" font-size="16" fill="#e0e0e0" text-anchor="middle" stroke="#e0e0e0" stroke-width="0.3">0.2</text><rect x="1155" y="600.6" width="7" height="2" fill="#ddd"/><text transform="translate(1155.5,607.1) scale(1.12,0.93)" font-size="16" fill="#e0e0e0" text-anchor="end" stroke="#e0e0e0" stroke-width="0.3">0.2</text><rect x="1426.7" y="733" width="2" height="7" fill="#ddd"/><text transform="translate(1427.7,757) scale(1.12,0.93)" font-size="16" fill="#e0e0e0" text-anchor="middle" stroke="#e0e0e0" stroke-width="0.3">0.3</text><rect x="1155" y="535.1" width="7" height="2" fill="#ddd"/><text transform="translate(1155.5,541.6) scale(1.12,0.93)" font-size="16" fill="#e0e0e0" text-anchor="end" stroke="#e0e0e0" stroke-width="0.3">0.3</text><rect x="1515.3" y="733" width="2" height="7" fill="#ddd"/><text transform="translate(1516.3,757) scale(1.12,0.93)" font-size="16" fill="#e0e0e0" text-anchor="middle" stroke="#e0e0e0" stroke-width="0.3">0.4</text><rect x="1155" y="469.7" width="7" height="2" fill="#ddd"/><text transform="translate(1155.5,476.2) scale(1.12,0.93)" font-size="16" fill="#e0e0e0" text-anchor="end" stroke="#e0e0e0" stroke-width="0.3">0.4</text><rect x="1604.0" y="733" width="2" height="7" fill="#ddd"/><text transform="translate(1605.0,757) scale(1.12,0.93)" font-size="16" fill="#e0e0e0" text-anchor="middle" stroke="#e0e0e0" stroke-width="0.3">0.5</text><rect x="1155" y="404.2" width="7" height="2" fill="#ddd"/><text transform="translate(1155.5,410.8) scale(1.12,0.93)" font-size="16" fill="#e0e0e0" text-anchor="end" stroke="#e0e0e0" stroke-width="0.3">0.5</text><rect x="1692.7" y="733" width="2" height="7" fill="#ddd"/><text transform="translate(1693.7,757) scale(1.12,0.93)" font-size="16" fill="#e0e0e0" text-anchor="middle" stroke="#e0e0e0" stroke-width="0.3">0.6</text><rect x="1155" y="338.8" width="7" height="2" fill="#ddd"/><text transform="translate(1155.5,345.3) scale(1.12,0.93)" font-size="16" fill="#e0e0e0" text-anchor="end" stroke="#e0e0e0" stroke-width="0.3">0.6</text><rect x="1781.3" y="733" width="2" height="7" fill="#ddd"/><text transform="translate(1782.3,757) scale(1.12,0.93)" font-size="16" fill="#e0e0e0" text-anchor="middle" stroke="#e0e0e0" stroke-width="0.3">0.7</text><rect x="1155" y="273.4" width="7" height="2" fill="#ddd"/><text transform="translate(1155.5,279.9) scale(1.12,0.93)" font-size="16" fill="#e0e0e0" text-anchor="end" stroke="#e0e0e0" stroke-width="0.3">0.7</text><rect x="1870.0" y="733" width="2" height="7" fill="#ddd"/><text transform="translate(1871.0,757) scale(1.12,0.93)" font-size="16" fill="#e0e0e0" text-anchor="middle" stroke="#e0e0e0" stroke-width="0.3">0.8</text><rect x="1155" y="207.9" width="7" height="2" fill="#ddd"/><text transform="translate(1155.5,214.4) scale(1.12,0.93)" font-size="16" fill="#e0e0e0" text-anchor="end" stroke="#e0e0e0" stroke-width="0.3">0.8</text><text x="1519.5" y="176" font-size="16.2" fill="#dcdcdc" text-anchor="middle" stroke="#dcdcdc" stroke-width="0.3">CIE 1931 xy</text><rect x="1431.4" y="509.7" width="15" height="15" fill="none" stroke="#eee" stroke-width="2"/><rect x="1509.1" y="486.6" width="15" height="15" fill="none" stroke="#eee" stroke-width="2"/><rect x="1490.7" y="491.9" width="15" height="15" fill="none" stroke="#eee" stroke-width="2"/><rect x="1375.5" y="551.2" width="15" height="15" fill="none" stroke="#eee" stroke-width="2"/><rect x="1455.2" y="445.5" width="15" height="15" fill="none" stroke="#eee" stroke-width="2"/><rect x="1391.9" y="559.7" width="15" height="15" fill="none" stroke="#eee" stroke-width="2"/><rect x="1387.0" y="488.3" width="15" height="15" fill="none" stroke="#eee" stroke-width="2"/><rect x="1608.3" y="459.1" width="15" height="15" fill="none" stroke="#eee" stroke-width="2"/><rect x="1346.2" y="599.3" width="15" height="15" fill="none" stroke="#eee" stroke-width="2"/><rect x="1563.8" y="518.8" width="15" height="15" fill="none" stroke="#eee" stroke-width="2"/><rect x="1411.3" y="577.7" width="15" height="15" fill="none" stroke="#eee" stroke-width="2"/><rect x="1486.7" y="401.0" width="15" height="15" fill="none" stroke="#eee" stroke-width="2"/><rect x="1575.3" y="435.7" width="15" height="15" fill="none" stroke="#eee" stroke-width="2"/><rect x="1324.4" y="631.4" width="15" height="15" fill="none" stroke="#eee" stroke-width="2"/><rect x="1424.6" y="403.0" width="15" height="15" fill="none" stroke="#eee" stroke-width="2"/><rect x="1631.2" y="516.9" width="15" height="15" fill="none" stroke="#eee" stroke-width="2"/><rect x="1551.4" y="414.1" width="15" height="15" fill="none" stroke="#eee" stroke-width="2"/><rect x="1486.7" y="561.4" width="15" height="15" fill="none" stroke="#eee" stroke-width="2"/><rect x="1338.6" y="547.0" width="15" height="15" fill="none" stroke="#eee" stroke-width="2"/><rect x="1721.6" y="509.0" width="15" height="15" fill="none" stroke="#eee" stroke-width="2"/><rect x="1420.2" y="332.3" width="15" height="15" fill="none" stroke="#eee" stroke-width="2"/><rect x="1287.2" y="685.7" width="15" height="15" fill="none" stroke="#eee" stroke-width="2"/><rect x="1353.7" y="509.7" width="15" height="15" fill="none" stroke="#eee" stroke-width="2"/><rect x="1438.8" y="624.2" width="15" height="15" fill="none" stroke="#eee" stroke-width="2"/><rect x="1525.7" y="394.5" width="15" height="15" fill="none" stroke="#eee" stroke-width="2"/><circle cx="1439.0" cy="521.5" r="5" fill="#bbbbbb" stroke="#111" stroke-width="1.3"/><circle cx="1428.2" cy="550.8" r="5" fill="#000000" stroke="#111" stroke-width="1.3"/><circle cx="1531.7" cy="487.1" r="5" fill="#6a4a3a" stroke="#111" stroke-width="1.3"/><circle cx="1495.1" cy="498.1" r="5" fill="#b89a8c" stroke="#111" stroke-width="1.3"/><circle cx="1384.5" cy="562.5" r="5" fill="#5c6f8a" stroke="#111" stroke-width="1.3"/><circle cx="1476.4" cy="445.1" r="5" fill="#556b47" stroke="#111" stroke-width="1.3"/><circle cx="1401.2" cy="567.8" r="5" fill="#8080a8" stroke="#111" stroke-width="1.3"/><circle cx="1402.1" cy="504.7" r="5" fill="#6aa898" stroke="#111" stroke-width="1.3"/><circle cx="1613.0" cy="452.5" r="5" fill="#d07030" stroke="#111" stroke-width="1.3"/><circle cx="1349.1" cy="614.3" r="5" fill="#4a5aa0" stroke="#111" stroke-width="1.3"/><circle cx="1565.1" cy="517.8" r="5" fill="#c05060" stroke="#111" stroke-width="1.3"/><circle cx="1409.9" cy="595.1" r="5" fill="#604070" stroke="#111" stroke-width="1.3"/><circle cx="1511.9" cy="405.2" r="5" fill="#a0b050" stroke="#111" stroke-width="1.3"/><circle cx="1582.8" cy="432.7" r="5" fill="#e0a040" stroke="#111" stroke-width="1.3"/><circle cx="1323.9" cy="649.4" r="5" fill="#3a4a90" stroke="#111" stroke-width="1.3"/><circle cx="1449.8" cy="408.5" r="5" fill="#4a9050" stroke="#111" stroke-width="1.3"/><circle cx="1640.5" cy="505.4" r="5" fill="#b04050" stroke="#111" stroke-width="1.3"/><circle cx="1562.4" cy="415.1" r="5" fill="#e0c040" stroke="#111" stroke-width="1.3"/><circle cx="1482.6" cy="568.2" r="5" fill="#c060a0" stroke="#111" stroke-width="1.3"/><circle cx="1354.1" cy="561.0" r="5" fill="#208090" stroke="#111" stroke-width="1.3"/><circle cx="1705.2" cy="493.6" r="5" fill="#ff0000" stroke="#111" stroke-width="1.3"/><circle cx="1452.5" cy="346.3" r="5" fill="#00ff00" stroke="#111" stroke-width="1.3"/><circle cx="1294.7" cy="693.2" r="5" fill="#0000ff" stroke="#111" stroke-width="1.3"/><circle cx="1368.3" cy="527.6" r="5" fill="#00ffff" stroke="#111" stroke-width="1.3"/><circle cx="1432.1" cy="622.5" r="5" fill="#ff00ff" stroke="#111" stroke-width="1.3"/><circle cx="1542.1" cy="399.4" r="5" fill="#ffff00" stroke="#111" stroke-width="1.3"/><rect x="1431.4" y="509.7" width="15" height="15" fill="none" stroke="#000" stroke-width="2.5"/><defs><linearGradient id="insA" x1="0" y1="0" x2="1" y2="1"><stop offset="0" stop-color="#6e8c00"/><stop offset="0.5" stop-color="#9a9400"/><stop offset="1" stop-color="#a06800"/></linearGradient><linearGradient id="insB" x1="0" y1="0.3" x2="1" y2="1"><stop offset="0" stop-color="#ccff00"/><stop offset="0.45" stop-color="#ffff00"/><stop offset="1" stop-color="#ffb000"/></linearGradient></defs><rect x="1648" y="188" width="252" height="208" fill="url(#insA)"/><path d="M1649 211.6L1899 374.3V395H1649Z" fill="url(#insB)"/><rect x="1648" y="188.5" width="251.5" height="207.5" fill="none" stroke="#999" stroke-width="2"/><rect x="1764.5" y="284.5" width="15" height="15" fill="none" stroke="#eee" stroke-width="2"/><circle cx="1825.5" cy="282.5" r="4.5" fill="#ffff00" stroke="#111" stroke-width="1.3"/><rect x="1613" y="696.5" width="290" height="30.5" fill="#2e2e2e"/></svg><div class="t" style="left:1613px;top:698.5px;font-size:22px;letter-spacing:0.38px;color:#f4f4f4;line-height:28px">RGB Triplet: 255, 255, 0</div>
<div class="t" style="left:17px;top:806px;font-size:33px;letter-spacing:0.75px;color:#f2f2f2;line-height:40px">Current Reading</div><div class="t" style="left:17px;top:857.0px;font-size:29.5px;color:#f2f2f2;line-height:36px">x: 0.4298</div><div class="t" style="left:17px;top:902.6px;font-size:29.5px;color:#f2f2f2;line-height:36px">y: 0.5076</div><div class="t" style="left:17px;top:948.2px;font-size:29.5px;color:#f2f2f2;line-height:36px">fL: 72.31</div><div class="t" style="left:17px;top:993.8px;font-size:29.5px;color:#f2f2f2;line-height:36px">cd/m<sup style="font-size:18px;vertical-align:11px;line-height:0">2</sup>: 247.77</div><div style="position:absolute;left:371px;top:790px;width:1545.5px;height:250px;overflow:hidden;background:#333"><div style="position:absolute;left:0;top:0;width:1545.5px;height:31px;background:linear-gradient(#2b2b2b 0,#2b2b2b 45%,#141414 55%,#141414 100%)"></div><div style="position:absolute;left:0;top:0;width:19px;height:31px;background:#000"></div><div style="position:absolute;left:19px;top:30.7px;width:1526.5px;height:29.5px;background:#424242"></div><div style="position:absolute;left:0;top:30.7px;width:19px;height:29.5px;background:linear-gradient(90deg,#1e1e1e,#1a1a1a)"></div><div style="position:absolute;left:19px;top:59.8px;width:1526.5px;height:29.5px;background:#7c7c7c"></div><div style="position:absolute;left:0;top:59.8px;width:19px;height:29.5px;background:linear-gradient(90deg,#2a2a2a,#1a1a1a)"></div><div style="position:absolute;left:19px;top:88.8px;width:1526.5px;height:29.5px;background:#424242"></div><div style="position:absolute;left:0;top:88.8px;width:19px;height:29.5px;background:linear-gradient(90deg,#1e1e1e,#1a1a1a)"></div><div style="position:absolute;left:19px;top:117.9px;width:1526.5px;height:29.5px;background:#7c7c7c"></div><div style="position:absolute;left:0;top:117.9px;width:19px;height:29.5px;background:linear-gradient(90deg,#2a2a2a,#1a1a1a)"></div><div style="position:absolute;left:19px;top:146.9px;width:1526.5px;height:29.5px;background:#424242"></div><div style="position:absolute;left:0;top:146.9px;width:19px;height:29.5px;background:linear-gradient(90deg,#1e1e1e,#1a1a1a)"></div><div style="position:absolute;left:19px;top:175.9px;width:1526.5px;height:29.5px;background:#7c7c7c"></div><div style="position:absolute;left:0;top:175.9px;width:19px;height:29.5px;background:linear-gradient(90deg,#2a2a2a,#1a1a1a)"></div><div style="position:absolute;left:19px;top:205.0px;width:1526.5px;height:29.5px;background:#424242"></div><div style="position:absolute;left:0;top:205.0px;width:19px;height:29.5px;background:linear-gradient(90deg,#1e1e1e,#1a1a1a)"></div></div><div style="position:absolute;left:371px;top:790px;width:1545.5px;height:250px;overflow:hidden"><div class="t" style="left:177px;top:5px;font-size:18.3px;font-weight:bold;letter-spacing:0.3px;color:#f0f0f0;line-height:22px">White</div><div class="t" style="left:280px;top:5px;font-size:18.3px;font-weight:bold;letter-spacing:0.3px;color:#f0f0f0;line-height:22px">Gray 80</div><div class="t" style="left:383px;top:5px;font-size:18.3px;font-weight:bold;letter-spacing:0.3px;color:#f0f0f0;line-height:22px">Gray 65</div><div class="t" style="left:486px;top:5px;font-size:18.3px;font-weight:bold;letter-spacing:0.3px;color:#f0f0f0;line-height:22px">Gray 50</div><div class="t" style="left:589px;top:5px;font-size:18.3px;font-weight:bold;letter-spacing:0.3px;color:#f0f0f0;line-height:22px">Gray 35</div><div class="t" style="left:680px;top:5px;font-size:18.3px;font-weight:bold;letter-spacing:0.3px;color:#f0f0f0;line-height:22px">Black</div><div class="t" style="left:759px;top:5px;font-size:18.3px;font-weight:bold;letter-spacing:0.3px;color:#f0f0f0;line-height:22px">Dark Skin</div><div class="t" style="left:856px;top:5px;font-size:18.3px;font-weight:bold;letter-spacing:0.3px;color:#f0f0f0;line-height:22px">Light Skin</div><div class="t" style="left:959px;top:5px;font-size:18.3px;font-weight:bold;letter-spacing:0.3px;color:#f0f0f0;line-height:22px">Blue Sky</div><div class="t" style="left:1050px;top:5px;font-size:18.3px;font-weight:bold;letter-spacing:0.3px;color:#f0f0f0;line-height:22px">Foliage</div><div class="t" style="left:1141px;top:5px;font-size:18.3px;font-weight:bold;letter-spacing:0.3px;color:#f0f0f0;line-height:22px">Blue Flower</div><div class="t" style="left:1260px;top:5px;font-size:18.3px;font-weight:bold;letter-spacing:0.3px;color:#f0f0f0;line-height:22px">Bluish Green</div><div class="t" style="left:1387px;top:5px;font-size:18.3px;font-weight:bold;letter-spacing:0.3px;color:#f0f0f0;line-height:22px">Orange</div><div class="t" style="left:1478px;top:5px;font-size:18.3px;font-weight:bold;letter-spacing:0.3px;color:#f0f0f0;line-height:22px">Purplish</div><div class="t" style="left:25px;top:34.7px;font-size:20px;letter-spacing:0.35px;color:#f2f2f2;line-height:22px">x: CIE31</div><div class="t" style="left:177px;top:34.7px;font-size:20.4px;letter-spacing:0.5px;color:#f2f2f2;line-height:22px">0.3128</div><div class="t" style="left:280px;top:34.7px;font-size:20.4px;letter-spacing:0.5px;color:#f2f2f2;line-height:22px">0.3147</div><div class="t" style="left:383px;top:34.7px;font-size:20.4px;letter-spacing:0.5px;color:#f2f2f2;line-height:22px">0.3151</div><div class="t" style="left:486px;top:34.7px;font-size:20.4px;letter-spacing:0.5px;color:#f2f2f2;line-height:22px">0.3155</div><div class="t" style="left:589px;top:34.7px;font-size:20.4px;letter-spacing:0.5px;color:#f2f2f2;line-height:22px">0.3157</div><div class="t" style="left:680px;top:34.7px;font-size:20.4px;letter-spacing:0.5px;color:#f2f2f2;line-height:22px">0.3006</div><div class="t" style="left:759px;top:34.7px;font-size:20.4px;letter-spacing:0.5px;color:#f2f2f2;line-height:22px">0.4173</div><div class="t" style="left:856px;top:34.7px;font-size:20.4px;letter-spacing:0.5px;color:#f2f2f2;line-height:22px">0.3760</div><div class="t" style="left:959px;top:34.7px;font-size:20.4px;letter-spacing:0.5px;color:#f2f2f2;line-height:22px">0.2513</div><div class="t" style="left:1050px;top:34.7px;font-size:20.4px;letter-spacing:0.5px;color:#f2f2f2;line-height:22px">0.3550</div><div class="t" style="left:1141px;top:34.7px;font-size:20.4px;letter-spacing:0.5px;color:#f2f2f2;line-height:22px">0.2701</div><div class="t" style="left:1260px;top:34.7px;font-size:20.4px;letter-spacing:0.5px;color:#f2f2f2;line-height:22px">0.2712</div><div class="t" style="left:1387px;top:34.7px;font-size:20.4px;letter-spacing:0.5px;color:#f2f2f2;line-height:22px">0.5090</div><div class="t" style="left:1478px;top:34.7px;font-size:20.4px;letter-spacing:0.5px;color:#f2f2f2;line-height:22px">0.2114</div><div class="t" style="left:25px;top:63.8px;font-size:20px;letter-spacing:0.35px;color:#f2f2f2;line-height:22px">y: CIE31</div><div class="t" style="left:177px;top:63.8px;font-size:20.4px;letter-spacing:0.5px;color:#f2f2f2;line-height:22px">0.3224</div><div class="t" style="left:280px;top:63.8px;font-size:20.4px;letter-spacing:0.5px;color:#f2f2f2;line-height:22px">0.3247</div><div class="t" style="left:383px;top:63.8px;font-size:20.4px;letter-spacing:0.5px;color:#f2f2f2;line-height:22px">0.3253</div><div class="t" style="left:486px;top:63.8px;font-size:20.4px;letter-spacing:0.5px;color:#f2f2f2;line-height:22px">0.3256</div><div class="t" style="left:589px;top:63.8px;font-size:20.4px;letter-spacing:0.5px;color:#f2f2f2;line-height:22px">0.3256</div><div class="t" style="left:680px;top:63.8px;font-size:20.4px;letter-spacing:0.5px;color:#f2f2f2;line-height:22px">0.2776</div><div class="t" style="left:759px;top:63.8px;font-size:20.4px;letter-spacing:0.5px;color:#f2f2f2;line-height:22px">0.3749</div><div class="t" style="left:856px;top:63.8px;font-size:20.4px;letter-spacing:0.5px;color:#f2f2f2;line-height:22px">0.3582</div><div class="t" style="left:959px;top:63.8px;font-size:20.4px;letter-spacing:0.5px;color:#f2f2f2;line-height:22px">0.2598</div><div class="t" style="left:1050px;top:63.8px;font-size:20.4px;letter-spacing:0.5px;color:#f2f2f2;line-height:22px">0.4391</div><div class="t" style="left:1141px;top:63.8px;font-size:20.4px;letter-spacing:0.5px;color:#f2f2f2;line-height:22px">0.2516</div><div class="t" style="left:1260px;top:63.8px;font-size:20.4px;letter-spacing:0.5px;color:#f2f2f2;line-height:22px">0.3481</div><div class="t" style="left:1387px;top:63.8px;font-size:20.4px;letter-spacing:0.5px;color:#f2f2f2;line-height:22px">0.4278</div><div class="t" style="left:1478px;top:63.8px;font-size:20.4px;letter-spacing:0.5px;color:#f2f2f2;line-height:22px">0.1806</div><div class="t" style="left:25px;top:92.8px;font-size:20px;letter-spacing:0.35px;color:#f2f2f2;line-height:22px">Y</div><div class="t" style="left:177px;top:92.8px;font-size:20.4px;letter-spacing:0.5px;color:#f2f2f2;line-height:22px">269.5767</div><div class="t" style="left:280px;top:92.8px;font-size:20.4px;letter-spacing:0.5px;color:#f2f2f2;line-height:22px">216.5677</div><div class="t" style="left:383px;top:92.8px;font-size:20.4px;letter-spacing:0.5px;color:#f2f2f2;line-height:22px">177.4136</div><div class="t" style="left:486px;top:92.8px;font-size:20.4px;letter-spacing:0.5px;color:#f2f2f2;line-height:22px">137.9680</div><div class="t" style="left:589px;top:92.8px;font-size:20.4px;letter-spacing:0.5px;color:#f2f2f2;line-height:22px">96.4360</div><div class="t" style="left:680px;top:92.8px;font-size:20.4px;letter-spacing:0.5px;color:#f2f2f2;line-height:22px">0.3463</div><div class="t" style="left:759px;top:92.8px;font-size:20.4px;letter-spacing:0.5px;color:#f2f2f2;line-height:22px">26.0449</div><div class="t" style="left:856px;top:92.8px;font-size:20.4px;letter-spacing:0.5px;color:#f2f2f2;line-height:22px">100.0365</div><div class="t" style="left:959px;top:92.8px;font-size:20.4px;letter-spacing:0.5px;color:#f2f2f2;line-height:22px">52.2625</div><div class="t" style="left:1050px;top:92.8px;font-size:20.4px;letter-spacing:0.5px;color:#f2f2f2;line-height:22px">34.0871</div><div class="t" style="left:1141px;top:92.8px;font-size:20.4px;letter-spacing:0.5px;color:#f2f2f2;line-height:22px">67.3992</div><div class="t" style="left:1260px;top:92.8px;font-size:20.4px;letter-spacing:0.5px;color:#f2f2f2;line-height:22px">113.2831</div><div class="t" style="left:1387px;top:92.8px;font-size:20.4px;letter-spacing:0.5px;color:#f2f2f2;line-height:22px">81.4364</div><div class="t" style="left:1478px;top:92.8px;font-size:20.4px;letter-spacing:0.5px;color:#f2f2f2;line-height:22px">31.0320</div><div class="t" style="left:25px;top:121.9px;font-size:20px;letter-spacing:0.35px;color:#f2f2f2;line-height:22px">Target x:CIE31</div><div class="t" style="left:177px;top:121.9px;font-size:20.4px;letter-spacing:0.5px;color:#f2f2f2;line-height:22px">0.3127</div><div class="t" style="left:280px;top:121.9px;font-size:20.4px;letter-spacing:0.5px;color:#f2f2f2;line-height:22px">0.3127</div><div class="t" style="left:383px;top:121.9px;font-size:20.4px;letter-spacing:0.5px;color:#f2f2f2;line-height:22px">0.3127</div><div class="t" style="left:486px;top:121.9px;font-size:20.4px;letter-spacing:0.5px;color:#f2f2f2;line-height:22px">0.3127</div><div class="t" style="left:589px;top:121.9px;font-size:20.4px;letter-spacing:0.5px;color:#f2f2f2;line-height:22px">0.3127</div><div class="t" style="left:680px;top:121.9px;font-size:20.4px;letter-spacing:0.5px;color:#f2f2f2;line-height:22px">0.3127</div><div class="t" style="left:759px;top:121.9px;font-size:20.4px;letter-spacing:0.5px;color:#f2f2f2;line-height:22px">0.4003</div><div class="t" style="left:856px;top:121.9px;font-size:20.4px;letter-spacing:0.5px;color:#f2f2f2;line-height:22px">0.3795</div><div class="t" style="left:959px;top:121.9px;font-size:20.4px;letter-spacing:0.5px;color:#f2f2f2;line-height:22px">0.2496</div><div class="t" style="left:1050px;top:121.9px;font-size:20.4px;letter-spacing:0.5px;color:#f2f2f2;line-height:22px">0.3395</div><div class="t" style="left:1141px;top:121.9px;font-size:20.4px;letter-spacing:0.5px;color:#f2f2f2;line-height:22px">0.2681</div><div class="t" style="left:1260px;top:121.9px;font-size:20.4px;letter-spacing:0.5px;color:#f2f2f2;line-height:22px">0.2626</div><div class="t" style="left:1387px;top:121.9px;font-size:20.4px;letter-spacing:0.5px;color:#f2f2f2;line-height:22px">0.5122</div><div class="t" style="left:1478px;top:121.9px;font-size:20.4px;letter-spacing:0.5px;color:#f2f2f2;line-height:22px">0.2166</div><div class="t" style="left:25px;top:150.9px;font-size:20px;letter-spacing:0.35px;color:#f2f2f2;line-height:22px">Target y:CIE31</div><div class="t" style="left:177px;top:150.9px;font-size:20.4px;letter-spacing:0.5px;color:#f2f2f2;line-height:22px">0.3290</div><div class="t" style="left:280px;top:150.9px;font-size:20.4px;letter-spacing:0.5px;color:#f2f2f2;line-height:22px">0.3290</div><div class="t" style="left:383px;top:150.9px;font-size:20.4px;letter-spacing:0.5px;color:#f2f2f2;line-height:22px">0.3290</div><div class="t" style="left:486px;top:150.9px;font-size:20.4px;letter-spacing:0.5px;color:#f2f2f2;line-height:22px">0.3290</div><div class="t" style="left:589px;top:150.9px;font-size:20.4px;letter-spacing:0.5px;color:#f2f2f2;line-height:22px">0.3290</div><div class="t" style="left:680px;top:150.9px;font-size:20.4px;letter-spacing:0.5px;color:#f2f2f2;line-height:22px">0.3290</div><div class="t" style="left:759px;top:150.9px;font-size:20.4px;letter-spacing:0.5px;color:#f2f2f2;line-height:22px">0.3642</div><div class="t" style="left:856px;top:150.9px;font-size:20.4px;letter-spacing:0.5px;color:#f2f2f2;line-height:22px">0.3562</div><div class="t" style="left:959px;top:150.9px;font-size:20.4px;letter-spacing:0.5px;color:#f2f2f2;line-height:22px">0.2656</div><div class="t" style="left:1050px;top:150.9px;font-size:20.4px;letter-spacing:0.5px;color:#f2f2f2;line-height:22px">0.4271</div><div class="t" style="left:1141px;top:150.9px;font-size:20.4px;letter-spacing:0.5px;color:#f2f2f2;line-height:22px">0.2525</div><div class="t" style="left:1260px;top:150.9px;font-size:20.4px;letter-spacing:0.5px;color:#f2f2f2;line-height:22px">0.3616</div><div class="t" style="left:1387px;top:150.9px;font-size:20.4px;letter-spacing:0.5px;color:#f2f2f2;line-height:22px">0.4063</div><div class="t" style="left:1478px;top:150.9px;font-size:20.4px;letter-spacing:0.5px;color:#f2f2f2;line-height:22px">0.1920</div><div class="t" style="left:25px;top:179.9px;font-size:20px;letter-spacing:0.35px;color:#f2f2f2;line-height:22px">Target Y</div><div class="t" style="left:177px;top:179.9px;font-size:20.4px;letter-spacing:0.5px;color:#f2f2f2;line-height:22px">269.5767</div><div class="t" style="left:280px;top:179.9px;font-size:20.4px;letter-spacing:0.5px;color:#f2f2f2;line-height:22px">213.3155</div><div class="t" style="left:383px;top:179.9px;font-size:20.4px;letter-spacing:0.5px;color:#f2f2f2;line-height:22px">171.8813</div><div class="t" style="left:486px;top:179.9px;font-size:20.4px;letter-spacing:0.5px;color:#f2f2f2;line-height:22px">132.3678</div><div class="t" style="left:589px;top:179.9px;font-size:20.4px;letter-spacing:0.5px;color:#f2f2f2;line-height:22px">92.1722</div><div class="t" style="left:680px;top:179.9px;font-size:20.4px;letter-spacing:0.5px;color:#f2f2f2;line-height:22px">0.0000</div><div class="t" style="left:759px;top:179.9px;font-size:20.4px;letter-spacing:0.5px;color:#f2f2f2;line-height:22px">27.1553</div><div class="t" style="left:856px;top:179.9px;font-size:20.4px;letter-spacing:0.5px;color:#f2f2f2;line-height:22px">94.0692</div><div class="t" style="left:959px;top:179.9px;font-size:20.4px;letter-spacing:0.5px;color:#f2f2f2;line-height:22px">50.4065</div><div class="t" style="left:1050px;top:179.9px;font-size:20.4px;letter-spacing:0.5px;color:#f2f2f2;line-height:22px">35.1325</div><div class="t" style="left:1141px;top:179.9px;font-size:20.4px;letter-spacing:0.5px;color:#f2f2f2;line-height:22px">62.8612</div><div class="t" style="left:1260px;top:179.9px;font-size:20.4px;letter-spacing:0.5px;color:#f2f2f2;line-height:22px">112.8799</div><div class="t" style="left:1387px;top:179.9px;font-size:20.4px;letter-spacing:0.5px;color:#f2f2f2;line-height:22px">76.4191</div><div class="t" style="left:1478px;top:179.9px;font-size:20.4px;letter-spacing:0.5px;color:#f2f2f2;line-height:22px">31.6858</div><div class="t" style="left:25px;top:209.0px;font-size:20px;letter-spacing:0.35px;color:#f2f2f2;line-height:22px">&Delta;E 2000</div><div class="t" style="left:177px;top:209.0px;font-size:20.4px;letter-spacing:0.5px;color:#f2f2f2;line-height:22px">5.1502</div><div class="t" style="left:280px;top:209.0px;font-size:20.4px;letter-spacing:0.5px;color:#f2f2f2;line-height:22px">4.2293</div><div class="t" style="left:383px;top:209.0px;font-size:20.4px;letter-spacing:0.5px;color:#f2f2f2;line-height:22px">3.9387</div><div class="t" style="left:486px;top:209.0px;font-size:20.4px;letter-spacing:0.5px;color:#f2f2f2;line-height:22px">3.7135</div><div class="t" style="left:589px;top:209.0px;font-size:20.4px;letter-spacing:0.5px;color:#f2f2f2;line-height:22px">3.4434</div><div class="t" style="left:680px;top:209.0px;font-size:20.4px;letter-spacing:0.5px;color:#f2f2f2;line-height:22px">1.4365</div><div class="t" style="left:759px;top:209.0px;font-size:20.4px;letter-spacing:0.5px;color:#f2f2f2;line-height:22px">2.2767</div><div class="t" style="left:856px;top:209.0px;font-size:20.4px;letter-spacing:0.5px;color:#f2f2f2;line-height:22px">1.9843</div><div class="t" style="left:959px;top:209.0px;font-size:20.4px;letter-spacing:0.5px;color:#f2f2f2;line-height:22px">2.9419</div><div class="t" style="left:1050px;top:209.0px;font-size:20.4px;letter-spacing:0.5px;color:#f2f2f2;line-height:22px">2.5893</div><div class="t" style="left:1141px;top:209.0px;font-size:20.4px;letter-spacing:0.5px;color:#f2f2f2;line-height:22px">1.9025</div><div class="t" style="left:1260px;top:209.0px;font-size:20.4px;letter-spacing:0.5px;color:#f2f2f2;line-height:22px">4.0260</div><div class="t" style="left:1387px;top:209.0px;font-size:20.4px;letter-spacing:0.5px;color:#f2f2f2;line-height:22px">6.1592</div><div class="t" style="left:1478px;top:209.0px;font-size:20.4px;letter-spacing:0.5px;color:#f2f2f2;line-height:22px">1.9917</div></div><div style="position:absolute;left:390px;top:1023px;width:1526.5px;height:17px;background:#5e5e5e"></div><div style="position:absolute;left:413px;top:1025px;width:673px;height:13px;background:#525252;border-radius:6px"></div><svg style="position:absolute;left:390px;top:1023px" width="1522" height="17"><rect x="2" y="1.5" width="18" height="14" rx="3" fill="#7a7a7a"/><path d="M14 3.5v10l-6.5-5z" fill="#3a3a3a"/><rect x="1507" y="1.5" width="18" height="14" rx="3" fill="#7a7a7a"/><path d="M1514 3.5v10l6.5-5z" fill="#3a3a3a"/></svg>
<div style="position:absolute;left:0;top:1046px;width:1436px;height:94px;background:#2e2e2e"></div><div style="position:absolute;left:0;top:1040px;width:1436px;height:82px;overflow:hidden"><div style="position:absolute;left:2px;top:7px;width:74px;height:72px;border-radius:5px;background:linear-gradient(#a2a2a2,#8a8a8a 40%,#646464);box-shadow:inset 0 0 0 1px #5a5a5a"></div><div style="position:absolute;left:9px;top:14px;width:60px;height:36px;border-radius:6px;background:#ffffff;box-shadow:inset 0 2px 2px rgba(0,0,0,0.25),0 1px 1px rgba(255,255,255,0.4)"></div><div class="t" style="left:2px;top:58px;width:74px;text-align:center;font-size:16px;color:#2a2a2a;line-height:20px;font-weight:bold;letter-spacing:-0.3px;-webkit-text-stroke:0">White</div><div style="position:absolute;left:80px;top:7px;width:74px;height:72px;border-radius:5px;background:linear-gradient(#a2a2a2,#8a8a8a 40%,#646464);box-shadow:inset 0 0 0 1px #5a5a5a"></div><div style="position:absolute;left:87px;top:14px;width:60px;height:36px;border-radius:6px;background:#e6e6e6;box-shadow:inset 0 2px 2px rgba(0,0,0,0.25),0 1px 1px rgba(255,255,255,0.4)"></div><div class="t" style="left:80px;top:58px;width:74px;text-align:center;font-size:16px;color:#2a2a2a;line-height:20px;font-weight:bold;letter-spacing:-0.3px;-webkit-text-stroke:0">Gray 80</div><div style="position:absolute;left:158px;top:7px;width:74px;height:72px;border-radius:5px;background:linear-gradient(#a2a2a2,#8a8a8a 40%,#646464);box-shadow:inset 0 0 0 1px #5a5a5a"></div><div style="position:absolute;left:165px;top:14px;width:60px;height:36px;border-radius:6px;background:#d2d2d2;box-shadow:inset 0 2px 2px rgba(0,0,0,0.25),0 1px 1px rgba(255,255,255,0.4)"></div><div class="t" style="left:158px;top:58px;width:74px;text-align:center;font-size:16px;color:#2a2a2a;line-height:20px;font-weight:bold;letter-spacing:-0.3px;-webkit-text-stroke:0">Gray 65</div><div style="position:absolute;left:236px;top:7px;width:74px;height:72px;border-radius:5px;background:linear-gradient(#a2a2a2,#8a8a8a 40%,#646464);box-shadow:inset 0 0 0 1px #5a5a5a"></div><div style="position:absolute;left:243px;top:14px;width:60px;height:36px;border-radius:6px;background:#bababa;box-shadow:inset 0 2px 2px rgba(0,0,0,0.25),0 1px 1px rgba(255,255,255,0.4)"></div><div class="t" style="left:236px;top:58px;width:74px;text-align:center;font-size:16px;color:#2a2a2a;line-height:20px;font-weight:bold;letter-spacing:-0.3px;-webkit-text-stroke:0">Gray 50</div><div style="position:absolute;left:314px;top:7px;width:74px;height:72px;border-radius:5px;background:linear-gradient(#a2a2a2,#8a8a8a 40%,#646464);box-shadow:inset 0 0 0 1px #5a5a5a"></div><div style="position:absolute;left:321px;top:14px;width:60px;height:36px;border-radius:6px;background:#a1a1a1;box-shadow:inset 0 2px 2px rgba(0,0,0,0.25),0 1px 1px rgba(255,255,255,0.4)"></div><div class="t" style="left:314px;top:58px;width:74px;text-align:center;font-size:16px;color:#2a2a2a;line-height:20px;font-weight:bold;letter-spacing:-0.3px;-webkit-text-stroke:0">Gray 35</div><div style="position:absolute;left:392px;top:7px;width:74px;height:72px;border-radius:5px;background:linear-gradient(#a2a2a2,#8a8a8a 40%,#646464);box-shadow:inset 0 0 0 1px #5a5a5a"></div><div style="position:absolute;left:399px;top:14px;width:60px;height:36px;border-radius:6px;background:#000000;box-shadow:inset 0 2px 2px rgba(0,0,0,0.25),0 1px 1px rgba(255,255,255,0.4)"></div><div class="t" style="left:392px;top:58px;width:74px;text-align:center;font-size:16px;color:#2a2a2a;line-height:20px;font-weight:bold;letter-spacing:-0.3px;-webkit-text-stroke:0">Black</div><div style="position:absolute;left:470px;top:7px;width:74px;height:72px;border-radius:5px;background:linear-gradient(#a2a2a2,#8a8a8a 40%,#646464);box-shadow:inset 0 0 0 1px #5a5a5a"></div><div style="position:absolute;left:477px;top:14px;width:60px;height:36px;border-radius:6px;background:#735244;box-shadow:inset 0 2px 2px rgba(0,0,0,0.25),0 1px 1px rgba(255,255,255,0.4)"></div><div class="t" style="left:470px;top:58px;width:74px;text-align:center;font-size:16px;color:#2a2a2a;line-height:20px;font-weight:bold;letter-spacing:-0.3px;-webkit-text-stroke:0">Dark Skin</div><div style="position:absolute;left:548px;top:7px;width:74px;height:72px;border-radius:5px;background:linear-gradient(#a2a2a2,#8a8a8a 40%,#646464);box-shadow:inset 0 0 0 1px #5a5a5a"></div><div style="position:absolute;left:555px;top:14px;width:60px;height:36px;border-radius:6px;background:#c29682;box-shadow:inset 0 2px 2px rgba(0,0,0,0.25),0 1px 1px rgba(255,255,255,0.4)"></div><div class="t" style="left:548px;top:58px;width:74px;text-align:center;font-size:16px;color:#2a2a2a;line-height:20px;font-weight:bold;letter-spacing:-0.3px;-webkit-text-stroke:0">Light Skin</div><div style="position:absolute;left:626px;top:7px;width:74px;height:72px;border-radius:5px;background:linear-gradient(#a2a2a2,#8a8a8a 40%,#646464);box-shadow:inset 0 0 0 1px #5a5a5a"></div><div style="position:absolute;left:633px;top:14px;width:60px;height:36px;border-radius:6px;background:#5f7ea6;box-shadow:inset 0 2px 2px rgba(0,0,0,0.25),0 1px 1px rgba(255,255,255,0.4)"></div><div class="t" style="left:626px;top:58px;width:74px;text-align:center;font-size:16px;color:#2a2a2a;line-height:20px;font-weight:bold;letter-spacing:-0.3px;-webkit-text-stroke:0">Blue Sky</div><div style="position:absolute;left:704px;top:7px;width:74px;height:72px;border-radius:5px;background:linear-gradient(#a2a2a2,#8a8a8a 40%,#646464);box-shadow:inset 0 0 0 1px #5a5a5a"></div><div style="position:absolute;left:711px;top:14px;width:60px;height:36px;border-radius:6px;background:#5a6b3f;box-shadow:inset 0 2px 2px rgba(0,0,0,0.25),0 1px 1px rgba(255,255,255,0.4)"></div><div class="t" style="left:704px;top:58px;width:74px;text-align:center;font-size:16px;color:#2a2a2a;line-height:20px;font-weight:bold;letter-spacing:-0.3px;-webkit-text-stroke:0">Foliage</div><div style="position:absolute;left:782px;top:7px;width:74px;height:72px;border-radius:5px;background:linear-gradient(#a2a2a2,#8a8a8a 40%,#646464);box-shadow:inset 0 0 0 1px #5a5a5a"></div><div style="position:absolute;left:789px;top:15px;width:60px;height:18px;border-radius:6px;background:#8582b7;box-shadow:inset 0 2px 2px rgba(0,0,0,0.25)"></div><div class="t" style="left:796px;top:41.5px;text-align:left;width:80px;font-size:16px;color:#2a2a2a;line-height:18px;font-weight:bold;letter-spacing:-0.3px;-webkit-text-stroke:0">Blue<br>Flower</div><div style="position:absolute;left:860px;top:7px;width:74px;height:72px;border-radius:5px;background:linear-gradient(#a2a2a2,#8a8a8a 40%,#646464);box-shadow:inset 0 0 0 1px #5a5a5a"></div><div style="position:absolute;left:867px;top:15px;width:60px;height:18px;border-radius:6px;background:#63c2aa;box-shadow:inset 0 2px 2px rgba(0,0,0,0.25)"></div><div class="t" style="left:860px;top:41.5px;text-align:center;width:74px;font-size:16px;color:#2a2a2a;line-height:18px;font-weight:bold;letter-spacing:-0.3px;-webkit-text-stroke:0">Bluish<br>Green</div><div style="position:absolute;left:938px;top:7px;width:74px;height:72px;border-radius:5px;background:linear-gradient(#a2a2a2,#8a8a8a 40%,#646464);box-shadow:inset 0 0 0 1px #5a5a5a"></div><div style="position:absolute;left:945px;top:14px;width:60px;height:36px;border-radius:6px;background:#e07c27;box-shadow:inset 0 2px 2px rgba(0,0,0,0.25),0 1px 1px rgba(255,255,255,0.4)"></div><div class="t" style="left:938px;top:58px;width:74px;text-align:center;font-size:16px;color:#2a2a2a;line-height:20px;font-weight:bold;letter-spacing:-0.3px;-webkit-text-stroke:0">Orange</div><div style="position:absolute;left:1016px;top:7px;width:74px;height:72px;border-radius:5px;background:linear-gradient(#a2a2a2,#8a8a8a 40%,#646464);box-shadow:inset 0 0 0 1px #5a5a5a"></div><div style="position:absolute;left:1023px;top:15px;width:60px;height:18px;border-radius:6px;background:#4255a8;box-shadow:inset 0 2px 2px rgba(0,0,0,0.25)"></div><div class="t" style="left:1023px;top:41.5px;text-align:left;width:80px;font-size:16px;color:#2a2a2a;line-height:18px;font-weight:bold;letter-spacing:-0.3px;-webkit-text-stroke:0">Purplish<br>Blue</div><div style="position:absolute;left:1094px;top:7px;width:74px;height:72px;border-radius:5px;background:linear-gradient(#a2a2a2,#8a8a8a 40%,#646464);box-shadow:inset 0 0 0 1px #5a5a5a"></div><div style="position:absolute;left:1101px;top:15px;width:60px;height:18px;border-radius:6px;background:#cb5262;box-shadow:inset 0 2px 2px rgba(0,0,0,0.25)"></div><div class="t" style="left:1095px;top:41.5px;text-align:left;width:80px;font-size:16px;color:#2a2a2a;line-height:18px;font-weight:bold;letter-spacing:-0.3px;-webkit-text-stroke:0">Moderate<br>Red</div><div style="position:absolute;left:1172px;top:7px;width:74px;height:72px;border-radius:5px;background:linear-gradient(#a2a2a2,#8a8a8a 40%,#646464);box-shadow:inset 0 0 0 1px #5a5a5a"></div><div style="position:absolute;left:1179px;top:14px;width:60px;height:36px;border-radius:6px;background:#5d3c6c;box-shadow:inset 0 2px 2px rgba(0,0,0,0.25),0 1px 1px rgba(255,255,255,0.4)"></div><div class="t" style="left:1172px;top:58px;width:74px;text-align:center;font-size:16px;color:#2a2a2a;line-height:20px;font-weight:bold;letter-spacing:-0.3px;-webkit-text-stroke:0">Purple</div><div style="position:absolute;left:1250px;top:7px;width:74px;height:72px;border-radius:5px;background:linear-gradient(#a2a2a2,#8a8a8a 40%,#646464);box-shadow:inset 0 0 0 1px #5a5a5a"></div><div style="position:absolute;left:1257px;top:15px;width:60px;height:18px;border-radius:6px;background:#9ebd42;box-shadow:inset 0 2px 2px rgba(0,0,0,0.25)"></div><div class="t" style="left:1250px;top:41.5px;text-align:center;width:74px;font-size:16px;color:#2a2a2a;line-height:18px;font-weight:bold;letter-spacing:-0.3px;-webkit-text-stroke:0">Yellow<br>Green</div><div style="position:absolute;left:1328px;top:7px;width:74px;height:72px;border-radius:5px;background:linear-gradient(#a2a2a2,#8a8a8a 40%,#646464);box-shadow:inset 0 0 0 1px #5a5a5a"></div><div style="position:absolute;left:1335px;top:15px;width:60px;height:18px;border-radius:6px;background:#e8a22e;box-shadow:inset 0 2px 2px rgba(0,0,0,0.25)"></div><div class="t" style="left:1328px;top:41.5px;text-align:center;width:74px;font-size:16px;color:#2a2a2a;line-height:18px;font-weight:bold;letter-spacing:-0.3px;-webkit-text-stroke:0">Orange<br>Yellow</div><div style="position:absolute;left:1406px;top:7px;width:74px;height:72px;border-radius:5px;background:linear-gradient(#a2a2a2,#8a8a8a 40%,#646464);box-shadow:inset 0 0 0 1px #5a5a5a"></div><div style="position:absolute;left:1413px;top:14px;width:60px;height:36px;border-radius:6px;background:#2d3e9c"></div><div class="t" style="left:1424px;top:58px;font-size:16px;color:#2a2a2a;line-height:20px;font-weight:bold;-webkit-text-stroke:0">B</div></div><div style="position:absolute;left:0;top:1122px;width:1436px;height:18px;background:#646464"></div><div style="position:absolute;left:22px;top:1124px;width:850px;height:14px;background:#4e4e4e;border-radius:7px"></div><svg style="position:absolute;left:0;top:1122px" width="1436" height="18"><rect x="3" y="2" width="17" height="14" rx="3" fill="#7a7a7a"/><path d="M14 4v10l-6-5z" fill="#3a3a3a"/><rect x="1415" y="2" width="17" height="14" rx="3" fill="#7a7a7a"/><path d="M1421 4v10l6-5z" fill="#3a3a3a"/></svg><div style="position:absolute;left:1436px;top:1040px;width:484px;height:100px;background:#2e2e2e"></div><div style="position:absolute;left:1436px;top:1047px;width:71px;height:90px;border-radius:6px;background:linear-gradient(#a6a6a6,#8a8a8a 30%,#7e7e7e 31%,#a0a0a0 60%,#8a8a8a)"></div><div style="position:absolute;left:1436px;top:1074px;width:71px;height:1.5px;background:#6a6a6a"></div><svg style="position:absolute;left:1436px;top:1040px" width="72" height="100"><circle cx="35.5" cy="20" r="11" fill="#8e8e8e"/><path d="M28.5 23.5h14l-7-7z" fill="#333"/><defs><linearGradient id="sqg" x1="0" y1="0" x2="0" y2="1"><stop offset="0.5" stop-color="#acacac"/><stop offset="0.5" stop-color="#9c9c9c"/></linearGradient><linearGradient id="sqb" x1="0" y1="0" x2="0" y2="1"><stop offset="0.5" stop-color="#1c1c1c"/><stop offset="0.5" stop-color="#000"/></linearGradient></defs><rect x="13.5" y="45" width="44" height="44" rx="7" fill="url(#sqg)" stroke="#2a2a2a" stroke-width="3.5"/><rect x="25" y="56.5" width="21" height="20.5" fill="url(#sqb)"/></svg><div style="position:absolute;left:1510.5px;top:1047px;width:67.8px;height:45px;background:linear-gradient(#b4b4b4,#909090);box-shadow:inset -1px 0 0 #444"></div><div style="position:absolute;left:1578.3px;top:1047px;width:67.8px;height:45px;background:linear-gradient(#b4b4b4,#909090);box-shadow:inset -1px 0 0 #444"></div><div style="position:absolute;left:1646.1px;top:1047px;width:67.8px;height:45px;background:linear-gradient(#b4b4b4,#909090);box-shadow:inset -1px 0 0 #444"></div><div style="position:absolute;left:1713.9px;top:1047px;width:67.8px;height:45px;background:linear-gradient(#b4b4b4,#909090);box-shadow:inset -1px 0 0 #444"></div><div style="position:absolute;left:1781.7px;top:1047px;width:67.8px;height:45px;background:linear-gradient(#3a3a3a,#2c2c2c);box-shadow:inset -1px 0 0 #444"></div><div style="position:absolute;left:1849.5px;top:1047px;width:67.8px;height:45px;background:linear-gradient(#3a3a3a,#2c2c2c);box-shadow:inset -1px 0 0 #444"></div><svg style="position:absolute;left:1509px;top:1047px" width="411" height="93"><defs><linearGradient id="tcg" x1="0" y1="0" x2="0" y2="1"><stop offset="0" stop-color="#8a8a8a"/><stop offset="1" stop-color="#b0b0b0"/></linearGradient><linearGradient id="tcd" x1="0" y1="0" x2="0" y2="1"><stop offset="0" stop-color="#2a2a2a"/><stop offset="1" stop-color="#3c3c3c"/></linearGradient></defs><circle cx="34.6" cy="23" r="14.5" fill="url(#tcg)"/><g transform="translate(34.6,23)"><rect x="-6" y="-6" width="12" height="12" fill="#2e2e2e"/></g><circle cx="102.4" cy="23" r="14.5" fill="url(#tcg)"/><g transform="translate(102.4,23)"><path d="M-4.5 -7L8.5 0.5L-4.5 7.5Z" fill="#2e2e2e"/></g><circle cx="170.2" cy="23" r="14.5" fill="url(#tcg)"/><g transform="translate(170.2,23)"><path d="M-6 -7.5h-2.5v15h2.5M6 -7.5h2.5v15h-2.5" fill="none" stroke="#2e2e2e" stroke-width="3"/><rect x="-3.5" y="-1" width="2.6" height="2.6" fill="#2e2e2e"/><rect x="1" y="-1" width="2.6" height="2.6" fill="#2e2e2e"/></g><circle cx="238.0" cy="23" r="14.5" fill="url(#tcg)"/><g transform="translate(238.0,23)"><path d="M0 0.5C-3 -4 -9.5 -4 -9.5 0.5C-9.5 5 -3 5 0 0.5C3 -4 9.5 -4 9.5 0.5C9.5 5 3 5 0 0.5Z" fill="none" stroke="#2e2e2e" stroke-width="2.8"/></g><circle cx="305.8" cy="23" r="14.5" fill="url(#tcd)"/><g transform="translate(305.8,23)"><path d="M-7 -1.5A7 7 0 0 1 5.5 -4.5M7 1.5A7 7 0 0 1 -5.5 4.5" fill="none" stroke="#222" stroke-width="3.2"/><path d="M3 -8L8.5 -2.5L2 -1Z M-3 8L-8.5 2.5L-2 1Z" fill="#222"/></g><circle cx="373.6" cy="23" r="14.5" fill="url(#tcd)"/><g transform="translate(373.6,23)"></g></svg><div style="position:absolute;left:1509px;top:1093px;width:204px;height:44px;border-radius:0 0 0 6px;background:linear-gradient(#b8b8b8,#8e8e8e)"></div><div style="position:absolute;left:1714px;top:1093px;width:198px;height:44px;border-radius:0 6px 6px 0;background:linear-gradient(#b8b8b8,#8e8e8e)"></div><svg style="position:absolute;left:1509px;top:1093px" width="411" height="44"><circle cx="46" cy="22.5" r="14.5" fill="#a4a4a4"/><path d="M47 15l-7 7.5l7 7.5M53 15l-7 7.5l7 7.5" fill="none" stroke="#333" stroke-width="2.8"/><circle cx="365.5" cy="22.5" r="14.5" fill="#a4a4a4"/><path d="M358 15l7 7.5l-7 7.5M364 15l7 7.5l-7 7.5" fill="none" stroke="#333" stroke-width="2.8"/></svg><div class="t" style="left:1595px;top:1096px;font-size:32px;font-weight:bold;color:#333;line-height:40px;-webkit-text-stroke:0">Back</div><div class="t" style="left:1755px;top:1095px;font-size:34.5px;font-weight:bold;color:#333;line-height:40px;-webkit-text-stroke:0">Next</div>
</body></html>
